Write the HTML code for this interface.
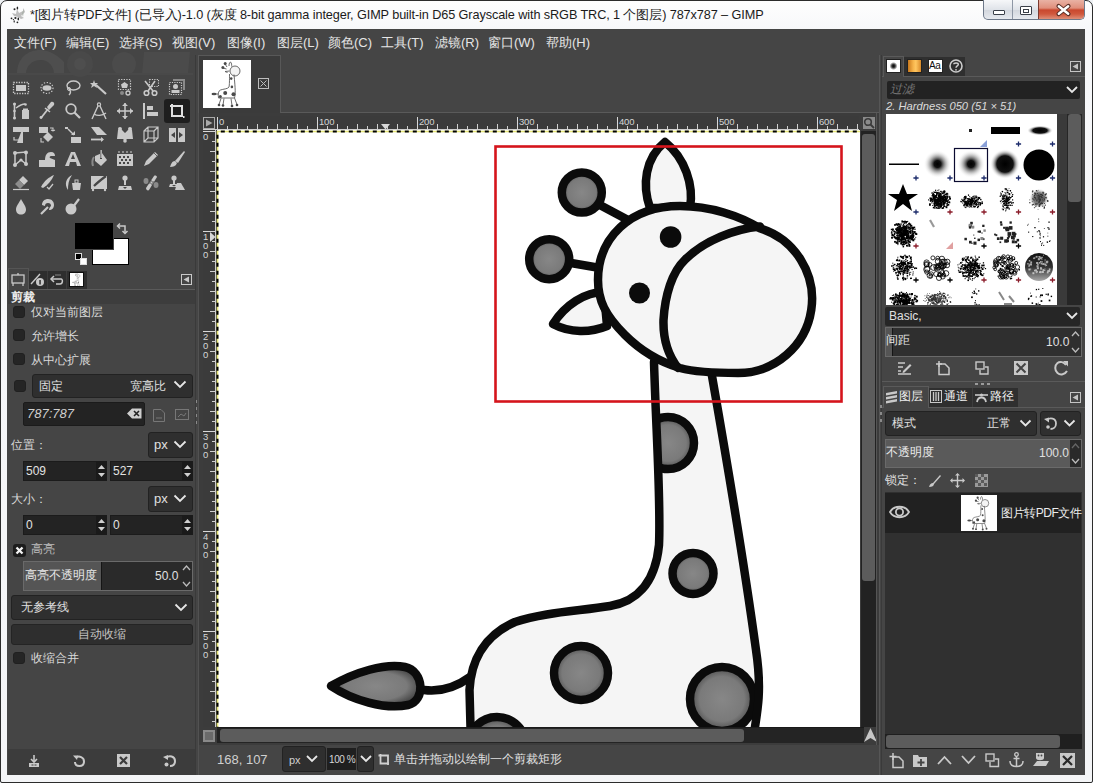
<!DOCTYPE html>
<html><head><meta charset="utf-8">
<style>
*{margin:0;padding:0;box-sizing:border-box}
html,body{width:1093px;height:783px;overflow:hidden;background:#eef1f4;font-family:"Liberation Sans",sans-serif}
.a{position:absolute}
svg{position:absolute;overflow:visible}
#frame{position:absolute;left:0;top:0;width:1093px;height:783px;border:1px solid #2c2c2c;border-radius:7px 7px 2px 2px;background:linear-gradient(#fefefe,#f7f8fa 29px,#f4f5f7)}
#title{position:absolute;left:30px;top:7px;font-size:12.7px;color:#1a1a1a;white-space:nowrap;letter-spacing:-0.1px}
#win{position:absolute;left:7px;top:29px;width:1078px;height:746px;background:#454545;overflow:hidden}
.m{position:absolute;top:8px;font-size:13px;color:#e8e8e8;white-space:nowrap}
.t{position:absolute;color:#dadada;font-size:12px;white-space:nowrap;line-height:14px}
.cb{position:absolute;width:12px;height:12px;border-radius:3px;background:#242424;border:1px solid #1d1d1d}
.dd{position:absolute;background:#2a2a2a;border:1px solid #1e1e1e;border-radius:3px}
.en{position:absolute;background:#222;border:1px solid #1c1c1c;border-radius:2px}
.chev{position:absolute;width:9px;height:9px;border-right:2px solid #e2e2e2;border-bottom:2px solid #e2e2e2;transform:rotate(45deg)}
</style></head><body>
<div id="frame"></div>
<!-- window buttons -->
<div class="a" style="left:983px;top:0;width:102px;height:20px;border:1px solid #6d7889;border-top:none;border-radius:0 0 5px 5px;background:linear-gradient(#f6f7f9,#dfe3e9 50%,#d2d6dd 51%,#e6e9ee);overflow:hidden">
 <div class="a" style="left:28px;top:0;width:1px;height:20px;background:#8e97a5"></div>
 <div class="a" style="left:54px;top:0;width:48px;height:20px;background:linear-gradient(#e9b2a4,#e08f7c 40%,#c9482f 50%,#d0583d 70%,#e19a84);border-left:1px solid #7b3a30"></div>
 <div class="a" style="left:9px;top:10px;width:12px;height:5px;border:1px solid #3a3f48;background:#fff;border-radius:1px"></div>
 <div class="a" style="left:36px;top:6px;width:12px;height:9px;border:1px solid #3a3f48;background:#fff;border-radius:1px"><div class="a" style="left:2px;top:2px;width:6px;height:4px;border:1px solid #3a3f48"></div></div>
 <svg style="left:73px;top:5px" width="13" height="10" viewBox="0 0 13 10"><path d="M1.5 1 L11.5 9 M11.5 1 L1.5 9" stroke="#5a3028" stroke-width="4.2" stroke-linecap="round"/><path d="M1.8 1.2 L11.2 8.8 M11.2 1.2 L1.8 8.8" stroke="#fff" stroke-width="2.4" stroke-linecap="round"/></svg>
</div>
<!-- title icon -->
<svg style="left:5px;top:3px" width="25" height="24" viewBox="0 0 25 24"><path d="M12 6 L14 10 L18 8 L18.5 5 L20 9 L16 13 L19 15 L16 16 L13 14 L9 13 L7 10 L11 11Z" fill="#bdbdbd"/><path d="M17 10 L19 6 L18 14Z" fill="#a8b0a8"/><g fill="#222"><ellipse cx="12.4" cy="5" rx="0.8" ry="1.6"/><circle cx="9.5" cy="6.3" r="1"/><circle cx="10.4" cy="15" r="1.1"/><ellipse cx="13.3" cy="16" rx="0.8" ry="1.4"/><circle cx="12.4" cy="19.3" r="0.9"/><circle cx="6.5" cy="15.3" r="0.9"/><circle cx="8.4" cy="16.6" r="0.7"/><ellipse cx="9.2" cy="18.4" rx="0.6" ry="1.2"/></g></svg>
<div id="title">*[图片转PDF文件] (已导入)-1.0 (灰度 8-bit gamma integer, GIMP built-in D65 Grayscale with sRGB TRC, 1 个图层) 787x787 – GIMP</div>
<div id="win">

</div>
<div class="t" style="left:14px;top:35px;font-size:13px;color:#e6e6e6;line-height:16px">文件(F)</div>
<div class="t" style="left:66px;top:35px;font-size:13px;color:#e6e6e6;line-height:16px">编辑(E)</div>
<div class="t" style="left:119px;top:35px;font-size:13px;color:#e6e6e6;line-height:16px">选择(S)</div>
<div class="t" style="left:172px;top:35px;font-size:13px;color:#e6e6e6;line-height:16px">视图(V)</div>
<div class="t" style="left:227px;top:35px;font-size:13px;color:#e6e6e6;line-height:16px">图像(I)</div>
<div class="t" style="left:277px;top:35px;font-size:13px;color:#e6e6e6;line-height:16px">图层(L)</div>
<div class="t" style="left:328px;top:35px;font-size:13px;color:#e6e6e6;line-height:16px">颜色(C)</div>
<div class="t" style="left:381px;top:35px;font-size:13px;color:#e6e6e6;line-height:16px">工具(T)</div>
<div class="t" style="left:435px;top:35px;font-size:13px;color:#e6e6e6;line-height:16px">滤镜(R)</div>
<div class="t" style="left:488px;top:35px;font-size:13px;color:#e6e6e6;line-height:16px">窗口(W)</div>
<div class="t" style="left:546px;top:35px;font-size:13px;color:#e6e6e6;line-height:16px">帮助(H)</div>
<svg style="left:8px;top:52px" width="185" height="24" viewBox="0 0 185 24"><g fill="#4e4e4e"><path d="M9 22 C9 6 20 -2 32 -2 C42 -2 50 4 56 10 L56 22 L46 22 C46 14 40 8 33 8 C24 8 18 14 18 22Z"/><circle cx="72" cy="12" r="13" fill="#494949"/><circle cx="72" cy="12" r="6" fill="#4e4e4e"/><circle cx="116" cy="12" r="12" fill="#4b4b4b"/><path d="M136 0 L182 0 L180 22 L134 22Z" fill="#4b4b4b"/><rect x="0" y="21" width="185" height="2" fill="#494949"/></g></svg>
<div class="a" style="left:164px;top:99px;width:26px;height:24px;background:#1e1e1e;border-radius:3px"></div>
<svg style="left:13px;top:80px" width="16" height="16" viewBox="0 0 16 16"><rect x="0.5" y="2.5" width="15" height="11" fill="none" stroke="#c9c9c9" stroke-width="1.3" stroke-dasharray="1.3 1.3"/><rect x="3" y="5" width="10" height="6" fill="#c9c9c9"/></svg>
<svg style="left:39px;top:80px" width="16" height="16" viewBox="0 0 16 16"><ellipse cx="8" cy="8" rx="6" ry="5.5" fill="none" stroke="#c9c9c9" stroke-width="1.2" stroke-dasharray="1.3 1.6"/><ellipse cx="8" cy="8" rx="4.5" ry="2.8" fill="#c9c9c9"/></svg>
<svg style="left:65px;top:80px" width="16" height="16" viewBox="0 0 16 16"><ellipse cx="8.5" cy="5.5" rx="6.5" ry="4.5" fill="none" stroke="#c9c9c9" stroke-width="1.4"/><path d="M4 9 C6 11 6 13 4 15" fill="none" stroke="#c9c9c9" stroke-width="1.4"/><circle cx="4" cy="9" r="1.5" fill="none" stroke="#c9c9c9" stroke-width="1"/></svg>
<svg style="left:91px;top:80px" width="16" height="16" viewBox="0 0 16 16"><path d="M3 0 L4 3 L7 3 L5 5 L6 8 L3 6 L0 8 L1 5 L-1 3 L2 3Z" fill="#c9c9c9"/><path d="M5 5 L15 14" stroke="#c9c9c9" stroke-width="2.2"/></svg>
<svg style="left:117px;top:80px" width="16" height="16" viewBox="0 0 16 16"><rect x="1.5" y="-0.5" width="12" height="10" fill="none" stroke="#c9c9c9" stroke-width="1.2" stroke-dasharray="1.3 1.3"/><path d="M7.5 2 L11 4.5 L10 8 L5 8 L4 4.5Z" fill="#c9c9c9"/><circle cx="5" cy="13" r="2" fill="#8a8a8a"/><circle cx="11" cy="13" r="2" fill="none" stroke="#c9c9c9" stroke-width="1.3"/></svg>
<svg style="left:143px;top:80px" width="16" height="16" viewBox="0 0 16 16"><rect x="6.5" y="-0.5" width="9" height="7" fill="none" stroke="#c9c9c9" stroke-width="1.1" stroke-dasharray="1.2 1.2"/><path d="M2 1 L10 11 M12 1 L5 11" stroke="#c9c9c9" stroke-width="1.6"/><circle cx="3.5" cy="13" r="2.3" fill="none" stroke="#c9c9c9" stroke-width="1.6"/><circle cx="11.5" cy="13" r="2.3" fill="none" stroke="#c9c9c9" stroke-width="1.6"/></svg>
<svg style="left:169px;top:80px" width="16" height="16" viewBox="0 0 16 16"><path d="M4 -1 L16 -1 L16 10 L14 10 L14 1 L4 1Z" fill="#8a8a8a"/><rect x="0.5" y="2.5" width="12" height="12" fill="none" stroke="#c9c9c9" stroke-width="1.2" stroke-dasharray="1.2 1.2"/><circle cx="6.5" cy="6.5" r="2.5" fill="#c9c9c9"/><path d="M2.5 13 L2.5 10 L10.5 10 L10.5 13Z" fill="#c9c9c9"/></svg>
<svg style="left:13px;top:103px" width="16" height="16" viewBox="0 0 16 16"><path d="M1.5 0 L1.5 16" stroke="#c9c9c9" stroke-width="1.6"/><circle cx="1.5" cy="1" r="1.5" fill="#c9c9c9"/><circle cx="1.5" cy="8" r="1.3" fill="#c9c9c9"/><circle cx="1.5" cy="15" r="1.5" fill="#c9c9c9"/><path d="M3 5 C7 2 10 1 12 1" fill="none" stroke="#c9c9c9" stroke-width="1.3"/><circle cx="12.5" cy="1.5" r="1.3" fill="#c9c9c9"/><rect x="9" y="7" width="7" height="9" fill="#c9c9c9"/><rect x="10" y="5.5" width="5" height="1.5" fill="#c9c9c9"/></svg>
<svg style="left:39px;top:103px" width="16" height="16" viewBox="0 0 16 16"><path d="M2 15 L9 6" stroke="#c9c9c9" stroke-width="1.8"/><path d="M8 4 L12 -1 C14 -2 16 0 15 2 L10 7Z" fill="#c9c9c9"/><path d="M6 5 L11 9" stroke="#c9c9c9" stroke-width="1.6"/><circle cx="2" cy="14.5" r="1.4" fill="#c9c9c9"/></svg>
<svg style="left:65px;top:103px" width="16" height="16" viewBox="0 0 16 16"><circle cx="6" cy="6" r="4.8" fill="none" stroke="#c9c9c9" stroke-width="1.8"/><path d="M9.5 9.5 L15 15" stroke="#c9c9c9" stroke-width="2.2"/></svg>
<svg style="left:91px;top:103px" width="16" height="16" viewBox="0 0 16 16"><circle cx="8" cy="1.5" r="1.6" fill="none" stroke="#c9c9c9" stroke-width="1.2"/><path d="M7 3 L1 16 M9 3 L15 16" stroke="#c9c9c9" stroke-width="1.4"/><path d="M3 11 C6 13 11 13 15 10" fill="none" stroke="#c9c9c9" stroke-width="1.3"/></svg>
<svg style="left:117px;top:103px" width="16" height="16" viewBox="0 0 16 16"><path d="M8 0 L8 16 M0 8 L16 8" stroke="#c9c9c9" stroke-width="1.5"/><path d="M8 0 L5 3 L11 3Z M8 16 L5 13 L11 13Z M0 8 L3 5 L3 11Z M16 8 L13 5 L13 11Z" fill="#c9c9c9"/></svg>
<svg style="left:143px;top:103px" width="16" height="16" viewBox="0 0 16 16"><rect x="0" y="0" width="2" height="16" fill="#c9c9c9"/><rect x="4" y="3" width="6" height="4" fill="#c9c9c9"/><rect x="4" y="9" width="11" height="4" fill="#c9c9c9"/></svg>
<svg style="left:169px;top:103px" width="16" height="16" viewBox="0 0 16 16"><path d="M3 1 L3 13 L14 13" fill="none" stroke="#e0e0e0" stroke-width="2"/><path d="M1 3 L13 3 L13 14" fill="none" stroke="#e0e0e0" stroke-width="2"/><rect x="14" y="13" width="1.5" height="2" fill="#e0e0e0"/></svg>
<svg style="left:13px;top:127px" width="16" height="16" viewBox="0 0 16 16"><rect x="0" y="0" width="16" height="5" fill="#c9c9c9"/><path d="M10 0 L10 16 L4 16Z" fill="#c9c9c9"/><path d="M1 10 L1 13 L6 13" fill="none" stroke="#c9c9c9" stroke-width="1.2"/><path d="M6 11 L8 13 L6 15" fill="none" stroke="#c9c9c9" stroke-width="1.2"/></svg>
<svg style="left:39px;top:127px" width="16" height="16" viewBox="0 0 16 16"><rect x="0" y="0" width="9" height="6" fill="#c9c9c9"/><path d="M9 5 L14 10 L9 15 L4 10Z" fill="#c9c9c9"/><path d="M11 1 L14 1 L14 4 M12 3 L14 4 L16 3" fill="none" stroke="#c9c9c9" stroke-width="1.1"/><path d="M2 11 L2 15 L5 15" fill="none" stroke="#c9c9c9" stroke-width="1.1"/></svg>
<svg style="left:65px;top:127px" width="16" height="16" viewBox="0 0 16 16"><rect x="0" y="0" width="3" height="2" fill="#c9c9c9"/><path d="M3 2 L9 8" stroke="#c9c9c9" stroke-width="1.4"/><path d="M6 8 L10 8 L10 4Z" fill="#c9c9c9"/><rect x="6" y="10" width="10" height="6" fill="#c9c9c9"/></svg>
<svg style="left:91px;top:127px" width="16" height="16" viewBox="0 0 16 16"><path d="M0 0 L8 0 L16 8 L6 8Z" fill="#c9c9c9"/><path d="M0 12.5 L12 12.5" stroke="#c9c9c9" stroke-width="1.8"/><path d="M10 10 L13 12.5 L10 15Z" fill="#c9c9c9"/></svg>
<svg style="left:117px;top:127px" width="16" height="16" viewBox="0 0 16 16"><path d="M1 3 L5 3 L8 6 L11 3 L15 3 L16 12 L10 12 L8 14 L6 12 L0 12Z" fill="#c9c9c9"/><circle cx="3" cy="2" r="2" fill="#c9c9c9"/><circle cx="13" cy="2" r="2" fill="#c9c9c9"/><circle cx="8" cy="14" r="1.8" fill="#c9c9c9"/></svg>
<svg style="left:143px;top:127px" width="16" height="16" viewBox="0 0 16 16"><path d="M1 4 L5 0 L15 0 L15 11 L11 15 L1 15Z M1 4 L11 4 L11 15 M11 4 L15 0 M5 0 L5 11 L1 15 M5 11 L15 11" fill="none" stroke="#c9c9c9" stroke-width="1.2"/></svg>
<svg style="left:169px;top:127px" width="16" height="16" viewBox="0 0 16 16"><rect x="0" y="1" width="7" height="14" fill="#c9c9c9"/><rect x="9" y="1" width="7" height="14" fill="#c9c9c9"/><path d="M2 8 L6 5 L6 11Z M14 8 L10 5 L10 11Z" fill="#454545"/></svg>
<svg style="left:13px;top:151px" width="16" height="16" viewBox="0 0 16 16"><path d="M2 2 L13 1 L13 13 L8 9 L2 14Z" fill="none" stroke="#c9c9c9" stroke-width="1.5"/><circle cx="2" cy="2" r="2" fill="#c9c9c9"/><circle cx="13" cy="1.5" r="2" fill="#c9c9c9"/><circle cx="13" cy="13" r="2" fill="#c9c9c9"/><circle cx="2" cy="14" r="2" fill="#c9c9c9"/><circle cx="8" cy="9" r="1.6" fill="#c9c9c9"/></svg>
<svg style="left:39px;top:151px" width="16" height="16" viewBox="0 0 16 16"><path d="M0 16 L0 9 L6 9 C6 4 8 1 12 1 C15 1 16 3 16 5 L12 5 C11 5 10 6 11 7 L16 9 L16 16Z" fill="#c9c9c9"/></svg>
<svg style="left:65px;top:151px" width="16" height="16" viewBox="0 0 16 16"><path d="M0 15 L6 1 L10 1 L16 15 L12 15 L11 11 L5 11 L4 15Z M6 8 L10 8 L8 3Z" fill="#c9c9c9" fill-rule="evenodd"/></svg>
<svg style="left:91px;top:151px" width="16" height="16" viewBox="0 0 16 16"><path d="M4 5 L11 2 L16 9 L10 15 L4 10Z" fill="#c9c9c9"/><rect x="9" y="-1" width="2" height="9" fill="#454545"/><rect x="9.5" y="-1" width="1.3" height="8" fill="#c9c9c9"/><path d="M3 6 C1 9 1 12 2 15" fill="none" stroke="#8a8a8a" stroke-width="2"/></svg>
<svg style="left:117px;top:151px" width="16" height="16" viewBox="0 0 16 16"><rect x="0" y="3" width="16" height="12" fill="#c9c9c9"/><g fill="#454545"><rect x="2" y="5" width="2" height="2"/><rect x="6" y="5" width="2" height="2"/><rect x="10" y="5" width="2" height="2"/><rect x="4" y="8" width="2" height="2"/><rect x="8" y="8" width="2" height="2"/><rect x="12" y="8" width="2" height="2"/><rect x="2" y="11" width="2" height="2"/><rect x="6" y="11" width="2" height="2"/><rect x="10" y="11" width="2" height="2"/></g><g fill="#8a8a8a"><rect x="1" y="0" width="2" height="2"/><rect x="5" y="0" width="2" height="2"/><rect x="9" y="0" width="2" height="2"/><rect x="13" y="0" width="2" height="2"/></g></svg>
<svg style="left:143px;top:151px" width="16" height="16" viewBox="0 0 16 16"><path d="M1 15 L3 10 L12 1 L15 4 L6 13Z" fill="#c9c9c9"/><path d="M11 2 L14 5" stroke="#454545" stroke-width="0.8"/></svg>
<svg style="left:169px;top:151px" width="16" height="16" viewBox="0 0 16 16"><path d="M6 10 L15 0 L16 1 L9 12Z" fill="#c9c9c9"/><path d="M1 16 C2 13 3 10 6 10 L8 12 C7 15 4 16 1 16Z" fill="#c9c9c9"/></svg>
<svg style="left:13px;top:175px" width="16" height="16" viewBox="0 0 16 16"><path d="M6 5 L10 1 L15 6 L11 10Z" fill="#c9c9c9"/><path d="M2 9 L6 5 L11 10 L7 14Z" fill="#8c8c8c"/><path d="M0 14.5 L16 14.5" stroke="#c9c9c9" stroke-width="1.2"/></svg>
<svg style="left:39px;top:175px" width="16" height="16" viewBox="0 0 16 16"><path d="M2 12 C5 6 10 2 15 0 C13 5 9 10 4 13Z" fill="#c9c9c9"/><path d="M8 12 L10 14 L14 9" fill="none" stroke="#c9c9c9" stroke-width="1.3"/></svg>
<svg style="left:65px;top:175px" width="16" height="16" viewBox="0 0 16 16"><path d="M7 0 C1 3 -1 9 3 15 C3 10 3.5 5 7 0Z" fill="#c9c9c9"/><path d="M7 8 L16 8 L15 15 L8 15Z" fill="#c9c9c9"/><rect x="10" y="5" width="3" height="3" fill="none" stroke="#c9c9c9" stroke-width="1"/></svg>
<svg style="left:91px;top:175px" width="16" height="16" viewBox="0 0 16 16"><rect x="0" y="1" width="16" height="13" fill="#c9c9c9"/><path d="M3 11 C5 9 11 4 15 1" stroke="#454545" stroke-width="2.2"/><circle cx="2" cy="15" r="1.2" fill="#c9c9c9"/><circle cx="14" cy="15" r="1.2" fill="#c9c9c9"/></svg>
<svg style="left:117px;top:175px" width="16" height="16" viewBox="0 0 16 16"><circle cx="8" cy="3" r="2.6" fill="#c9c9c9"/><rect x="7" y="4" width="2" height="6" fill="#c9c9c9"/><path d="M1 15 L2 11 L14 11 L15 15Z" fill="#c9c9c9"/><path d="M6 12 L10 12 L8 14Z" fill="#454545"/></svg>
<svg style="left:143px;top:175px" width="16" height="16" viewBox="0 0 16 16"><ellipse cx="3" cy="6" rx="2.5" ry="3" fill="#8a8a8a"/><ellipse cx="13" cy="10" rx="2.5" ry="3" fill="#8a8a8a"/><path d="M3 13 L11 1 C12 0 14 1 14 2 L6 15 C5 16 3 15 3 13Z" fill="#c9c9c9"/><g fill="#454545"><circle cx="8" cy="6" r="0.8"/><circle cx="10" cy="7" r="0.8"/><circle cx="7" cy="8" r="0.8"/><circle cx="9" cy="9" r="0.8"/></g></svg>
<svg style="left:169px;top:175px" width="16" height="16" viewBox="0 0 16 16"><circle cx="5" cy="3" r="2.6" fill="#c9c9c9"/><rect x="4" y="4" width="2" height="5" fill="#c9c9c9"/><path d="M0 12 L1 9 L10 9 L10 12Z" fill="#c9c9c9"/><path d="M8 8 L12 8 L16 15 L6 15Z" fill="#c9c9c9"/><path d="M3 10 L7 10 L5 11.5Z" fill="#454545"/></svg>
<svg style="left:13px;top:199px" width="16" height="16" viewBox="0 0 16 16"><path d="M8 0 C10 4 13 7 13 10.5 C13 13.5 11 15.5 8 15.5 C5 15.5 3 13.5 3 10.5 C3 7 6 4 8 0Z" fill="#c9c9c9"/></svg>
<svg style="left:39px;top:199px" width="16" height="16" viewBox="0 0 16 16"><path d="M3 6 C3 2 6 0 9 0 C13 0 15 3 15 6 C15 9 13 11 10 11 C10 9 11 8 12 7 C12 5 11 4 9 4 C7 4 6 5 6 7Z" fill="#c9c9c9"/><path d="M2 15 L9 8" stroke="#c9c9c9" stroke-width="2.2"/></svg>
<svg style="left:65px;top:199px" width="16" height="16" viewBox="0 0 16 16"><circle cx="6" cy="10" r="5.5" fill="#c9c9c9"/><path d="M8 8 L14 0" stroke="#c9c9c9" stroke-width="2.2"/></svg>
<div class="a" style="left:92px;top:238px;width:37px;height:27px;background:#fff;border:1px solid #000"></div>
<div class="a" style="left:74px;top:222px;width:40px;height:28px;background:#000;border:1px solid #454545"></div>
<div class="a" style="left:75px;top:223px;width:38px;height:26px;background:#000"></div>
<svg style="left:117px;top:223px" width="12" height="12" viewBox="0 0 12 12"><path d="M1 3 L8 3 L8 10" fill="none" stroke="#c9c9c9" stroke-width="1.5"/><path d="M3 0.5 L0.5 3 L3 5.5 M5.5 8 L8 10.5 L10.5 8" fill="none" stroke="#c9c9c9" stroke-width="1.5"/></svg>
<div class="a" style="left:75px;top:253px;width:7px;height:7px;background:#000;border:1px solid #ddd"></div>
<div class="a" style="left:80px;top:258px;width:7px;height:7px;background:#fff;border:1px solid #ddd"></div>
<div class="a" style="left:8px;top:289px;width:187px;height:1px;background:#5a5a5a"></div>
<div class="a" style="left:8px;top:268px;width:21px;height:22px;background:#454545;border:1px solid #555;border-bottom:none"></div>
<div class="a" style="left:29px;top:271px;width:58px;height:18px;background:#2e2e2e"></div>
<div class="a" style="left:47px;top:271px;width:1px;height:18px;background:#3c3c3c"></div>
<div class="a" style="left:66px;top:271px;width:1px;height:18px;background:#3c3c3c"></div>
<svg style="left:11px;top:272px" width="16" height="14" viewBox="0 0 16 14"><rect x="1" y="3" width="12" height="8" fill="none" stroke="#c9c9c9" stroke-width="1.3"/><path d="M7 1 L7 3 M2 11 L2 14 M12 11 L12 14" stroke="#c9c9c9" stroke-width="1.3"/></svg>
<svg style="left:31px;top:272px" width="14" height="14" viewBox="0 0 14 14"><path d="M0 12 L9 2" stroke="#c9c9c9" stroke-width="1.4"/><circle cx="9" cy="10" r="4" fill="#c9c9c9"/><rect x="8.3" y="8" width="1.5" height="4.5" fill="#2e2e2e"/></svg>
<svg style="left:50px;top:273px" width="14" height="13" viewBox="0 0 14 13"><path d="M1 6 L11 6 C13 6 13 11 10 11 L6 11" fill="none" stroke="#c9c9c9" stroke-width="1.5"/><path d="M4 3 L1 6 L4 9" fill="none" stroke="#c9c9c9" stroke-width="1.5"/><path d="M5 2 L11 2" stroke="#777" stroke-width="1.2"/></svg>
<div class="a" style="left:69px;top:272px;width:15px;height:15px;background:#fff;border:1px solid #111"></div>
<svg style="left:70px;top:273px" width="13" height="13" viewBox="0 0 48 48"><g fill="none" stroke="#5a5a5a" stroke-width="0.9"><circle cx="32" cy="11" r="5" fill="#f4f4f4"/><path d="M26 6 C26 3 27 2 27.5 2 C28.5 3 29 5 28.5 6.5"/><path d="M24 7 L22 4 M23.5 9 L20 8 M26.5 11 L22 11.5 L24.5 12.5"/><path d="M26.5 14 C26.5 20 26.5 25 26 27 C25 29 20 29 17.5 30 C15 31 15 34 15.5 38 L31.5 38 C32.5 34 32.5 30 31 14.5"/><path d="M9 34 L15 34"/><path d="M18 38.5 L16 44.5 M21 38.5 L20 45 M28 38.5 L29 45.5 M31.5 38 L34 44.5"/></g><g fill="#4a4a4a"><circle cx="22.2" cy="3.6" r="1.5"/><circle cx="19.9" cy="7.6" r="1.5"/><circle cx="28.2" cy="18.6" r="1.3"/><circle cx="28.9" cy="26.9" r="1.3"/><circle cx="22.2" cy="32.9" r="2"/><circle cx="30.5" cy="34.2" r="2"/><circle cx="17.3" cy="36.5" r="1.5"/><ellipse cx="11" cy="34" rx="2.5" ry="1.2"/><circle cx="16" cy="45" r="1.3"/><circle cx="20" cy="45.5" r="1.3"/><circle cx="29" cy="46" r="1.3"/><circle cx="34" cy="45" r="1.3"/></g></svg>
<svg style="left:181px;top:274px" width="11" height="11" viewBox="0 0 11 11"><rect x="0.5" y="0.5" width="10" height="10" fill="none" stroke="#c9c9c9" stroke-width="1"/><path d="M8 2.5 L8 8.5 L2.5 5.5Z" fill="#c9c9c9"/></svg>
<div class="a" style="left:8px;top:290px;width:187px;height:14px;background:#3d3d3d"></div>
<div class="t" style="left:11px;top:289px;font-weight:bold;color:#eee;font-size:12px;line-height:16px">剪裁</div>
<div class="a" style="left:13px;top:306px;width:12px;height:12px;background:#252525;border-radius:3px;border:1px solid #202020"></div>
<div class="t" style="left:31px;top:305px;line-height:14px">仅对当前图层</div>
<div class="a" style="left:13px;top:329px;width:12px;height:12px;background:#252525;border-radius:3px;border:1px solid #202020"></div>
<div class="t" style="left:31px;top:329px;">允许增长</div>
<div class="a" style="left:13px;top:353px;width:12px;height:12px;background:#252525;border-radius:3px;border:1px solid #202020"></div>
<div class="t" style="left:31px;top:353px;">从中心扩展</div>
<div class="a" style="left:14px;top:380px;width:12px;height:12px;background:#252525;border-radius:3px;border:1px solid #202020"></div>
<div class="a" style="left:32px;top:374px;width:161px;height:24px;background:#2f2f2f;border:1px solid #222;border-radius:3px"></div>
<div class="t" style="left:39px;top:379px;color:#e0e0e0">固定</div>
<div class="t" style="left:130px;top:379px;color:#e0e0e0">宽高比</div>
<svg style="left:173px;top:380px" width="14" height="9" viewBox="0 0 14 9"><path d="M1.5 1.5 L7 7 L12.5 1.5" fill="none" stroke="#e6e6e6" stroke-width="1.8"/></svg>
<div class="a" style="left:23px;top:402px;width:122px;height:24px;background:#232323;border:1px solid #1b1b1b;border-radius:2px"></div>
<div class="t" style="left:27px;top:407px;font-style:italic;color:#cfcfcf;font-size:13px">787:787</div>
<svg style="left:127px;top:408px" width="15" height="11" viewBox="0 0 15 11"><path d="M0 5.5 L5 0.5 L14.5 0.5 L14.5 10.5 L5 10.5Z" fill="#cfcfcf"/><path d="M7 3 L12 8 M12 3 L7 8" stroke="#232323" stroke-width="1.6"/></svg>
<svg style="left:153px;top:409px" width="12" height="13" viewBox="0 0 12 13"><path d="M0.5 0.5 L8 0.5 L11.5 4 L11.5 12.5 L0.5 12.5Z" fill="none" stroke="#777" stroke-width="1"/><path d="M3 9 L9 9" stroke="#777"/></svg>
<svg style="left:175px;top:409px" width="14" height="11" viewBox="0 0 14 11"><rect x="0.5" y="0.5" width="13" height="10" fill="none" stroke="#777" stroke-width="1"/><path d="M3 8 L6 5 L9 7 L11 4" fill="none" stroke="#777"/></svg>
<svg style="left:195px;top:400px" width="3" height="26" viewBox="0 0 3 26"><g fill="#8a8a8a"><rect x="0" y="0" width="2" height="3"/><rect x="0" y="7" width="2" height="3"/><rect x="0" y="14" width="2" height="3"/><rect x="0" y="21" width="2" height="3"/></g></svg>
<div class="t" style="left:11px;top:438px;">位置：</div>
<div class="a" style="left:148px;top:432px;width:45px;height:26px;background:#2f2f2f;border:1px solid #222;border-radius:3px"></div>
<div class="t" style="left:154px;top:438px;font-size:13px;color:#e0e0e0">px</div>
<svg style="left:173px;top:440px" width="14" height="9" viewBox="0 0 14 9"><path d="M1.5 1.5 L7 7 L12.5 1.5" fill="none" stroke="#e6e6e6" stroke-width="1.8"/></svg>
<div class="a" style="left:23px;top:461px;width:84px;height:20px;background:#232323;border:1px solid #1b1b1b"></div>
<div class="a" style="left:96px;top:461px;width:11px;height:20px;background:#1a1a1a"></div>
<div class="t" style="left:26px;top:464px;font-size:12px;color:#e2e2e2">509</div>
<svg style="left:97px;top:463px" width="9" height="16" viewBox="0 0 9 16"><path d="M1 6 L4.5 2 L8 6Z M1 10 L4.5 14 L8 10Z" fill="#d0d0d0"/></svg>
<div class="a" style="left:110px;top:461px;width:83px;height:20px;background:#232323;border:1px solid #1b1b1b"></div>
<div class="a" style="left:182px;top:461px;width:11px;height:20px;background:#1a1a1a"></div>
<div class="t" style="left:113px;top:464px;font-size:12px;color:#e2e2e2">527</div>
<svg style="left:183px;top:463px" width="9" height="16" viewBox="0 0 9 16"><path d="M1 6 L4.5 2 L8 6Z M1 10 L4.5 14 L8 10Z" fill="#d0d0d0"/></svg>
<div class="t" style="left:11px;top:492px;">大小：</div>
<div class="a" style="left:148px;top:486px;width:45px;height:26px;background:#2f2f2f;border:1px solid #222;border-radius:3px"></div>
<div class="t" style="left:154px;top:492px;font-size:13px;color:#e0e0e0">px</div>
<svg style="left:173px;top:494px" width="14" height="9" viewBox="0 0 14 9"><path d="M1.5 1.5 L7 7 L12.5 1.5" fill="none" stroke="#e6e6e6" stroke-width="1.8"/></svg>
<div class="a" style="left:23px;top:515px;width:84px;height:20px;background:#232323;border:1px solid #1b1b1b"></div>
<div class="a" style="left:96px;top:515px;width:11px;height:20px;background:#1a1a1a"></div>
<div class="t" style="left:26px;top:518px;font-size:12px;color:#e2e2e2">0</div>
<svg style="left:97px;top:517px" width="9" height="16" viewBox="0 0 9 16"><path d="M1 6 L4.5 2 L8 6Z M1 10 L4.5 14 L8 10Z" fill="#d0d0d0"/></svg>
<div class="a" style="left:110px;top:515px;width:83px;height:20px;background:#232323;border:1px solid #1b1b1b"></div>
<div class="a" style="left:182px;top:515px;width:11px;height:20px;background:#1a1a1a"></div>
<div class="t" style="left:113px;top:518px;font-size:12px;color:#e2e2e2">0</div>
<svg style="left:183px;top:517px" width="9" height="16" viewBox="0 0 9 16"><path d="M1 6 L4.5 2 L8 6Z M1 10 L4.5 14 L8 10Z" fill="#d0d0d0"/></svg>
<div class="a" style="left:13px;top:544px;width:13px;height:13px;background:#1c1c1c;border-radius:3px"></div>
<svg style="left:13px;top:544px" width="13" height="13" viewBox="0 0 13 13"><path d="M3.5 3.5 L9.5 9.5 M9.5 3.5 L3.5 9.5" stroke="#f4f4f4" stroke-width="2.3"/></svg>
<div class="t" style="left:31px;top:542px;color:#bdbdbd">高亮</div>
<div class="a" style="left:23px;top:561px;width:170px;height:30px;background:#2a2a2a;border:1px solid #6a6a6a"></div>
<div class="a" style="left:24px;top:562px;width:77px;height:28px;background:#555"></div>
<div class="a" style="left:101px;top:562px;width:1px;height:28px;background:#151515"></div>
<div class="t" style="left:25px;top:568px;color:#e8e8e8">高亮不透明度</div>
<div class="t" style="left:155px;top:569px;color:#e0e0e0">50.0</div>
<svg style="left:182px;top:563px" width="9" height="26" viewBox="0 0 9 26"><path d="M1 7 L4.5 3 L8 7 M1 19 L4.5 23 L8 19" fill="none" stroke="#bbb" stroke-width="1.3"/></svg>
<div class="a" style="left:11px;top:595px;width:182px;height:25px;background:#2f2f2f;border:1px solid #222;border-radius:3px"></div>
<div class="t" style="left:21px;top:600px;color:#e0e0e0">无参考线</div>
<svg style="left:174px;top:603px" width="14" height="9" viewBox="0 0 14 9"><path d="M1.5 1.5 L7 7 L12.5 1.5" fill="none" stroke="#e6e6e6" stroke-width="1.8"/></svg>
<div class="a" style="left:11px;top:624px;width:182px;height:21px;background:#2e2e2e;border:1px solid #242424;border-radius:3px"></div>
<div class="t" style="left:78px;top:627px;color:#c4c4c4">自动收缩</div>
<div class="a" style="left:13px;top:652px;width:12px;height:12px;background:#252525;border-radius:3px;border:1px solid #202020"></div>
<div class="t" style="left:31px;top:651px;">收缩合并</div>
<div class="a" style="left:195px;top:55px;width:1px;height:720px;background:#3a3a3a"></div>
<div class="a" style="left:198px;top:55px;width:1px;height:720px;background:#525252"></div>
<div class="a" style="left:8px;top:749px;width:187px;height:26px;background:#3c3c3c"></div>
<svg style="left:29px;top:755px" width="10" height="12" viewBox="0 0 10 12"><path d="M5 0 L5 6" stroke="#c9c9c9" stroke-width="1.6"/><path d="M2 4 L5 7 L8 4" fill="none" stroke="#c9c9c9" stroke-width="1.6"/><rect x="0" y="8" width="10" height="4" fill="#c9c9c9"/><rect x="2.5" y="9.5" width="2" height="1" fill="#3c3c3c"/><rect x="5.5" y="9.5" width="2" height="1" fill="#3c3c3c"/></svg>
<svg style="left:73px;top:755px" width="12" height="12" viewBox="0 0 12 12"><path d="M3 2.5 C6 0.5 11 2 11 6.5 C11 9.5 9 11 6.5 11 C4 11 2 9.5 2 7" fill="none" stroke="#c9c9c9" stroke-width="2"/><path d="M0 0.5 L5 0.5 L4 5Z" fill="#c9c9c9"/></svg>
<svg style="left:117px;top:754px" width="13" height="13" viewBox="0 0 13 13"><rect x="0" y="0" width="13" height="13" fill="#c9c9c9"/><path d="M3 3 L10 10 M10 3 L3 10" stroke="#3c3c3c" stroke-width="2.2"/></svg>
<svg style="left:163px;top:755px" width="13" height="12" viewBox="0 0 13 12"><path d="M3 3 C6 0 12 1 12 6 C12 9.5 9.5 11 7 11" fill="none" stroke="#c9c9c9" stroke-width="2"/><path d="M0 2 L5 0 L5 5Z" fill="#c9c9c9"/><circle cx="3.5" cy="9.5" r="2" fill="#c9c9c9"/></svg>
<div class="a" style="left:198px;top:55px;width:682px;height:58px;background:#454545"></div>
<div class="a" style="left:198px;top:112px;width:682px;height:1px;background:#5a5a5a"></div>
<div class="a" style="left:198px;top:55px;width:83px;height:58px;background:#3b3b3b;border:1px solid #585858;border-bottom:none"></div>
<div class="a" style="left:203px;top:60px;width:48px;height:48px;background:#fff"></div>
<svg style="left:203px;top:60px" width="48" height="48" viewBox="0 0 48 48"><g fill="none" stroke="#5a5a5a" stroke-width="0.9"><circle cx="32" cy="11" r="5" fill="#f4f4f4"/><path d="M26 6 C26 3 27 2 27.5 2 C28.5 3 29 5 28.5 6.5"/><path d="M24 7 L22 4 M23.5 9 L20 8 M26.5 11 L22 11.5 L24.5 12.5"/><path d="M26.5 14 C26.5 20 26.5 25 26 27 C25 29 20 29 17.5 30 C15 31 15 34 15.5 38 L31.5 38 C32.5 34 32.5 30 31 14.5"/><path d="M9 34 L15 34"/><path d="M18 38.5 L16 44.5 M21 38.5 L20 45 M28 38.5 L29 45.5 M31.5 38 L34 44.5"/></g><g fill="#4a4a4a"><circle cx="22.2" cy="3.6" r="1.5"/><circle cx="19.9" cy="7.6" r="1.5"/><circle cx="28.2" cy="18.6" r="1.3"/><circle cx="28.9" cy="26.9" r="1.3"/><circle cx="22.2" cy="32.9" r="2"/><circle cx="30.5" cy="34.2" r="2"/><circle cx="17.3" cy="36.5" r="1.5"/><ellipse cx="11" cy="34" rx="2.5" ry="1.2"/><circle cx="16" cy="45" r="1.3"/><circle cx="20" cy="45.5" r="1.3"/><circle cx="29" cy="46" r="1.3"/><circle cx="34" cy="45" r="1.3"/></g></svg>
<svg style="left:258px;top:78px" width="11" height="11" viewBox="0 0 11 11"><rect x="0.5" y="0.5" width="10" height="10" fill="none" stroke="#bdbdbd" stroke-width="1"/><path d="M2.5 2.5 L8.5 8.5 M8.5 2.5 L2.5 8.5" stroke="#bdbdbd" stroke-width="1"/></svg>
<div class="a" style="left:199px;top:113px;width:681px;height:632px;background:#3c3c3c"></div>
<div class="a" style="left:216px;top:116px;width:643px;height:14px;background:#3b3b3b"></div>
<div class="a" style="left:203px;top:130px;width:13px;height:597px;background:#3b3b3b"></div>
<div class="a" style="left:203px;top:129px;width:13px;height:1px;background:#cfcfcf"></div>
<div class="a" style="left:216px;top:129px;width:643px;height:1px;background:#cfcfcf"></div>
<div class="a" style="left:215px;top:130px;width:1px;height:597px;background:#cfcfcf"></div>
<svg style="left:203px;top:117px" width="12" height="12" viewBox="0 0 12 12"><rect x="0.5" y="0.5" width="11" height="11" fill="none" stroke="#aaa" stroke-width="1"/><path d="M3 2.5 L9.5 6 L3 9.5Z" fill="#aaa"/></svg>
<svg style="left:216px;top:116px" width="643" height="14" viewBox="0 0 643 14"><rect x="1" y="1" width="1" height="12" fill="#d8d8d8"/><rect x="11" y="10" width="1" height="3" fill="#d0d0d0"/><rect x="21" y="8" width="1" height="5" fill="#d0d0d0"/><rect x="31" y="10" width="1" height="3" fill="#d0d0d0"/><rect x="41" y="8" width="1" height="5" fill="#d0d0d0"/><rect x="51" y="10" width="1" height="3" fill="#d0d0d0"/><rect x="61" y="8" width="1" height="5" fill="#d0d0d0"/><rect x="71" y="10" width="1" height="3" fill="#d0d0d0"/><rect x="81" y="8" width="1" height="5" fill="#d0d0d0"/><rect x="91" y="10" width="1" height="3" fill="#d0d0d0"/><rect x="101" y="1" width="1" height="12" fill="#d8d8d8"/><rect x="111" y="10" width="1" height="3" fill="#d0d0d0"/><rect x="121" y="8" width="1" height="5" fill="#d0d0d0"/><rect x="131" y="10" width="1" height="3" fill="#d0d0d0"/><rect x="141" y="8" width="1" height="5" fill="#d0d0d0"/><rect x="151" y="10" width="1" height="3" fill="#d0d0d0"/><rect x="161" y="8" width="1" height="5" fill="#d0d0d0"/><rect x="171" y="10" width="1" height="3" fill="#d0d0d0"/><rect x="181" y="8" width="1" height="5" fill="#d0d0d0"/><rect x="191" y="10" width="1" height="3" fill="#d0d0d0"/><rect x="201" y="1" width="1" height="12" fill="#d8d8d8"/><rect x="211" y="10" width="1" height="3" fill="#d0d0d0"/><rect x="221" y="8" width="1" height="5" fill="#d0d0d0"/><rect x="231" y="10" width="1" height="3" fill="#d0d0d0"/><rect x="241" y="8" width="1" height="5" fill="#d0d0d0"/><rect x="251" y="10" width="1" height="3" fill="#d0d0d0"/><rect x="261" y="8" width="1" height="5" fill="#d0d0d0"/><rect x="271" y="10" width="1" height="3" fill="#d0d0d0"/><rect x="281" y="8" width="1" height="5" fill="#d0d0d0"/><rect x="291" y="10" width="1" height="3" fill="#d0d0d0"/><rect x="301" y="1" width="1" height="12" fill="#d8d8d8"/><rect x="311" y="10" width="1" height="3" fill="#d0d0d0"/><rect x="321" y="8" width="1" height="5" fill="#d0d0d0"/><rect x="331" y="10" width="1" height="3" fill="#d0d0d0"/><rect x="341" y="8" width="1" height="5" fill="#d0d0d0"/><rect x="351" y="10" width="1" height="3" fill="#d0d0d0"/><rect x="361" y="8" width="1" height="5" fill="#d0d0d0"/><rect x="371" y="10" width="1" height="3" fill="#d0d0d0"/><rect x="381" y="8" width="1" height="5" fill="#d0d0d0"/><rect x="391" y="10" width="1" height="3" fill="#d0d0d0"/><rect x="401" y="1" width="1" height="12" fill="#d8d8d8"/><rect x="411" y="10" width="1" height="3" fill="#d0d0d0"/><rect x="421" y="8" width="1" height="5" fill="#d0d0d0"/><rect x="431" y="10" width="1" height="3" fill="#d0d0d0"/><rect x="441" y="8" width="1" height="5" fill="#d0d0d0"/><rect x="451" y="10" width="1" height="3" fill="#d0d0d0"/><rect x="461" y="8" width="1" height="5" fill="#d0d0d0"/><rect x="471" y="10" width="1" height="3" fill="#d0d0d0"/><rect x="481" y="8" width="1" height="5" fill="#d0d0d0"/><rect x="491" y="10" width="1" height="3" fill="#d0d0d0"/><rect x="501" y="1" width="1" height="12" fill="#d8d8d8"/><rect x="511" y="10" width="1" height="3" fill="#d0d0d0"/><rect x="521" y="8" width="1" height="5" fill="#d0d0d0"/><rect x="531" y="10" width="1" height="3" fill="#d0d0d0"/><rect x="541" y="8" width="1" height="5" fill="#d0d0d0"/><rect x="551" y="10" width="1" height="3" fill="#d0d0d0"/><rect x="561" y="8" width="1" height="5" fill="#d0d0d0"/><rect x="571" y="10" width="1" height="3" fill="#d0d0d0"/><rect x="581" y="8" width="1" height="5" fill="#d0d0d0"/><rect x="591" y="10" width="1" height="3" fill="#d0d0d0"/><rect x="601" y="1" width="1" height="12" fill="#d8d8d8"/><rect x="611" y="10" width="1" height="3" fill="#d0d0d0"/><rect x="621" y="8" width="1" height="5" fill="#d0d0d0"/><rect x="631" y="10" width="1" height="3" fill="#d0d0d0"/><rect x="641" y="8" width="1" height="5" fill="#d0d0d0"/></svg>
<div class="t" style="left:219px;top:117px;font-size:9.5px;color:#d6d6d6;line-height:10px;letter-spacing:-0.2px">0</div>
<div class="t" style="left:319px;top:117px;font-size:9.5px;color:#d6d6d6;line-height:10px;letter-spacing:-0.2px">100</div>
<div class="t" style="left:419px;top:117px;font-size:9.5px;color:#d6d6d6;line-height:10px;letter-spacing:-0.2px">200</div>
<div class="t" style="left:519px;top:117px;font-size:9.5px;color:#d6d6d6;line-height:10px;letter-spacing:-0.2px">300</div>
<div class="t" style="left:619px;top:117px;font-size:9.5px;color:#d6d6d6;line-height:10px;letter-spacing:-0.2px">400</div>
<div class="t" style="left:719px;top:117px;font-size:9.5px;color:#d6d6d6;line-height:10px;letter-spacing:-0.2px">500</div>
<div class="t" style="left:819px;top:117px;font-size:9.5px;color:#d6d6d6;line-height:10px;letter-spacing:-0.2px">600</div>
<svg style="left:203px;top:130px" width="12" height="597" viewBox="0 0 12 597"><rect x="0" y="1" width="12" height="1" fill="#d8d8d8"/><rect x="9" y="11" width="3" height="1" fill="#d0d0d0"/><rect x="7" y="21" width="5" height="1" fill="#d0d0d0"/><rect x="9" y="31" width="3" height="1" fill="#d0d0d0"/><rect x="7" y="41" width="5" height="1" fill="#d0d0d0"/><rect x="9" y="51" width="3" height="1" fill="#d0d0d0"/><rect x="7" y="61" width="5" height="1" fill="#d0d0d0"/><rect x="9" y="71" width="3" height="1" fill="#d0d0d0"/><rect x="7" y="81" width="5" height="1" fill="#d0d0d0"/><rect x="9" y="91" width="3" height="1" fill="#d0d0d0"/><rect x="0" y="101" width="12" height="1" fill="#d8d8d8"/><rect x="9" y="111" width="3" height="1" fill="#d0d0d0"/><rect x="7" y="121" width="5" height="1" fill="#d0d0d0"/><rect x="9" y="131" width="3" height="1" fill="#d0d0d0"/><rect x="7" y="141" width="5" height="1" fill="#d0d0d0"/><rect x="9" y="151" width="3" height="1" fill="#d0d0d0"/><rect x="7" y="161" width="5" height="1" fill="#d0d0d0"/><rect x="9" y="171" width="3" height="1" fill="#d0d0d0"/><rect x="7" y="181" width="5" height="1" fill="#d0d0d0"/><rect x="9" y="191" width="3" height="1" fill="#d0d0d0"/><rect x="0" y="201" width="12" height="1" fill="#d8d8d8"/><rect x="9" y="211" width="3" height="1" fill="#d0d0d0"/><rect x="7" y="221" width="5" height="1" fill="#d0d0d0"/><rect x="9" y="231" width="3" height="1" fill="#d0d0d0"/><rect x="7" y="241" width="5" height="1" fill="#d0d0d0"/><rect x="9" y="251" width="3" height="1" fill="#d0d0d0"/><rect x="7" y="261" width="5" height="1" fill="#d0d0d0"/><rect x="9" y="271" width="3" height="1" fill="#d0d0d0"/><rect x="7" y="281" width="5" height="1" fill="#d0d0d0"/><rect x="9" y="291" width="3" height="1" fill="#d0d0d0"/><rect x="0" y="301" width="12" height="1" fill="#d8d8d8"/><rect x="9" y="311" width="3" height="1" fill="#d0d0d0"/><rect x="7" y="321" width="5" height="1" fill="#d0d0d0"/><rect x="9" y="331" width="3" height="1" fill="#d0d0d0"/><rect x="7" y="341" width="5" height="1" fill="#d0d0d0"/><rect x="9" y="351" width="3" height="1" fill="#d0d0d0"/><rect x="7" y="361" width="5" height="1" fill="#d0d0d0"/><rect x="9" y="371" width="3" height="1" fill="#d0d0d0"/><rect x="7" y="381" width="5" height="1" fill="#d0d0d0"/><rect x="9" y="391" width="3" height="1" fill="#d0d0d0"/><rect x="0" y="401" width="12" height="1" fill="#d8d8d8"/><rect x="9" y="411" width="3" height="1" fill="#d0d0d0"/><rect x="7" y="421" width="5" height="1" fill="#d0d0d0"/><rect x="9" y="431" width="3" height="1" fill="#d0d0d0"/><rect x="7" y="441" width="5" height="1" fill="#d0d0d0"/><rect x="9" y="451" width="3" height="1" fill="#d0d0d0"/><rect x="7" y="461" width="5" height="1" fill="#d0d0d0"/><rect x="9" y="471" width="3" height="1" fill="#d0d0d0"/><rect x="7" y="481" width="5" height="1" fill="#d0d0d0"/><rect x="9" y="491" width="3" height="1" fill="#d0d0d0"/><rect x="0" y="501" width="12" height="1" fill="#d8d8d8"/><rect x="9" y="511" width="3" height="1" fill="#d0d0d0"/><rect x="7" y="521" width="5" height="1" fill="#d0d0d0"/><rect x="9" y="531" width="3" height="1" fill="#d0d0d0"/><rect x="7" y="541" width="5" height="1" fill="#d0d0d0"/><rect x="9" y="551" width="3" height="1" fill="#d0d0d0"/><rect x="7" y="561" width="5" height="1" fill="#d0d0d0"/><rect x="9" y="571" width="3" height="1" fill="#d0d0d0"/><rect x="7" y="581" width="5" height="1" fill="#d0d0d0"/><rect x="9" y="591" width="3" height="1" fill="#d0d0d0"/></svg>
<div class="t" style="left:203px;top:132px;font-size:9.5px;color:#d6d6d6;line-height:9px">0</div>
<div class="t" style="left:203px;top:232px;font-size:9.5px;color:#d6d6d6;line-height:9px">1<br>0<br>0</div>
<div class="t" style="left:203px;top:332px;font-size:9.5px;color:#d6d6d6;line-height:9px">2<br>0<br>0</div>
<div class="t" style="left:203px;top:432px;font-size:9.5px;color:#d6d6d6;line-height:9px">3<br>0<br>0</div>
<div class="t" style="left:203px;top:532px;font-size:9.5px;color:#d6d6d6;line-height:9px">4<br>0<br>0</div>
<div class="t" style="left:203px;top:632px;font-size:9.5px;color:#d6d6d6;line-height:9px">5<br>0<br>0</div>
<div class="a" style="left:217px;top:130px;width:643px;height:597px;background:#fff"></div>
<svg style="left:216px;top:130px" width="644" height="597" viewBox="0 0 644 597"><path d="M1 1.5 L644 1.5 M1.5 1 L1.5 597" stroke="#e6e67a" stroke-width="1.6"/><path d="M4.8 1.5 L644 1.5" stroke="#000" stroke-width="2" stroke-dasharray="4 4"/><path d="M1.5 4.8 L1.5 597" stroke="#000" stroke-width="2" stroke-dasharray="4 4"/></svg>
<svg style="left:381px;top:124px" width="9" height="6" viewBox="0 0 9 6"><path d="M0 0 L9 0 L4.5 5.5Z" fill="#d8d8d8"/></svg>
<svg style="left:210px;top:232px" width="6" height="10" viewBox="0 0 6 10"><path d="M0 0 L5.5 5 L0 10Z" fill="#d8d8d8"/></svg>
<svg style="left:0px;top:0px" width="1093" height="783" viewBox="0 0 1093 783"><defs><clipPath id="cc"><rect x="217" y="131" width="643" height="596"/></clipPath></defs><g clip-path="url(#cc)">
<defs>
<radialGradient id="spg"><stop offset="0" stop-color="#878787"/><stop offset="0.7" stop-color="#7a7a7a"/><stop offset="1" stop-color="#4a4a4a"/></radialGradient>
<clipPath id="bodyc"><path d="M654 362 C656 430 661 500 659 545 C655 585 635 602 610 606 C580 611 545 612 515 622 C485 635 471 660 469.5 690 L471 745 L752 745 C758 710 762 690 756 650 C745 570 725 450 712 376Z"/></clipPath>
</defs>
<g stroke="#0b0b0b" stroke-width="8.5" stroke-linecap="round" stroke-linejoin="round">
 <path d="M331 686 C355 672 385 663 405 667 C424 671 426 701 408 705 C385 710 352 700 331 686Z" fill="url(#spg)"/>
 <path d="M424 690 C440 692 455 688 470 677" fill="none"/>
 <path d="M654 362 C656 430 661 500 659 545 C655 585 635 602 610 606 C580 611 545 612 515 622 C485 635 471 660 469.5 690 L471 745 L752 745 C758 710 762 690 756 650 C745 570 725 450 712 376Z" fill="#f5f5f5" stroke="none"/>
 <g clip-path="url(#bodyc)">
  <circle cx="668" cy="443" r="26" fill="url(#spg)"/>
  <circle cx="693" cy="573.5" r="20.5" fill="url(#spg)"/>
  <circle cx="581" cy="673" r="27" fill="url(#spg)"/>
  <circle cx="722" cy="699" r="32" fill="url(#spg)"/>
  <circle cx="497" cy="746" r="29" fill="url(#spg)"/>
 </g>
 <path d="M654 362 C656 430 661 500 659 545 C655 585 635 602 610 606 C580 611 545 612 515 622 C485 635 471 660 469.5 690 L471 745" fill="none"/>
 <path d="M712 376 C725 450 745 570 756 650 C762 690 758 710 752 745" fill="none"/>
 <path d="M650 208 C642 185 645 158 665 142 C685 158 694 185 690 208Z" fill="#f5f5f5"/>
 <path d="M598 204 L628 220 M571 263 L600 268" fill="none"/>
 <circle cx="581.8" cy="192.5" r="20" fill="url(#spg)"/>
 <circle cx="549.2" cy="259.2" r="20" fill="url(#spg)"/>
 <path d="M604 292 C585 292 565 305 553 324 C570 333 590 333 607 326Z" fill="#f5f5f5"/>
 <path d="M759.6 228.2 A74 74 0 0 1 738 373 C715 373 695 372 680 368 C660 362 640 350 625 335 C605 315 598 300 598 280 C598 238 630 206 680 206 C710 206 740 216 759.6 228.2Z" fill="#f5f5f5"/>
 <path d="M760 226.5 C735 229 705 240 685 259.7 C672 272 665 295 663.5 320 C663 338 668 355 678 368" fill="none"/>
</g>
<g fill="#0b0b0b"><circle cx="670.6" cy="237" r="10.8"/><circle cx="639.5" cy="293" r="10.5"/></g>
<rect x="495.5" y="146.5" width="346" height="255" fill="none" stroke="#d5141c" stroke-width="2.6"/></g></svg>
<div class="a" style="left:861px;top:131px;width:15px;height:596px;background:#222"></div>
<div class="a" style="left:862px;top:134px;width:13px;height:447px;background:#5c5c5c;border-radius:3px"></div>
<svg style="left:863px;top:117px" width="12" height="12" viewBox="0 0 12 12"><rect x="0" y="0" width="12" height="12" fill="#8a8a8a"/><circle cx="5" cy="5" r="3.3" fill="none" stroke="#3a3a3a" stroke-width="1.6"/><path d="M7.5 7.5 L11 11" stroke="#3a3a3a" stroke-width="1.8"/></svg>
<div class="a" style="left:217px;top:727px;width:647px;height:16px;background:#242424;border-top:1px solid #1a1a1a"></div>
<div class="a" style="left:220px;top:729px;width:524px;height:13px;background:#5c5c5c;border-radius:3px"></div>
<svg style="left:203px;top:730px" width="12" height="12" viewBox="0 0 12 12"><rect x="0" y="0" width="12" height="12" fill="#8a8a8a"/><rect x="2" y="2" width="8" height="8" fill="#6a6a6a"/></svg>
<svg style="left:864px;top:728px" width="13" height="14" viewBox="0 0 13 14"><path d="M6.5 0 L13 14 L6.5 10 L0 14Z" fill="#c6c6c6"/></svg>
<div class="a" style="left:876px;top:113px;width:1px;height:632px;background:#555"></div>
<div class="a" style="left:879px;top:55px;width:1px;height:720px;background:#565656"></div>
<div class="a" style="left:881px;top:55px;width:1px;height:720px;background:#3a3a3a"></div>
<div class="t" style="left:217px;top:752px;font-size:13px;color:#d0d0d0;line-height:16px">168, 107</div>
<div class="a" style="left:282px;top:746px;width:44px;height:26px;background:#2f2f2f;border:1px solid #222;border-radius:3px"></div>
<div class="t" style="left:289px;top:753px;font-size:11px;color:#cfcfcf">px</div>
<svg style="left:306px;top:755px" width="12" height="8" viewBox="0 0 12 8"><path d="M1 1 L6 6 L11 1" fill="none" stroke="#e6e6e6" stroke-width="1.8"/></svg>
<div class="a" style="left:327px;top:748px;width:29px;height:22px;background:#1f1f1f"></div>
<div class="t" style="left:329px;top:753px;font-size:10px;color:#d6d6d6;letter-spacing:-0.4px">100 %</div>
<div class="a" style="left:357px;top:746px;width:17px;height:26px;background:#2f2f2f;border:1px solid #222;border-radius:3px"></div>
<svg style="left:360px;top:755px" width="12" height="8" viewBox="0 0 12 8"><path d="M1 1 L6 6 L11 1" fill="none" stroke="#e6e6e6" stroke-width="1.8"/></svg>
<svg style="left:378px;top:753px" width="13" height="13" viewBox="0 0 13 13"><path d="M2.5 1 L2.5 10.5 L11 10.5" fill="none" stroke="#d0d0d0" stroke-width="1.8"/><path d="M0.5 2.5 L10 2.5 L10 12" fill="none" stroke="#d0d0d0" stroke-width="1.8"/></svg>
<div class="t" style="left:394px;top:751px;font-size:12px;color:#e0e0e0;line-height:16px">单击并拖动以绘制一个剪裁矩形</div>
<div class="a" style="left:882px;top:76px;width:203px;height:1px;background:#5a5a5a"></div>
<div class="a" style="left:883px;top:56px;width:21px;height:21px;background:#454545;border:1px solid #5a5a5a;border-bottom:none"></div>
<div class="a" style="left:904px;top:57px;width:61px;height:19px;background:#2f2f2f"></div>
<div class="a" style="left:886px;top:59px;width:15px;height:14px;background:#fff;border:1px solid #222"></div>
<svg style="left:886px;top:59px" width="15" height="14" viewBox="0 0 15 14"><defs><radialGradient id="bg1"><stop offset="0" stop-color="#000"/><stop offset="0.4" stop-color="#333"/><stop offset="1" stop-color="#fff"/></radialGradient></defs><circle cx="7.5" cy="7" r="4" fill="url(#bg1)"/></svg>
<div class="a" style="left:907px;top:59px;width:15px;height:14px;background:linear-gradient(90deg,#c8781c,#f6b34a 40%,#ffc660 60%,#d98a2a);border:1px solid #222"></div>
<div class="a" style="left:928px;top:59px;width:15px;height:14px;background:#fff;border:1px solid #222"></div>
<div class="t" style="left:929px;top:60px;font-size:10px;color:#111;line-height:12px;letter-spacing:-0.5px">Aa</div>
<svg style="left:949px;top:59px" width="14" height="14" viewBox="0 0 14 14"><circle cx="7" cy="7" r="6" fill="none" stroke="#ccc" stroke-width="1.6"/><path d="M4.8 5.3 C4.8 3.5 9.3 3.3 9.3 5.5 C9.3 7 7 7 7 8.8" fill="none" stroke="#ccc" stroke-width="1.5"/><circle cx="7" cy="10.8" r="0.9" fill="#ccc"/></svg>
<svg style="left:1070px;top:61px" width="11" height="11" viewBox="0 0 11 11"><rect x="0.5" y="0.5" width="10" height="10" fill="none" stroke="#c4c4c4" stroke-width="1"/><path d="M8 2.5 L8 8.5 L2.5 5.5Z" fill="#c4c4c4"/></svg>
<div class="a" style="left:887px;top:81px;width:193px;height:18px;background:#222;border-radius:2px"></div>
<div class="t" style="left:890px;top:82px;font-style:italic;color:#777;font-size:12px">过滤</div>
<svg style="left:1066px;top:86px" width="12" height="8" viewBox="0 0 12 8"><path d="M1 1 L6 6 L11 1" fill="none" stroke="#e6e6e6" stroke-width="1.8"/></svg>
<div class="t" style="left:886px;top:99px;font-style:italic;color:#dcdcdc;font-size:11.2px;line-height:15px">2. Hardness 050 (51 × 51)</div>
<div class="a" style="left:886px;top:114px;width:171px;height:191px;background:#fff"></div>
<div class="a" style="left:1057px;top:114px;width:10px;height:191px;background:#3a3a3a"></div>
<div class="a" style="left:1067px;top:114px;width:15px;height:191px;background:#262626"></div>
<div class="a" style="left:1068px;top:114px;width:13px;height:88px;background:#5c5c5c;border-radius:3px"></div>
<svg style="left:886px;top:114px" width="171" height="191" viewBox="0 0 171 191"><defs><clipPath id="bgc"><rect x="0" y="0" width="171" height="191"/></clipPath></defs><g clip-path="url(#bgc)"><defs><radialGradient id="sf"><stop offset="0" stop-color="#000"/><stop offset="0.25" stop-color="#111"/><stop offset="1" stop-color="#fff" stop-opacity="0"/></radialGradient><radialGradient id="sf2"><stop offset="0" stop-color="#000"/><stop offset="0.55" stop-color="#111"/><stop offset="1" stop-color="#fff" stop-opacity="0"/></radialGradient><radialGradient id="sf3"><stop offset="0" stop-color="#000"/><stop offset="0.1" stop-color="#000"/><stop offset="1" stop-color="#fff" stop-opacity="0"/></radialGradient><radialGradient id="sp"><stop offset="0" stop-color="#000"/><stop offset="0.6" stop-color="#222" stop-opacity="0.8"/><stop offset="1" stop-color="#fff" stop-opacity="0"/></radialGradient></defs><rect x="83" y="15" width="3" height="3" fill="#222"/><rect x="105" y="13" width="29" height="7" fill="#000"/><ellipse cx="154" cy="16.5" rx="13" ry="5" fill="url(#sf2)"/><rect x="3" y="49.5" width="30" height="1.5" fill="#000"/><circle cx="51.5" cy="50" r="14" fill="url(#sf)"/><circle cx="85" cy="50" r="14" fill="url(#sf)"/><rect x="68.5" y="34.5" width="33" height="33" fill="none" stroke="#0a0a30" stroke-width="1.2"/><circle cx="119" cy="50" r="15" fill="url(#sf2)"/><circle cx="153" cy="51" r="15.5" fill="#000"/><path d="M17 70 L21 80 L32 80 L23 86 L26 97 L17 90 L8 97 L11 86 L2 80 L13 80Z" fill="#000"/><g fill="#000" opacity="1.0"><rect x="51.1" y="87.6" width="1.5" height="1.5"/><rect x="58.6" y="87.7" width="1.2" height="1.2"/><rect x="58.6" y="87.1" width="0.8" height="0.8"/><rect x="50.6" y="85.8" width="0.9" height="0.9"/><rect x="43.3" y="89.3" width="0.9" height="0.9"/><rect x="53.8" y="91.9" width="1.8" height="1.8"/><rect x="47.6" y="82.7" width="1.8" height="1.8"/><rect x="62.9" y="87.9" width="1.1" height="1.1"/><rect x="54.2" y="87.0" width="1.1" height="1.1"/><rect x="53.9" y="82.1" width="1.4" height="1.4"/><rect x="49.1" y="81.3" width="1.3" height="1.3"/><rect x="54.3" y="85.7" width="1.0" height="1.0"/><rect x="50.0" y="80.2" width="1.1" height="1.1"/><rect x="47.3" y="82.2" width="1.1" height="1.1"/><rect x="54.8" y="77.6" width="1.0" height="1.0"/><rect x="46.5" y="82.2" width="1.7" height="1.7"/><rect x="51.9" y="80.9" width="1.8" height="1.8"/><rect x="56.7" y="88.5" width="1.6" height="1.6"/><rect x="56.2" y="89.7" width="0.8" height="0.8"/><rect x="47.9" y="77.6" width="1.4" height="1.4"/><rect x="55.9" y="81.9" width="1.5" height="1.5"/><rect x="46.5" y="81.3" width="1.3" height="1.3"/><rect x="44.5" y="86.2" width="0.8" height="0.8"/><rect x="50.1" y="78.1" width="1.8" height="1.8"/><rect x="54.5" y="81.3" width="1.2" height="1.2"/><rect x="51.9" y="84.1" width="1.3" height="1.3"/><rect x="53.9" y="87.2" width="0.8" height="0.8"/><rect x="52.8" y="82.4" width="1.0" height="1.0"/><rect x="57.8" y="87.6" width="1.4" height="1.4"/><rect x="60.1" y="78.8" width="1.7" height="1.7"/><rect x="51.5" y="90.1" width="1.2" height="1.2"/><rect x="54.5" y="87.5" width="1.0" height="1.0"/><rect x="53.2" y="90.7" width="1.4" height="1.4"/><rect x="52.5" y="85.5" width="1.2" height="1.2"/><rect x="47.7" y="89.7" width="1.8" height="1.8"/><rect x="50.1" y="79.4" width="1.4" height="1.4"/><rect x="51.7" y="83.5" width="1.7" height="1.7"/><rect x="54.1" y="80.2" width="1.2" height="1.2"/><rect x="58.7" y="89.3" width="0.8" height="0.8"/><rect x="55.9" y="86.4" width="0.9" height="0.9"/><rect x="51.5" y="86.4" width="0.8" height="0.8"/><rect x="54.0" y="86.9" width="1.2" height="1.2"/><rect x="50.1" y="83.1" width="1.0" height="1.0"/><rect x="49.5" y="88.9" width="0.9" height="0.9"/><rect x="46.3" y="86.2" width="0.9" height="0.9"/><rect x="56.5" y="87.7" width="1.1" height="1.1"/><rect x="54.1" y="82.4" width="0.8" height="0.8"/><rect x="58.9" y="83.1" width="0.9" height="0.9"/><rect x="51.3" y="84.7" width="1.3" height="1.3"/><rect x="63.4" y="83.7" width="1.5" height="1.5"/><rect x="52.1" y="89.8" width="1.0" height="1.0"/><rect x="53.4" y="78.9" width="1.6" height="1.6"/><rect x="50.6" y="88.1" width="1.6" height="1.6"/><rect x="63.2" y="84.1" width="1.6" height="1.6"/><rect x="56.3" y="77.5" width="1.0" height="1.0"/><rect x="47.4" y="84.5" width="0.8" height="0.8"/><rect x="56.9" y="85.7" width="1.0" height="1.0"/><rect x="49.9" y="87.7" width="1.0" height="1.0"/><rect x="53.7" y="88.2" width="1.4" height="1.4"/><rect x="61.0" y="79.4" width="1.3" height="1.3"/><rect x="46.9" y="77.6" width="0.9" height="0.9"/><rect x="54.3" y="76.8" width="1.3" height="1.3"/><rect x="56.7" y="92.9" width="1.1" height="1.1"/><rect x="48.1" y="88.1" width="1.8" height="1.8"/><rect x="52.0" y="82.0" width="0.9" height="0.9"/><rect x="53.6" y="82.4" width="1.6" height="1.6"/><rect x="60.5" y="84.1" width="1.1" height="1.1"/><rect x="49.7" y="84.2" width="0.8" height="0.8"/><rect x="60.3" y="83.7" width="1.3" height="1.3"/><rect x="57.9" y="82.8" width="1.7" height="1.7"/><rect x="54.2" y="81.9" width="1.0" height="1.0"/><rect x="51.4" y="88.6" width="1.4" height="1.4"/><rect x="52.2" y="90.2" width="0.9" height="0.9"/><rect x="56.8" y="82.5" width="1.3" height="1.3"/><rect x="45.7" y="84.9" width="1.3" height="1.3"/><rect x="58.4" y="85.6" width="1.0" height="1.0"/><rect x="62.4" y="85.2" width="1.0" height="1.0"/><rect x="43.8" y="86.3" width="1.4" height="1.4"/><rect x="49.4" y="90.4" width="1.4" height="1.4"/><rect x="53.1" y="82.7" width="1.4" height="1.4"/><rect x="52.5" y="89.0" width="1.6" height="1.6"/><rect x="45.4" y="84.7" width="1.6" height="1.6"/><rect x="57.6" y="82.2" width="1.4" height="1.4"/><rect x="45.9" y="84.8" width="1.5" height="1.5"/><rect x="46.0" y="86.8" width="1.3" height="1.3"/><rect x="60.5" y="82.2" width="1.7" height="1.7"/><rect x="56.5" y="83.6" width="1.4" height="1.4"/><rect x="62.4" y="81.7" width="0.9" height="0.9"/><rect x="56.8" y="88.7" width="0.9" height="0.9"/><rect x="52.6" y="86.9" width="1.5" height="1.5"/><rect x="57.4" y="91.5" width="1.5" height="1.5"/><rect x="56.3" y="84.3" width="1.8" height="1.8"/><rect x="47.4" y="88.4" width="1.8" height="1.8"/><rect x="54.1" y="82.4" width="1.2" height="1.2"/><rect x="47.5" y="84.6" width="1.0" height="1.0"/><rect x="48.8" y="92.3" width="0.8" height="0.8"/><rect x="46.9" y="83.2" width="0.8" height="0.8"/><rect x="48.7" y="91.1" width="1.3" height="1.3"/><rect x="55.9" y="87.4" width="0.8" height="0.8"/><rect x="53.3" y="81.1" width="0.9" height="0.9"/><rect x="54.3" y="81.5" width="0.9" height="0.9"/><rect x="58.7" y="81.8" width="1.5" height="1.5"/><rect x="54.1" y="85.9" width="1.5" height="1.5"/><rect x="50.6" y="85.9" width="1.8" height="1.8"/><rect x="45.9" y="78.3" width="0.9" height="0.9"/><rect x="53.8" y="83.5" width="1.7" height="1.7"/><rect x="47.7" y="86.3" width="1.4" height="1.4"/><rect x="56.4" y="83.2" width="0.9" height="0.9"/><rect x="48.5" y="84.4" width="0.9" height="0.9"/><rect x="53.4" y="86.4" width="1.0" height="1.0"/><rect x="50.7" y="88.9" width="1.6" height="1.6"/><rect x="50.9" y="90.7" width="1.0" height="1.0"/><rect x="51.9" y="85.8" width="1.0" height="1.0"/><rect x="61.4" y="85.8" width="1.4" height="1.4"/><rect x="54.8" y="90.3" width="1.8" height="1.8"/><rect x="60.5" y="90.7" width="1.2" height="1.2"/><rect x="42.1" y="85.3" width="1.2" height="1.2"/><rect x="44.1" y="84.7" width="1.8" height="1.8"/><rect x="46.8" y="92.9" width="1.5" height="1.5"/><rect x="48.8" y="81.2" width="1.1" height="1.1"/><rect x="55.2" y="85.9" width="0.9" height="0.9"/><rect x="52.3" y="81.2" width="0.9" height="0.9"/><rect x="61.6" y="89.9" width="1.7" height="1.7"/><rect x="50.4" y="81.4" width="1.0" height="1.0"/><rect x="50.9" y="90.3" width="0.9" height="0.9"/><rect x="48.4" y="86.3" width="1.8" height="1.8"/><rect x="59.3" y="83.9" width="1.0" height="1.0"/><rect x="57.1" y="84.1" width="1.2" height="1.2"/><rect x="57.9" y="85.0" width="1.3" height="1.3"/><rect x="48.8" y="84.9" width="1.3" height="1.3"/><rect x="56.8" y="85.1" width="0.9" height="0.9"/><rect x="51.2" y="85.9" width="0.8" height="0.8"/><rect x="51.2" y="88.4" width="1.4" height="1.4"/><rect x="43.5" y="83.5" width="1.5" height="1.5"/><rect x="48.7" y="87.8" width="1.8" height="1.8"/><rect x="57.7" y="91.5" width="1.4" height="1.4"/><rect x="62.6" y="87.6" width="1.7" height="1.7"/><rect x="46.3" y="79.2" width="1.6" height="1.6"/><rect x="56.8" y="89.7" width="1.3" height="1.3"/><rect x="57.6" y="77.2" width="1.6" height="1.6"/><rect x="49.0" y="78.0" width="1.0" height="1.0"/><rect x="55.4" y="85.5" width="1.2" height="1.2"/><rect x="60.8" y="90.8" width="1.4" height="1.4"/><rect x="47.1" y="80.0" width="1.5" height="1.5"/><rect x="52.1" y="85.0" width="1.6" height="1.6"/><rect x="52.4" y="79.1" width="1.3" height="1.3"/><rect x="51.4" y="83.4" width="1.5" height="1.5"/><rect x="52.5" y="87.0" width="1.1" height="1.1"/><rect x="52.0" y="81.6" width="1.5" height="1.5"/><rect x="58.8" y="84.1" width="1.2" height="1.2"/><rect x="44.2" y="86.0" width="1.6" height="1.6"/><rect x="46.6" y="80.2" width="0.9" height="0.9"/><rect x="55.0" y="88.1" width="1.6" height="1.6"/><rect x="50.1" y="91.1" width="0.8" height="0.8"/><rect x="56.5" y="86.5" width="1.5" height="1.5"/><rect x="49.6" y="78.0" width="1.1" height="1.1"/><rect x="46.4" y="84.4" width="1.3" height="1.3"/><rect x="53.5" y="84.6" width="1.3" height="1.3"/><rect x="48.4" y="86.2" width="1.0" height="1.0"/><rect x="56.1" y="83.8" width="1.4" height="1.4"/><rect x="56.7" y="89.7" width="1.8" height="1.8"/><rect x="59.4" y="91.9" width="1.3" height="1.3"/><rect x="59.0" y="79.9" width="1.0" height="1.0"/><rect x="57.6" y="81.5" width="0.8" height="0.8"/><rect x="58.9" y="85.1" width="1.2" height="1.2"/><rect x="51.5" y="87.6" width="1.1" height="1.1"/><rect x="48.3" y="93.8" width="0.8" height="0.8"/><rect x="52.5" y="75.4" width="0.9" height="0.9"/><rect x="60.3" y="81.5" width="1.7" height="1.7"/><rect x="51.2" y="89.7" width="1.2" height="1.2"/><rect x="59.8" y="84.9" width="1.2" height="1.2"/><rect x="48.5" y="86.8" width="0.8" height="0.8"/><rect x="60.9" y="90.7" width="1.1" height="1.1"/><rect x="56.3" y="83.5" width="1.1" height="1.1"/><rect x="48.9" y="84.8" width="1.2" height="1.2"/><rect x="55.4" y="78.5" width="1.7" height="1.7"/><rect x="59.0" y="82.7" width="1.5" height="1.5"/><rect x="61.0" y="87.5" width="1.2" height="1.2"/><rect x="52.6" y="77.8" width="1.1" height="1.1"/><rect x="56.8" y="89.1" width="1.1" height="1.1"/><rect x="49.8" y="92.8" width="1.8" height="1.8"/><rect x="52.0" y="92.3" width="1.1" height="1.1"/><rect x="47.3" y="83.2" width="1.0" height="1.0"/><rect x="54.5" y="87.9" width="1.7" height="1.7"/><rect x="48.6" y="85.1" width="1.7" height="1.7"/><rect x="58.5" y="84.9" width="0.9" height="0.9"/><rect x="53.3" y="87.0" width="1.1" height="1.1"/><rect x="55.9" y="87.0" width="1.0" height="1.0"/><rect x="52.5" y="79.8" width="1.2" height="1.2"/><rect x="47.2" y="84.3" width="1.1" height="1.1"/><rect x="56.6" y="86.5" width="1.8" height="1.8"/><rect x="57.1" y="89.2" width="1.4" height="1.4"/><rect x="55.0" y="82.4" width="1.1" height="1.1"/><rect x="52.6" y="90.1" width="1.2" height="1.2"/><rect x="62.7" y="82.2" width="1.7" height="1.7"/><rect x="53.9" y="85.2" width="1.5" height="1.5"/><rect x="57.4" y="81.5" width="1.4" height="1.4"/><rect x="58.0" y="85.0" width="1.7" height="1.7"/><rect x="57.4" y="76.3" width="1.8" height="1.8"/><rect x="52.5" y="87.4" width="0.9" height="0.9"/><rect x="44.3" y="83.9" width="1.8" height="1.8"/><rect x="51.1" y="77.9" width="1.6" height="1.6"/><rect x="45.8" y="86.7" width="0.8" height="0.8"/><rect x="53.3" y="81.4" width="1.7" height="1.7"/><rect x="49.6" y="81.6" width="0.9" height="0.9"/><rect x="52.4" y="92.1" width="1.5" height="1.5"/><rect x="54.1" y="86.2" width="1.3" height="1.3"/><rect x="47.8" y="82.5" width="1.0" height="1.0"/><rect x="51.9" y="84.6" width="1.1" height="1.1"/><rect x="48.5" y="85.6" width="1.0" height="1.0"/><rect x="60.8" y="83.1" width="1.1" height="1.1"/><rect x="58.9" y="85.8" width="1.5" height="1.5"/><rect x="48.8" y="86.9" width="1.5" height="1.5"/><rect x="56.0" y="83.4" width="0.8" height="0.8"/><rect x="49.5" y="89.4" width="1.5" height="1.5"/><rect x="55.6" y="93.5" width="1.5" height="1.5"/><rect x="48.8" y="84.9" width="1.8" height="1.8"/><rect x="48.6" y="93.6" width="1.0" height="1.0"/><rect x="54.2" y="93.3" width="1.1" height="1.1"/><rect x="58.6" y="83.3" width="1.0" height="1.0"/><rect x="53.5" y="90.1" width="1.5" height="1.5"/><rect x="55.4" y="84.1" width="1.2" height="1.2"/><rect x="53.6" y="86.3" width="0.8" height="0.8"/><rect x="59.1" y="79.6" width="1.8" height="1.8"/><rect x="57.0" y="83.1" width="1.0" height="1.0"/><rect x="60.9" y="81.8" width="0.8" height="0.8"/><rect x="49.8" y="80.8" width="1.2" height="1.2"/><rect x="50.9" y="87.7" width="0.8" height="0.8"/><rect x="51.5" y="89.6" width="1.8" height="1.8"/><rect x="53.9" y="89.5" width="1.6" height="1.6"/><rect x="55.1" y="80.2" width="0.8" height="0.8"/><rect x="47.3" y="85.8" width="1.7" height="1.7"/><rect x="54.3" y="89.5" width="1.7" height="1.7"/><rect x="58.1" y="86.0" width="1.6" height="1.6"/><rect x="52.7" y="83.6" width="0.8" height="0.8"/><rect x="52.1" y="93.3" width="1.7" height="1.7"/><rect x="50.2" y="88.4" width="1.8" height="1.8"/><rect x="49.3" y="82.4" width="1.5" height="1.5"/><rect x="50.7" y="88.7" width="0.8" height="0.8"/><rect x="56.5" y="85.6" width="1.3" height="1.3"/><rect x="49.3" y="87.5" width="1.2" height="1.2"/><rect x="56.6" y="93.2" width="1.5" height="1.5"/><rect x="56.7" y="77.3" width="1.4" height="1.4"/><rect x="50.2" y="88.9" width="1.2" height="1.2"/><rect x="52.9" y="83.0" width="1.0" height="1.0"/><rect x="52.6" y="81.2" width="0.8" height="0.8"/><rect x="59.3" y="86.3" width="1.1" height="1.1"/><rect x="56.8" y="84.7" width="0.9" height="0.9"/><rect x="57.8" y="88.3" width="1.5" height="1.5"/><rect x="48.7" y="86.2" width="1.2" height="1.2"/><rect x="46.5" y="79.9" width="1.6" height="1.6"/><rect x="57.2" y="78.9" width="0.9" height="0.9"/><rect x="55.0" y="81.5" width="1.4" height="1.4"/><rect x="46.2" y="90.9" width="1.0" height="1.0"/><rect x="52.6" y="88.8" width="0.9" height="0.9"/><rect x="57.9" y="80.6" width="1.1" height="1.1"/><rect x="48.5" y="84.8" width="1.6" height="1.6"/><rect x="57.5" y="88.4" width="1.6" height="1.6"/><rect x="56.9" y="86.0" width="0.9" height="0.9"/><rect x="48.4" y="86.2" width="1.6" height="1.6"/><rect x="55.0" y="84.2" width="1.4" height="1.4"/><rect x="49.7" y="82.6" width="1.2" height="1.2"/><rect x="54.8" y="87.6" width="1.0" height="1.0"/><rect x="46.0" y="80.8" width="1.0" height="1.0"/><rect x="57.4" y="85.3" width="1.5" height="1.5"/><rect x="54.4" y="89.0" width="1.0" height="1.0"/><rect x="54.4" y="79.0" width="0.8" height="0.8"/><rect x="56.9" y="88.0" width="1.4" height="1.4"/><rect x="51.0" y="83.3" width="1.0" height="1.0"/><rect x="50.6" y="80.2" width="1.1" height="1.1"/><rect x="49.8" y="91.0" width="1.2" height="1.2"/><rect x="43.0" y="90.0" width="1.8" height="1.8"/><rect x="50.1" y="87.5" width="1.5" height="1.5"/><rect x="52.7" y="85.5" width="1.7" height="1.7"/><rect x="43.5" y="89.3" width="1.2" height="1.2"/><rect x="57.0" y="81.3" width="0.9" height="0.9"/><rect x="59.4" y="85.6" width="1.4" height="1.4"/><rect x="54.5" y="83.8" width="1.4" height="1.4"/><rect x="48.0" y="89.3" width="0.9" height="0.9"/><rect x="51.1" y="90.9" width="1.7" height="1.7"/><rect x="57.5" y="88.7" width="1.6" height="1.6"/><rect x="56.1" y="84.3" width="0.9" height="0.9"/><rect x="50.7" y="85.2" width="1.7" height="1.7"/><rect x="45.0" y="78.6" width="0.9" height="0.9"/><rect x="53.4" y="81.5" width="1.2" height="1.2"/><rect x="58.4" y="77.3" width="1.0" height="1.0"/><rect x="53.6" y="90.0" width="1.3" height="1.3"/><rect x="50.4" y="86.7" width="1.0" height="1.0"/><rect x="59.3" y="86.6" width="1.6" height="1.6"/><rect x="62.7" y="87.3" width="0.9" height="0.9"/><rect x="46.9" y="81.3" width="1.4" height="1.4"/><rect x="50.5" y="89.9" width="1.4" height="1.4"/><rect x="45.3" y="88.3" width="1.2" height="1.2"/><rect x="51.4" y="85.4" width="1.4" height="1.4"/><rect x="48.5" y="85.2" width="1.6" height="1.6"/><rect x="53.6" y="79.6" width="1.0" height="1.0"/><rect x="49.9" y="85.4" width="0.9" height="0.9"/><rect x="50.3" y="85.9" width="1.2" height="1.2"/><rect x="50.9" y="84.9" width="1.4" height="1.4"/><rect x="60.3" y="89.0" width="1.6" height="1.6"/><rect x="50.7" y="84.9" width="1.3" height="1.3"/><rect x="59.6" y="92.4" width="1.8" height="1.8"/><rect x="51.4" y="75.9" width="1.0" height="1.0"/><rect x="58.9" y="84.3" width="1.8" height="1.8"/><rect x="55.4" y="83.5" width="1.6" height="1.6"/><rect x="54.3" y="84.2" width="1.1" height="1.1"/><rect x="52.6" y="82.1" width="1.7" height="1.7"/><rect x="50.9" y="94.1" width="0.9" height="0.9"/><rect x="53.6" y="88.8" width="1.3" height="1.3"/><rect x="51.9" y="86.2" width="1.0" height="1.0"/><rect x="57.2" y="92.6" width="0.9" height="0.9"/><rect x="44.8" y="83.6" width="1.2" height="1.2"/><rect x="57.4" y="80.4" width="1.4" height="1.4"/><rect x="54.4" y="83.4" width="1.8" height="1.8"/><rect x="48.7" y="81.4" width="1.6" height="1.6"/><rect x="47.9" y="82.8" width="1.6" height="1.6"/><rect x="49.3" y="86.1" width="1.6" height="1.6"/><rect x="62.2" y="87.8" width="1.0" height="1.0"/><rect x="45.5" y="81.2" width="1.1" height="1.1"/><rect x="53.9" y="85.0" width="0.9" height="0.9"/><rect x="48.1" y="81.5" width="1.3" height="1.3"/><rect x="54.8" y="83.4" width="1.0" height="1.0"/><rect x="51.8" y="84.1" width="0.8" height="0.8"/><rect x="50.9" y="86.9" width="1.2" height="1.2"/><rect x="53.7" y="91.5" width="1.4" height="1.4"/><rect x="54.7" y="91.7" width="1.3" height="1.3"/><rect x="52.6" y="87.8" width="0.9" height="0.9"/><rect x="53.6" y="80.0" width="1.1" height="1.1"/><rect x="60.4" y="85.5" width="1.4" height="1.4"/><rect x="47.8" y="90.8" width="1.2" height="1.2"/><rect x="60.8" y="81.9" width="1.0" height="1.0"/><rect x="53.9" y="84.1" width="1.3" height="1.3"/><rect x="49.1" y="87.1" width="0.8" height="0.8"/><rect x="52.7" y="84.2" width="1.4" height="1.4"/><rect x="55.3" y="84.0" width="1.0" height="1.0"/><rect x="47.4" y="81.3" width="1.4" height="1.4"/><rect x="53.8" y="82.1" width="1.1" height="1.1"/><rect x="52.0" y="86.5" width="1.7" height="1.7"/><rect x="54.3" y="77.2" width="0.8" height="0.8"/><rect x="57.6" y="78.1" width="1.3" height="1.3"/><rect x="52.2" y="79.5" width="1.0" height="1.0"/><rect x="55.7" y="87.2" width="0.8" height="0.8"/><rect x="47.8" y="92.1" width="1.5" height="1.5"/><rect x="57.4" y="78.5" width="1.1" height="1.1"/><rect x="46.9" y="83.2" width="1.6" height="1.6"/><rect x="48.2" y="84.4" width="1.4" height="1.4"/><rect x="56.3" y="84.2" width="1.7" height="1.7"/><rect x="56.8" y="85.4" width="1.0" height="1.0"/><rect x="52.4" y="80.6" width="1.7" height="1.7"/><rect x="50.6" y="88.3" width="1.7" height="1.7"/><rect x="46.7" y="79.4" width="1.5" height="1.5"/><rect x="58.6" y="84.3" width="1.7" height="1.7"/><rect x="49.0" y="75.7" width="1.2" height="1.2"/><rect x="51.4" y="78.6" width="1.1" height="1.1"/><rect x="54.3" y="91.8" width="0.9" height="0.9"/><rect x="55.1" y="83.5" width="0.8" height="0.8"/><rect x="50.8" y="87.3" width="0.8" height="0.8"/><rect x="60.7" y="87.0" width="1.4" height="1.4"/><rect x="49.6" y="77.3" width="0.8" height="0.8"/><rect x="48.1" y="82.4" width="1.6" height="1.6"/></g><g fill="#000" opacity="1.0"><rect x="87.9" y="88.5" width="0.9" height="0.9"/><rect x="95.4" y="88.5" width="1.6" height="1.6"/><rect x="78.2" y="82.1" width="1.4" height="1.4"/><rect x="84.4" y="88.6" width="0.9" height="0.9"/><rect x="85.2" y="84.6" width="1.1" height="1.1"/><rect x="84.0" y="87.3" width="1.0" height="1.0"/><rect x="83.2" y="92.4" width="1.2" height="1.2"/><rect x="74.3" y="86.8" width="1.4" height="1.4"/><rect x="90.6" y="87.7" width="1.2" height="1.2"/><rect x="85.7" y="83.8" width="1.5" height="1.5"/><rect x="81.3" y="86.4" width="1.7" height="1.7"/><rect x="93.6" y="90.5" width="1.0" height="1.0"/><rect x="88.7" y="87.0" width="1.6" height="1.6"/><rect x="85.5" y="87.0" width="1.3" height="1.3"/><rect x="75.2" y="87.3" width="1.0" height="1.0"/><rect x="79.9" y="87.1" width="1.6" height="1.6"/><rect x="84.2" y="89.4" width="1.5" height="1.5"/><rect x="82.3" y="87.0" width="1.4" height="1.4"/><rect x="93.5" y="90.0" width="1.5" height="1.5"/><rect x="86.8" y="82.2" width="1.1" height="1.1"/><rect x="80.5" y="89.0" width="1.7" height="1.7"/><rect x="88.7" y="87.4" width="1.1" height="1.1"/><rect x="90.3" y="84.6" width="1.2" height="1.2"/><rect x="88.0" y="85.3" width="1.3" height="1.3"/><rect x="76.0" y="85.8" width="1.6" height="1.6"/><rect x="81.9" y="84.4" width="1.1" height="1.1"/><rect x="90.9" y="92.6" width="1.5" height="1.5"/><rect x="84.8" y="84.9" width="1.2" height="1.2"/><rect x="86.1" y="82.4" width="0.9" height="0.9"/><rect x="85.3" y="89.3" width="1.1" height="1.1"/><rect x="81.9" y="80.5" width="0.9" height="0.9"/><rect x="87.3" y="89.2" width="1.1" height="1.1"/><rect x="81.8" y="86.7" width="1.1" height="1.1"/><rect x="84.7" y="85.4" width="1.8" height="1.8"/><rect x="89.3" y="89.1" width="1.8" height="1.8"/><rect x="87.5" y="81.5" width="1.2" height="1.2"/><rect x="87.6" y="91.7" width="0.9" height="0.9"/><rect x="86.5" y="90.3" width="0.8" height="0.8"/><rect x="77.2" y="90.7" width="1.5" height="1.5"/><rect x="77.2" y="87.0" width="1.3" height="1.3"/><rect x="89.7" y="90.7" width="1.2" height="1.2"/><rect x="78.5" y="88.9" width="1.6" height="1.6"/><rect x="81.5" y="88.2" width="1.5" height="1.5"/><rect x="91.9" y="82.9" width="1.5" height="1.5"/><rect x="90.0" y="82.8" width="1.4" height="1.4"/><rect x="80.4" y="87.9" width="1.4" height="1.4"/><rect x="89.7" y="89.1" width="1.6" height="1.6"/><rect x="83.2" y="82.2" width="1.0" height="1.0"/><rect x="79.6" y="88.8" width="1.4" height="1.4"/><rect x="78.1" y="89.8" width="1.7" height="1.7"/><rect x="88.3" y="91.7" width="1.6" height="1.6"/><rect x="80.1" y="89.6" width="1.8" height="1.8"/><rect x="91.7" y="88.0" width="0.9" height="0.9"/><rect x="82.5" y="86.8" width="1.4" height="1.4"/><rect x="76.5" y="85.6" width="1.3" height="1.3"/><rect x="78.4" y="82.0" width="1.3" height="1.3"/><rect x="87.1" y="92.1" width="1.2" height="1.2"/><rect x="85.2" y="85.2" width="1.8" height="1.8"/><rect x="83.8" y="87.9" width="1.1" height="1.1"/><rect x="84.3" y="87.3" width="1.2" height="1.2"/><rect x="77.5" y="89.6" width="1.1" height="1.1"/><rect x="84.6" y="89.5" width="1.6" height="1.6"/><rect x="91.3" y="85.4" width="1.0" height="1.0"/><rect x="86.7" y="83.7" width="1.0" height="1.0"/><rect x="91.5" y="91.4" width="1.6" height="1.6"/><rect x="80.9" y="84.1" width="1.4" height="1.4"/><rect x="80.3" y="91.0" width="1.6" height="1.6"/><rect x="87.5" y="83.4" width="1.1" height="1.1"/><rect x="82.3" y="86.5" width="1.6" height="1.6"/><rect x="78.4" y="92.4" width="1.1" height="1.1"/><rect x="82.0" y="88.9" width="1.2" height="1.2"/><rect x="85.2" y="87.2" width="1.5" height="1.5"/><rect x="84.2" y="89.6" width="1.1" height="1.1"/><rect x="79.2" y="87.5" width="1.4" height="1.4"/><rect x="82.2" y="84.2" width="1.7" height="1.7"/><rect x="86.2" y="86.0" width="1.6" height="1.6"/><rect x="93.0" y="83.6" width="0.9" height="0.9"/><rect x="88.8" y="82.7" width="0.8" height="0.8"/><rect x="82.7" y="84.8" width="0.9" height="0.9"/><rect x="87.5" y="89.0" width="1.6" height="1.6"/><rect x="83.2" y="88.7" width="1.7" height="1.7"/><rect x="85.9" y="85.0" width="1.7" height="1.7"/><rect x="77.5" y="83.2" width="1.5" height="1.5"/><rect x="92.6" y="83.2" width="1.7" height="1.7"/><rect x="87.7" y="92.1" width="1.3" height="1.3"/><rect x="84.7" y="83.2" width="1.7" height="1.7"/><rect x="80.9" y="86.1" width="1.0" height="1.0"/><rect x="89.1" y="90.1" width="0.8" height="0.8"/><rect x="82.0" y="87.4" width="1.3" height="1.3"/><rect x="78.2" y="87.0" width="1.7" height="1.7"/><rect x="95.5" y="87.3" width="1.3" height="1.3"/><rect x="77.5" y="85.0" width="1.7" height="1.7"/><rect x="80.9" y="89.6" width="1.8" height="1.8"/><rect x="92.0" y="89.3" width="1.4" height="1.4"/><rect x="92.4" y="87.9" width="1.5" height="1.5"/><rect x="89.5" y="85.7" width="1.8" height="1.8"/><rect x="78.7" y="86.7" width="1.7" height="1.7"/><rect x="93.6" y="88.2" width="1.4" height="1.4"/><rect x="79.2" y="92.9" width="1.2" height="1.2"/><rect x="78.4" y="87.7" width="1.6" height="1.6"/><rect x="86.4" y="90.6" width="1.2" height="1.2"/><rect x="75.3" y="84.8" width="1.1" height="1.1"/><rect x="87.6" y="83.9" width="1.3" height="1.3"/><rect x="84.1" y="91.1" width="1.8" height="1.8"/><rect x="79.5" y="81.9" width="1.1" height="1.1"/><rect x="83.1" y="89.7" width="1.4" height="1.4"/><rect x="78.6" y="82.4" width="0.8" height="0.8"/><rect x="83.3" y="86.7" width="1.1" height="1.1"/><rect x="88.6" y="87.1" width="1.7" height="1.7"/><rect x="78.7" y="83.8" width="1.6" height="1.6"/><rect x="91.4" y="84.4" width="1.4" height="1.4"/><rect x="79.1" y="83.1" width="1.4" height="1.4"/><rect x="83.4" y="84.8" width="1.5" height="1.5"/><rect x="76.0" y="88.6" width="0.9" height="0.9"/><rect x="85.6" y="87.9" width="1.6" height="1.6"/><rect x="91.9" y="84.4" width="1.2" height="1.2"/><rect x="89.3" y="81.5" width="1.4" height="1.4"/><rect x="84.8" y="90.0" width="1.2" height="1.2"/><rect x="82.6" y="90.4" width="1.4" height="1.4"/><rect x="86.7" y="86.5" width="1.4" height="1.4"/><rect x="87.7" y="87.4" width="1.6" height="1.6"/><rect x="84.1" y="87.2" width="1.2" height="1.2"/><rect x="91.2" y="86.5" width="1.2" height="1.2"/><rect x="91.3" y="90.0" width="1.0" height="1.0"/><rect x="85.6" y="87.5" width="0.8" height="0.8"/><rect x="83.9" y="85.4" width="1.8" height="1.8"/><rect x="85.7" y="87.5" width="1.5" height="1.5"/><rect x="85.4" y="92.7" width="1.0" height="1.0"/><rect x="94.0" y="88.9" width="1.5" height="1.5"/><rect x="90.5" y="82.5" width="0.9" height="0.9"/><rect x="79.0" y="83.0" width="1.3" height="1.3"/><rect x="88.8" y="85.9" width="1.8" height="1.8"/><rect x="84.8" y="86.5" width="0.8" height="0.8"/><rect x="79.1" y="81.8" width="0.9" height="0.9"/><rect x="81.7" y="92.2" width="1.0" height="1.0"/><rect x="89.1" y="83.9" width="0.8" height="0.8"/><rect x="80.2" y="90.4" width="1.2" height="1.2"/><rect x="83.6" y="85.2" width="1.6" height="1.6"/><rect x="79.8" y="90.8" width="1.4" height="1.4"/><rect x="80.3" y="88.7" width="1.6" height="1.6"/><rect x="94.1" y="84.9" width="1.4" height="1.4"/><rect x="84.5" y="88.2" width="1.8" height="1.8"/><rect x="82.0" y="80.7" width="1.1" height="1.1"/><rect x="88.6" y="82.9" width="1.1" height="1.1"/></g><g fill="#000" opacity="1.0"><rect x="116.2" y="91.4" width="1.2" height="1.2"/><rect x="125.0" y="78.4" width="0.9" height="0.9"/><rect x="122.7" y="85.0" width="1.0" height="1.0"/><rect x="114.5" y="79.3" width="1.4" height="1.4"/><rect x="126.4" y="88.0" width="1.4" height="1.4"/><rect x="123.1" y="79.2" width="0.9" height="0.9"/><rect x="123.8" y="76.2" width="1.3" height="1.3"/><rect x="122.8" y="82.1" width="0.7" height="0.7"/><rect x="114.1" y="81.5" width="0.8" height="0.8"/><rect x="120.5" y="93.2" width="1.3" height="1.3"/><rect x="117.7" y="85.9" width="0.9" height="0.9"/><rect x="120.0" y="74.4" width="1.1" height="1.1"/><rect x="125.4" y="90.7" width="1.3" height="1.3"/><rect x="120.5" y="92.9" width="1.4" height="1.4"/><rect x="123.2" y="80.2" width="1.1" height="1.1"/><rect x="118.1" y="82.9" width="0.8" height="0.8"/><rect x="122.3" y="93.5" width="1.0" height="1.0"/><rect x="116.7" y="82.6" width="1.1" height="1.1"/><rect x="120.6" y="86.5" width="1.5" height="1.5"/><rect x="118.8" y="87.0" width="1.2" height="1.2"/><rect x="120.5" y="81.6" width="1.2" height="1.2"/><rect x="117.6" y="91.0" width="0.7" height="0.7"/><rect x="122.7" y="79.8" width="1.2" height="1.2"/><rect x="119.6" y="95.4" width="1.0" height="1.0"/><rect x="125.6" y="81.6" width="1.4" height="1.4"/><rect x="122.6" y="84.0" width="0.7" height="0.7"/><rect x="120.7" y="88.6" width="0.7" height="0.7"/><rect x="124.2" y="87.4" width="1.4" height="1.4"/><rect x="121.1" y="83.8" width="1.2" height="1.2"/><rect x="118.6" y="86.8" width="1.5" height="1.5"/><rect x="119.8" y="92.7" width="1.2" height="1.2"/><rect x="125.0" y="82.6" width="1.0" height="1.0"/><rect x="118.0" y="86.1" width="1.5" height="1.5"/><rect x="122.5" y="84.8" width="0.7" height="0.7"/><rect x="119.9" y="90.6" width="1.5" height="1.5"/><rect x="125.5" y="78.5" width="0.7" height="0.7"/><rect x="121.2" y="75.8" width="1.2" height="1.2"/><rect x="121.2" y="84.8" width="0.8" height="0.8"/><rect x="118.7" y="80.5" width="1.2" height="1.2"/><rect x="120.1" y="82.2" width="0.9" height="0.9"/><rect x="119.9" y="88.1" width="1.1" height="1.1"/><rect x="121.3" y="88.9" width="0.8" height="0.8"/><rect x="119.8" y="84.1" width="1.3" height="1.3"/><rect x="120.3" y="86.5" width="1.5" height="1.5"/><rect x="122.4" y="90.0" width="0.7" height="0.7"/><rect x="126.1" y="80.0" width="1.2" height="1.2"/><rect x="117.0" y="86.6" width="1.4" height="1.4"/><rect x="115.1" y="86.2" width="0.8" height="0.8"/><rect x="120.2" y="87.0" width="1.3" height="1.3"/><rect x="118.2" y="83.9" width="1.4" height="1.4"/><rect x="119.6" y="91.1" width="0.8" height="0.8"/><rect x="119.1" y="96.4" width="1.0" height="1.0"/><rect x="122.0" y="91.1" width="0.9" height="0.9"/><rect x="121.4" y="83.3" width="1.5" height="1.5"/><rect x="118.8" y="81.4" width="1.1" height="1.1"/><rect x="119.4" y="89.5" width="0.8" height="0.8"/><rect x="122.4" y="87.9" width="1.4" height="1.4"/><rect x="125.3" y="88.4" width="0.9" height="0.9"/><rect x="120.6" y="84.9" width="1.4" height="1.4"/><rect x="119.0" y="87.8" width="0.7" height="0.7"/><rect x="122.1" y="78.6" width="0.8" height="0.8"/><rect x="120.9" y="92.7" width="0.8" height="0.8"/><rect x="122.6" y="94.3" width="1.3" height="1.3"/><rect x="120.5" y="87.3" width="0.7" height="0.7"/><rect x="116.8" y="80.6" width="0.9" height="0.9"/><rect x="121.3" y="92.9" width="1.3" height="1.3"/><rect x="121.7" y="77.7" width="0.8" height="0.8"/><rect x="125.2" y="88.9" width="1.0" height="1.0"/><rect x="119.8" y="83.0" width="1.4" height="1.4"/><rect x="116.6" y="94.9" width="1.4" height="1.4"/><rect x="119.4" y="85.0" width="1.5" height="1.5"/><rect x="119.8" y="88.8" width="1.4" height="1.4"/><rect x="118.6" y="87.7" width="1.0" height="1.0"/><rect x="119.7" y="84.7" width="1.1" height="1.1"/><rect x="116.0" y="87.4" width="0.8" height="0.8"/><rect x="118.6" y="74.2" width="1.4" height="1.4"/><rect x="117.6" y="93.5" width="1.0" height="1.0"/><rect x="120.0" y="82.9" width="1.4" height="1.4"/><rect x="123.9" y="83.0" width="1.1" height="1.1"/><rect x="115.7" y="83.6" width="0.7" height="0.7"/><rect x="122.4" y="84.1" width="0.8" height="0.8"/><rect x="122.1" y="87.7" width="1.4" height="1.4"/><rect x="121.5" y="85.5" width="1.3" height="1.3"/><rect x="120.2" y="86.1" width="1.2" height="1.2"/><rect x="116.2" y="81.6" width="1.3" height="1.3"/><rect x="119.8" y="83.2" width="0.8" height="0.8"/><rect x="115.9" y="85.3" width="0.9" height="0.9"/><rect x="122.6" y="89.2" width="0.8" height="0.8"/><rect x="114.2" y="78.5" width="0.8" height="0.8"/><rect x="114.8" y="80.6" width="0.8" height="0.8"/><rect x="117.2" y="89.0" width="1.4" height="1.4"/><rect x="116.5" y="84.0" width="1.5" height="1.5"/><rect x="120.5" y="79.6" width="0.9" height="0.9"/><rect x="118.1" y="90.5" width="1.5" height="1.5"/><rect x="122.7" y="74.3" width="0.7" height="0.7"/><rect x="122.4" y="83.2" width="1.0" height="1.0"/><rect x="117.8" y="80.8" width="1.1" height="1.1"/><rect x="123.4" y="87.7" width="1.1" height="1.1"/><rect x="121.9" y="85.4" width="1.5" height="1.5"/><rect x="115.7" y="76.9" width="1.4" height="1.4"/><rect x="120.7" y="83.9" width="1.2" height="1.2"/><rect x="119.5" y="94.0" width="0.9" height="0.9"/><rect x="118.1" y="81.9" width="1.1" height="1.1"/><rect x="119.3" y="90.0" width="1.2" height="1.2"/><rect x="123.4" y="90.5" width="1.5" height="1.5"/><rect x="117.2" y="84.6" width="1.1" height="1.1"/><rect x="118.1" y="84.3" width="0.8" height="0.8"/><rect x="122.0" y="88.7" width="1.0" height="1.0"/><rect x="119.4" y="89.4" width="0.7" height="0.7"/><rect x="113.6" y="81.7" width="1.2" height="1.2"/><rect x="115.4" y="81.3" width="0.8" height="0.8"/><rect x="119.0" y="78.5" width="1.1" height="1.1"/><rect x="117.0" y="80.6" width="0.9" height="0.9"/><rect x="120.1" y="89.2" width="1.1" height="1.1"/><rect x="116.6" y="90.3" width="0.7" height="0.7"/><rect x="115.8" y="94.5" width="0.9" height="0.9"/><rect x="116.2" y="82.6" width="0.9" height="0.9"/><rect x="122.9" y="84.6" width="1.3" height="1.3"/><rect x="120.7" y="86.9" width="1.4" height="1.4"/><rect x="118.8" y="85.8" width="1.0" height="1.0"/><rect x="114.7" y="88.6" width="0.8" height="0.8"/><rect x="119.9" y="81.5" width="1.0" height="1.0"/><rect x="116.8" y="92.2" width="1.2" height="1.2"/><rect x="123.8" y="76.0" width="1.1" height="1.1"/><rect x="119.6" y="75.1" width="1.3" height="1.3"/><rect x="113.9" y="86.6" width="1.3" height="1.3"/><rect x="121.6" y="83.4" width="1.4" height="1.4"/><rect x="126.0" y="85.3" width="1.2" height="1.2"/><rect x="116.7" y="82.3" width="1.3" height="1.3"/><rect x="123.3" y="79.1" width="1.0" height="1.0"/><rect x="116.3" y="87.0" width="1.3" height="1.3"/><rect x="119.1" y="90.8" width="1.1" height="1.1"/><rect x="117.7" y="88.5" width="1.4" height="1.4"/><rect x="122.4" y="79.3" width="1.1" height="1.1"/><rect x="121.2" y="89.7" width="0.8" height="0.8"/><rect x="115.9" y="81.4" width="0.7" height="0.7"/><rect x="122.7" y="82.4" width="1.4" height="1.4"/><rect x="121.0" y="91.1" width="1.5" height="1.5"/><rect x="121.1" y="85.1" width="1.2" height="1.2"/><rect x="120.6" y="77.6" width="1.5" height="1.5"/><rect x="115.8" y="84.2" width="1.3" height="1.3"/><rect x="117.5" y="88.6" width="1.2" height="1.2"/><rect x="118.1" y="78.4" width="0.7" height="0.7"/><rect x="117.5" y="89.3" width="1.2" height="1.2"/><rect x="123.9" y="83.5" width="1.0" height="1.0"/></g><circle cx="153" cy="84.5" r="10" fill="url(#sp)" opacity="0.7"/><g fill="#333" opacity="1.0"><rect x="149.3" y="90.1" width="1.3" height="1.3"/><rect x="155.3" y="88.7" width="1.4" height="1.4"/><rect x="156.0" y="78.6" width="0.7" height="0.7"/><rect x="159.6" y="79.3" width="1.3" height="1.3"/><rect x="150.2" y="86.0" width="0.8" height="0.8"/><rect x="146.5" y="84.0" width="0.8" height="0.8"/><rect x="156.2" y="91.6" width="1.1" height="1.1"/><rect x="151.9" y="83.3" width="0.9" height="0.9"/><rect x="154.1" y="79.9" width="1.2" height="1.2"/><rect x="157.7" y="84.6" width="1.3" height="1.3"/><rect x="146.0" y="80.3" width="0.8" height="0.8"/><rect x="146.0" y="84.6" width="0.8" height="0.8"/><rect x="148.9" y="79.1" width="1.4" height="1.4"/><rect x="147.9" y="81.9" width="0.7" height="0.7"/><rect x="158.1" y="92.2" width="0.7" height="0.7"/><rect x="155.7" y="86.5" width="1.0" height="1.0"/><rect x="156.4" y="77.7" width="1.2" height="1.2"/><rect x="153.8" y="84.8" width="1.2" height="1.2"/><rect x="149.1" y="92.3" width="0.9" height="0.9"/><rect x="155.1" y="88.3" width="0.7" height="0.7"/><rect x="159.0" y="80.4" width="0.9" height="0.9"/><rect x="147.8" y="86.2" width="0.6" height="0.6"/><rect x="158.6" y="79.9" width="1.4" height="1.4"/><rect x="145.9" y="87.3" width="0.8" height="0.8"/><rect x="155.9" y="80.7" width="1.3" height="1.3"/><rect x="154.9" y="80.2" width="1.1" height="1.1"/><rect x="159.2" y="82.9" width="1.4" height="1.4"/><rect x="153.2" y="90.0" width="1.2" height="1.2"/><rect x="153.8" y="89.2" width="1.3" height="1.3"/><rect x="143.3" y="85.5" width="0.8" height="0.8"/><rect x="155.4" y="89.1" width="0.7" height="0.7"/><rect x="157.5" y="83.7" width="1.0" height="1.0"/><rect x="158.1" y="89.0" width="0.9" height="0.9"/><rect x="151.3" y="85.7" width="0.7" height="0.7"/><rect x="155.3" y="80.0" width="0.8" height="0.8"/><rect x="154.6" y="88.7" width="0.8" height="0.8"/><rect x="160.9" y="86.3" width="0.9" height="0.9"/><rect x="157.8" y="91.6" width="0.7" height="0.7"/><rect x="151.7" y="94.9" width="0.7" height="0.7"/><rect x="143.2" y="88.1" width="1.2" height="1.2"/><rect x="155.8" y="88.8" width="1.2" height="1.2"/><rect x="149.1" y="84.4" width="1.0" height="1.0"/><rect x="158.9" y="90.8" width="0.8" height="0.8"/><rect x="158.9" y="80.2" width="0.9" height="0.9"/><rect x="153.2" y="92.0" width="0.8" height="0.8"/><rect x="155.0" y="82.5" width="1.0" height="1.0"/><rect x="148.8" y="83.3" width="1.2" height="1.2"/><rect x="147.0" y="89.8" width="1.1" height="1.1"/><rect x="151.0" y="89.6" width="0.7" height="0.7"/><rect x="157.7" y="94.1" width="0.9" height="0.9"/><rect x="151.6" y="82.2" width="1.0" height="1.0"/><rect x="148.8" y="89.5" width="0.8" height="0.8"/><rect x="157.3" y="86.4" width="0.8" height="0.8"/><rect x="159.1" y="90.7" width="0.8" height="0.8"/><rect x="154.9" y="82.3" width="0.8" height="0.8"/><rect x="161.2" y="86.0" width="1.1" height="1.1"/><rect x="149.6" y="89.1" width="1.1" height="1.1"/><rect x="151.7" y="80.6" width="1.3" height="1.3"/><rect x="148.4" y="90.7" width="0.7" height="0.7"/><rect x="152.1" y="75.9" width="0.6" height="0.6"/><rect x="156.2" y="85.3" width="0.8" height="0.8"/><rect x="151.2" y="89.6" width="0.6" height="0.6"/><rect x="150.1" y="91.8" width="0.7" height="0.7"/><rect x="156.8" y="78.5" width="1.2" height="1.2"/><rect x="152.8" y="90.4" width="1.1" height="1.1"/><rect x="152.9" y="84.7" width="1.3" height="1.3"/><rect x="153.7" y="80.0" width="0.6" height="0.6"/><rect x="157.6" y="78.5" width="0.6" height="0.6"/><rect x="153.1" y="87.2" width="1.2" height="1.2"/><rect x="153.0" y="82.2" width="1.2" height="1.2"/><rect x="145.8" y="90.2" width="1.3" height="1.3"/><rect x="152.5" y="86.8" width="1.4" height="1.4"/><rect x="149.8" y="76.1" width="1.3" height="1.3"/><rect x="148.8" y="80.1" width="0.6" height="0.6"/><rect x="151.1" y="79.0" width="1.0" height="1.0"/><rect x="155.6" y="83.2" width="1.2" height="1.2"/><rect x="161.2" y="86.8" width="1.2" height="1.2"/><rect x="152.5" y="91.4" width="1.4" height="1.4"/><rect x="148.5" y="79.3" width="0.8" height="0.8"/><rect x="157.8" y="86.4" width="0.9" height="0.9"/><rect x="154.4" y="89.0" width="0.7" height="0.7"/><rect x="150.8" y="76.6" width="0.8" height="0.8"/><rect x="153.3" y="91.1" width="1.0" height="1.0"/><rect x="157.7" y="82.5" width="0.8" height="0.8"/><rect x="155.3" y="82.5" width="1.1" height="1.1"/><rect x="147.9" y="93.2" width="1.0" height="1.0"/><rect x="153.2" y="81.2" width="1.1" height="1.1"/><rect x="148.0" y="80.9" width="1.2" height="1.2"/><rect x="154.3" y="82.1" width="0.8" height="0.8"/><rect x="150.6" y="87.4" width="0.6" height="0.6"/><rect x="152.3" y="88.1" width="1.2" height="1.2"/><rect x="150.4" y="85.4" width="0.9" height="0.9"/><rect x="147.9" y="85.5" width="0.7" height="0.7"/><rect x="153.7" y="84.9" width="1.4" height="1.4"/><rect x="153.0" y="82.2" width="1.2" height="1.2"/><rect x="160.0" y="83.6" width="0.7" height="0.7"/><rect x="147.1" y="84.9" width="0.8" height="0.8"/><rect x="152.3" y="84.3" width="1.3" height="1.3"/><rect x="148.2" y="78.4" width="1.3" height="1.3"/><rect x="150.6" y="81.1" width="0.8" height="0.8"/><rect x="153.8" y="85.5" width="1.2" height="1.2"/><rect x="155.5" y="80.6" width="0.7" height="0.7"/><rect x="146.1" y="76.4" width="1.3" height="1.3"/><rect x="157.7" y="92.9" width="1.3" height="1.3"/><rect x="152.8" y="79.6" width="0.7" height="0.7"/><rect x="155.2" y="80.2" width="0.9" height="0.9"/><rect x="148.0" y="82.8" width="1.3" height="1.3"/><rect x="153.1" y="86.1" width="1.1" height="1.1"/><rect x="145.9" y="77.2" width="1.2" height="1.2"/></g><g fill="#000" opacity="1.0"><rect x="9.4" y="119.3" width="1.0" height="1.0"/><rect x="14.4" y="127.2" width="0.9" height="0.9"/><rect x="15.5" y="115.4" width="1.3" height="1.3"/><rect x="19.8" y="118.5" width="0.9" height="0.9"/><rect x="13.1" y="120.6" width="1.6" height="1.6"/><rect x="29.5" y="119.2" width="1.8" height="1.8"/><rect x="18.6" y="112.3" width="1.2" height="1.2"/><rect x="12.9" y="112.4" width="1.3" height="1.3"/><rect x="13.3" y="124.9" width="1.6" height="1.6"/><rect x="19.8" y="123.7" width="1.3" height="1.3"/><rect x="11.5" y="116.7" width="1.1" height="1.1"/><rect x="21.9" y="121.9" width="1.4" height="1.4"/><rect x="25.8" y="116.9" width="1.7" height="1.7"/><rect x="26.1" y="122.6" width="1.5" height="1.5"/><rect x="14.5" y="127.1" width="1.9" height="1.9"/><rect x="7.7" y="120.1" width="1.2" height="1.2"/><rect x="21.1" y="119.7" width="1.6" height="1.6"/><rect x="14.4" y="119.9" width="1.6" height="1.6"/><rect x="11.1" y="125.2" width="1.3" height="1.3"/><rect x="8.8" y="117.4" width="1.3" height="1.3"/><rect x="20.1" y="121.7" width="1.8" height="1.8"/><rect x="14.0" y="118.1" width="1.8" height="1.8"/><rect x="16.9" y="121.9" width="1.4" height="1.4"/><rect x="16.9" y="126.5" width="1.5" height="1.5"/><rect x="18.2" y="127.4" width="1.0" height="1.0"/><rect x="8.4" y="118.3" width="0.9" height="0.9"/><rect x="14.9" y="120.4" width="1.3" height="1.3"/><rect x="22.4" y="112.8" width="1.6" height="1.6"/><rect x="17.1" y="115.8" width="1.9" height="1.9"/><rect x="16.5" y="116.0" width="1.8" height="1.8"/><rect x="13.9" y="121.5" width="1.9" height="1.9"/><rect x="6.6" y="114.7" width="1.0" height="1.0"/><rect x="17.4" y="116.8" width="1.1" height="1.1"/><rect x="16.2" y="119.8" width="1.5" height="1.5"/><rect x="18.3" y="124.3" width="1.6" height="1.6"/><rect x="19.7" y="116.1" width="1.7" height="1.7"/><rect x="11.0" y="128.3" width="1.6" height="1.6"/><rect x="18.5" y="116.0" width="1.3" height="1.3"/><rect x="16.7" y="117.1" width="1.5" height="1.5"/><rect x="23.6" y="123.8" width="1.7" height="1.7"/><rect x="14.7" y="114.6" width="1.1" height="1.1"/><rect x="5.3" y="123.1" width="1.5" height="1.5"/><rect x="18.0" y="119.9" width="1.0" height="1.0"/><rect x="18.3" y="115.0" width="1.5" height="1.5"/><rect x="14.5" y="128.6" width="1.3" height="1.3"/><rect x="7.3" y="116.6" width="1.7" height="1.7"/><rect x="18.0" y="118.7" width="1.2" height="1.2"/><rect x="21.5" y="125.2" width="1.8" height="1.8"/><rect x="17.5" y="117.3" width="1.0" height="1.0"/><rect x="21.1" y="110.1" width="1.3" height="1.3"/><rect x="13.2" y="119.6" width="1.8" height="1.8"/><rect x="15.0" y="117.3" width="1.2" height="1.2"/><rect x="15.4" y="118.0" width="1.0" height="1.0"/><rect x="12.3" y="124.6" width="1.5" height="1.5"/><rect x="12.4" y="122.9" width="0.8" height="0.8"/><rect x="11.9" y="116.2" width="0.9" height="0.9"/><rect x="20.5" y="120.0" width="1.6" height="1.6"/><rect x="16.3" y="124.1" width="1.4" height="1.4"/><rect x="16.4" y="127.4" width="1.4" height="1.4"/><rect x="25.1" y="120.8" width="1.7" height="1.7"/><rect x="24.8" y="110.9" width="1.5" height="1.5"/><rect x="12.9" y="114.4" width="1.2" height="1.2"/><rect x="26.1" y="115.3" width="1.2" height="1.2"/><rect x="17.9" y="108.4" width="1.4" height="1.4"/><rect x="13.0" y="114.5" width="1.5" height="1.5"/><rect x="15.1" y="120.3" width="1.2" height="1.2"/><rect x="10.8" y="119.7" width="1.1" height="1.1"/><rect x="17.6" y="125.0" width="1.0" height="1.0"/><rect x="10.2" y="121.0" width="1.5" height="1.5"/><rect x="15.7" y="122.7" width="0.9" height="0.9"/><rect x="15.2" y="124.3" width="1.7" height="1.7"/><rect x="14.7" y="117.7" width="1.0" height="1.0"/><rect x="10.0" y="127.8" width="1.3" height="1.3"/><rect x="18.6" y="117.2" width="1.4" height="1.4"/><rect x="21.2" y="115.9" width="1.1" height="1.1"/><rect x="20.9" y="119.6" width="1.1" height="1.1"/><rect x="15.7" y="114.6" width="1.3" height="1.3"/><rect x="19.7" y="127.4" width="1.8" height="1.8"/><rect x="14.4" y="115.5" width="1.7" height="1.7"/><rect x="25.6" y="117.0" width="0.9" height="0.9"/><rect x="15.1" y="122.0" width="1.1" height="1.1"/><rect x="18.4" y="124.6" width="1.7" height="1.7"/><rect x="13.1" y="113.7" width="1.6" height="1.6"/><rect x="15.8" y="120.9" width="1.3" height="1.3"/><rect x="25.8" y="121.6" width="1.2" height="1.2"/><rect x="8.2" y="119.3" width="1.1" height="1.1"/><rect x="16.0" y="119.2" width="1.9" height="1.9"/><rect x="25.4" y="122.1" width="1.7" height="1.7"/><rect x="15.6" y="121.5" width="1.0" height="1.0"/><rect x="23.9" y="127.7" width="0.9" height="0.9"/><rect x="19.7" y="112.7" width="1.4" height="1.4"/><rect x="10.0" y="114.6" width="1.6" height="1.6"/><rect x="12.3" y="115.5" width="1.7" height="1.7"/><rect x="16.5" y="129.2" width="1.7" height="1.7"/><rect x="17.9" y="113.5" width="1.7" height="1.7"/><rect x="24.1" y="118.0" width="1.2" height="1.2"/><rect x="17.6" y="119.6" width="1.4" height="1.4"/><rect x="10.7" y="109.7" width="1.2" height="1.2"/><rect x="21.7" y="118.7" width="1.7" height="1.7"/><rect x="18.3" y="119.8" width="1.0" height="1.0"/><rect x="24.1" y="121.8" width="1.5" height="1.5"/><rect x="14.5" y="121.8" width="1.0" height="1.0"/><rect x="17.8" y="120.3" width="1.7" height="1.7"/><rect x="7.8" y="119.1" width="1.2" height="1.2"/><rect x="19.3" y="112.1" width="1.2" height="1.2"/><rect x="19.6" y="117.2" width="1.7" height="1.7"/><rect x="25.6" y="122.7" width="1.3" height="1.3"/><rect x="18.5" y="117.3" width="1.5" height="1.5"/><rect x="25.6" y="115.9" width="1.1" height="1.1"/><rect x="16.9" y="124.1" width="1.3" height="1.3"/><rect x="17.5" y="123.4" width="1.7" height="1.7"/><rect x="13.6" y="114.7" width="2.0" height="2.0"/><rect x="18.8" y="127.3" width="1.0" height="1.0"/><rect x="15.8" y="129.8" width="1.8" height="1.8"/><rect x="15.8" y="124.7" width="1.4" height="1.4"/><rect x="20.0" y="116.6" width="1.6" height="1.6"/><rect x="11.2" y="114.9" width="1.5" height="1.5"/><rect x="20.3" y="116.0" width="1.8" height="1.8"/><rect x="9.8" y="127.7" width="1.8" height="1.8"/><rect x="22.4" y="130.8" width="2.0" height="2.0"/><rect x="16.6" y="120.4" width="1.0" height="1.0"/><rect x="17.9" y="118.9" width="1.9" height="1.9"/><rect x="23.2" y="127.6" width="0.9" height="0.9"/><rect x="21.8" y="127.6" width="0.9" height="0.9"/><rect x="18.7" y="118.8" width="1.1" height="1.1"/><rect x="19.6" y="109.4" width="0.9" height="0.9"/><rect x="12.3" y="118.9" width="1.3" height="1.3"/><rect x="18.0" y="119.8" width="1.9" height="1.9"/><rect x="22.5" y="124.2" width="1.0" height="1.0"/><rect x="13.3" y="120.8" width="1.6" height="1.6"/><rect x="23.4" y="127.5" width="1.4" height="1.4"/><rect x="21.6" y="122.9" width="1.4" height="1.4"/><rect x="22.3" y="116.1" width="1.1" height="1.1"/><rect x="16.4" y="113.8" width="1.0" height="1.0"/><rect x="16.8" y="121.4" width="0.9" height="0.9"/><rect x="10.4" y="118.6" width="1.5" height="1.5"/><rect x="16.4" y="119.7" width="1.6" height="1.6"/><rect x="12.3" y="112.3" width="1.5" height="1.5"/><rect x="24.3" y="111.6" width="1.3" height="1.3"/><rect x="14.2" y="125.2" width="1.9" height="1.9"/><rect x="12.1" y="123.2" width="1.3" height="1.3"/><rect x="25.9" y="119.3" width="1.9" height="1.9"/><rect x="16.7" y="127.9" width="1.3" height="1.3"/><rect x="17.3" y="123.3" width="1.0" height="1.0"/><rect x="23.3" y="109.5" width="1.9" height="1.9"/><rect x="26.5" y="122.1" width="1.2" height="1.2"/><rect x="12.0" y="112.5" width="1.2" height="1.2"/><rect x="17.3" y="119.0" width="1.7" height="1.7"/><rect x="21.7" y="112.8" width="1.5" height="1.5"/><rect x="21.7" y="118.8" width="1.5" height="1.5"/><rect x="16.7" y="112.7" width="1.6" height="1.6"/><rect x="10.8" y="123.9" width="1.5" height="1.5"/><rect x="14.5" y="113.9" width="1.5" height="1.5"/><rect x="12.5" y="117.8" width="1.5" height="1.5"/><rect x="6.8" y="120.7" width="1.4" height="1.4"/><rect x="12.5" y="119.7" width="1.0" height="1.0"/><rect x="24.2" y="115.5" width="1.4" height="1.4"/><rect x="5.3" y="117.0" width="1.1" height="1.1"/><rect x="22.7" y="129.7" width="1.4" height="1.4"/><rect x="9.3" y="109.6" width="1.8" height="1.8"/><rect x="18.3" y="117.6" width="1.3" height="1.3"/><rect x="22.9" y="108.6" width="1.0" height="1.0"/><rect x="19.8" y="123.1" width="1.0" height="1.0"/><rect x="9.7" y="128.2" width="1.4" height="1.4"/><rect x="14.3" y="119.8" width="1.3" height="1.3"/><rect x="27.0" y="118.8" width="1.3" height="1.3"/><rect x="5.5" y="120.6" width="1.7" height="1.7"/><rect x="22.8" y="126.9" width="1.3" height="1.3"/><rect x="12.3" y="118.4" width="1.3" height="1.3"/><rect x="13.6" y="124.4" width="0.9" height="0.9"/><rect x="19.6" y="127.1" width="0.9" height="0.9"/><rect x="21.5" y="128.3" width="1.1" height="1.1"/><rect x="14.8" y="123.3" width="1.8" height="1.8"/><rect x="24.8" y="124.0" width="1.8" height="1.8"/><rect x="19.0" y="125.5" width="1.7" height="1.7"/><rect x="12.4" y="114.8" width="0.9" height="0.9"/><rect x="11.2" y="121.2" width="1.6" height="1.6"/><rect x="15.1" y="125.4" width="1.6" height="1.6"/><rect x="19.3" y="113.4" width="1.3" height="1.3"/><rect x="15.5" y="112.9" width="1.6" height="1.6"/><rect x="15.8" y="121.2" width="1.7" height="1.7"/><rect x="11.2" y="124.5" width="1.4" height="1.4"/><rect x="25.9" y="112.6" width="0.9" height="0.9"/><rect x="11.0" y="115.0" width="1.4" height="1.4"/><rect x="20.6" y="113.3" width="1.4" height="1.4"/><rect x="22.4" y="114.6" width="1.4" height="1.4"/><rect x="4.9" y="118.1" width="1.6" height="1.6"/><rect x="16.6" y="112.4" width="0.9" height="0.9"/><rect x="13.5" y="111.5" width="1.7" height="1.7"/><rect x="17.4" y="115.8" width="1.1" height="1.1"/><rect x="27.6" y="124.6" width="1.0" height="1.0"/><rect x="26.2" y="124.7" width="1.5" height="1.5"/><rect x="26.2" y="122.3" width="1.6" height="1.6"/><rect x="14.8" y="119.2" width="1.6" height="1.6"/><rect x="9.5" y="123.2" width="2.0" height="2.0"/><rect x="20.6" y="123.6" width="1.4" height="1.4"/><rect x="16.2" y="124.0" width="1.2" height="1.2"/><rect x="16.6" y="131.9" width="1.5" height="1.5"/><rect x="10.2" y="118.5" width="0.9" height="0.9"/><rect x="21.1" y="106.9" width="1.1" height="1.1"/><rect x="17.6" y="121.0" width="1.4" height="1.4"/><rect x="11.9" y="124.2" width="1.4" height="1.4"/><rect x="11.6" y="115.9" width="1.7" height="1.7"/><rect x="15.0" y="118.3" width="1.2" height="1.2"/><rect x="10.5" y="117.6" width="1.5" height="1.5"/><rect x="14.7" y="123.7" width="1.7" height="1.7"/><rect x="14.4" y="128.9" width="1.7" height="1.7"/><rect x="11.0" y="115.1" width="1.9" height="1.9"/><rect x="23.5" y="121.5" width="1.6" height="1.6"/><rect x="29.3" y="122.9" width="0.9" height="0.9"/><rect x="13.6" y="116.7" width="1.9" height="1.9"/><rect x="6.2" y="114.6" width="1.4" height="1.4"/><rect x="12.5" y="110.3" width="1.2" height="1.2"/><rect x="20.0" y="131.0" width="1.0" height="1.0"/><rect x="20.8" y="116.8" width="1.0" height="1.0"/><rect x="26.4" y="125.4" width="1.9" height="1.9"/><rect x="8.8" y="123.9" width="1.1" height="1.1"/><rect x="25.2" y="113.5" width="1.0" height="1.0"/><rect x="26.4" y="122.5" width="0.9" height="0.9"/><rect x="19.8" y="114.4" width="1.1" height="1.1"/><rect x="12.0" y="116.2" width="1.5" height="1.5"/><rect x="11.4" y="130.1" width="1.0" height="1.0"/><rect x="15.7" y="120.1" width="1.3" height="1.3"/><rect x="14.1" y="115.4" width="1.5" height="1.5"/><rect x="23.0" y="123.0" width="1.7" height="1.7"/><rect x="8.1" y="123.2" width="1.0" height="1.0"/><rect x="18.6" y="116.1" width="1.9" height="1.9"/><rect x="11.7" y="118.1" width="1.2" height="1.2"/><rect x="17.0" y="111.4" width="1.9" height="1.9"/><rect x="23.2" y="123.1" width="1.8" height="1.8"/><rect x="10.4" y="114.3" width="0.9" height="0.9"/><rect x="20.3" y="123.0" width="1.8" height="1.8"/><rect x="19.6" y="115.1" width="1.9" height="1.9"/><rect x="25.6" y="120.8" width="1.9" height="1.9"/><rect x="15.8" y="117.3" width="1.2" height="1.2"/><rect x="12.3" y="120.5" width="1.7" height="1.7"/><rect x="21.9" y="129.3" width="1.2" height="1.2"/><rect x="24.5" y="122.5" width="0.9" height="0.9"/><rect x="6.1" y="115.4" width="1.5" height="1.5"/><rect x="15.3" y="119.4" width="1.4" height="1.4"/><rect x="24.7" y="124.4" width="1.0" height="1.0"/><rect x="11.6" y="116.1" width="1.3" height="1.3"/><rect x="15.0" y="115.7" width="1.0" height="1.0"/><rect x="22.4" y="116.9" width="1.8" height="1.8"/><rect x="22.2" y="113.7" width="1.0" height="1.0"/><rect x="22.6" y="124.1" width="1.4" height="1.4"/><rect x="22.4" y="123.9" width="1.0" height="1.0"/><rect x="9.5" y="117.3" width="1.3" height="1.3"/><rect x="19.1" y="125.3" width="1.1" height="1.1"/><rect x="20.4" y="122.4" width="1.8" height="1.8"/><rect x="5.5" y="119.8" width="1.5" height="1.5"/><rect x="15.2" y="114.6" width="1.7" height="1.7"/><rect x="19.9" y="123.2" width="0.9" height="0.9"/><rect x="10.8" y="123.9" width="1.2" height="1.2"/><rect x="19.1" y="117.3" width="1.5" height="1.5"/><rect x="17.9" y="127.7" width="1.7" height="1.7"/><rect x="16.4" y="116.7" width="1.1" height="1.1"/><rect x="25.7" y="121.3" width="1.6" height="1.6"/><rect x="19.4" y="113.5" width="1.7" height="1.7"/><rect x="11.3" y="122.5" width="0.9" height="0.9"/><rect x="17.3" y="129.6" width="1.6" height="1.6"/><rect x="20.5" y="123.9" width="1.0" height="1.0"/><rect x="18.5" y="123.3" width="1.2" height="1.2"/><rect x="18.9" y="111.8" width="1.4" height="1.4"/><rect x="17.1" y="109.8" width="1.1" height="1.1"/><rect x="8.1" y="110.1" width="1.7" height="1.7"/><rect x="25.6" y="124.7" width="1.2" height="1.2"/><rect x="12.0" y="109.5" width="1.0" height="1.0"/><rect x="25.9" y="112.9" width="1.8" height="1.8"/><rect x="19.8" y="110.8" width="1.3" height="1.3"/><rect x="22.2" y="108.9" width="1.8" height="1.8"/><rect x="18.2" y="114.2" width="1.8" height="1.8"/><rect x="17.5" y="123.3" width="1.4" height="1.4"/><rect x="17.6" y="126.5" width="1.9" height="1.9"/><rect x="13.0" y="109.6" width="1.3" height="1.3"/><rect x="19.4" y="107.7" width="1.6" height="1.6"/><rect x="28.3" y="114.6" width="1.3" height="1.3"/><rect x="25.1" y="123.9" width="1.8" height="1.8"/><rect x="12.3" y="126.4" width="1.8" height="1.8"/><rect x="17.2" y="118.4" width="1.4" height="1.4"/><rect x="20.1" y="119.3" width="1.7" height="1.7"/><rect x="9.3" y="123.3" width="1.4" height="1.4"/><rect x="14.7" y="122.9" width="1.2" height="1.2"/><rect x="22.1" y="111.5" width="1.2" height="1.2"/><rect x="21.4" y="121.7" width="1.6" height="1.6"/><rect x="8.1" y="122.4" width="1.7" height="1.7"/><rect x="24.2" y="125.8" width="0.9" height="0.9"/><rect x="18.8" y="115.3" width="1.1" height="1.1"/><rect x="23.0" y="117.4" width="1.1" height="1.1"/><rect x="23.9" y="113.3" width="1.8" height="1.8"/><rect x="11.0" y="123.7" width="1.9" height="1.9"/><rect x="21.5" y="130.4" width="1.0" height="1.0"/><rect x="16.8" y="119.0" width="1.0" height="1.0"/><rect x="23.7" y="116.6" width="1.7" height="1.7"/><rect x="17.0" y="125.1" width="1.0" height="1.0"/><rect x="4.8" y="114.8" width="1.4" height="1.4"/><rect x="24.6" y="113.0" width="0.9" height="0.9"/><rect x="12.0" y="114.1" width="1.9" height="1.9"/><rect x="10.8" y="126.3" width="1.5" height="1.5"/><rect x="11.4" y="124.6" width="1.6" height="1.6"/><rect x="23.4" y="114.8" width="1.2" height="1.2"/><rect x="19.2" y="118.7" width="1.8" height="1.8"/><rect x="13.6" y="111.4" width="1.3" height="1.3"/><rect x="15.6" y="108.3" width="0.9" height="0.9"/><rect x="15.4" y="122.1" width="1.9" height="1.9"/><rect x="19.8" y="116.7" width="1.5" height="1.5"/><rect x="15.2" y="118.1" width="1.3" height="1.3"/><rect x="16.8" y="109.7" width="1.2" height="1.2"/><rect x="17.4" y="113.6" width="1.4" height="1.4"/><rect x="10.0" y="109.5" width="1.6" height="1.6"/><rect x="14.5" y="109.4" width="1.2" height="1.2"/><rect x="21.5" y="126.2" width="1.8" height="1.8"/><rect x="18.6" y="113.2" width="1.0" height="1.0"/><rect x="22.6" y="128.1" width="1.0" height="1.0"/><rect x="16.2" y="121.0" width="1.2" height="1.2"/><rect x="21.1" y="118.0" width="1.2" height="1.2"/><rect x="21.0" y="117.5" width="1.2" height="1.2"/><rect x="14.1" y="120.2" width="1.1" height="1.1"/><rect x="12.0" y="123.0" width="1.9" height="1.9"/><rect x="16.5" y="123.4" width="1.9" height="1.9"/><rect x="5.2" y="122.8" width="1.6" height="1.6"/><rect x="18.0" y="113.4" width="1.0" height="1.0"/><rect x="17.3" y="111.7" width="1.5" height="1.5"/><rect x="11.8" y="109.5" width="1.1" height="1.1"/><rect x="11.7" y="118.0" width="1.5" height="1.5"/><rect x="16.3" y="130.1" width="0.9" height="0.9"/><rect x="20.9" y="111.6" width="1.2" height="1.2"/><rect x="21.7" y="117.1" width="1.1" height="1.1"/><rect x="24.4" y="122.5" width="1.7" height="1.7"/><rect x="14.1" y="113.0" width="1.7" height="1.7"/><rect x="21.3" y="122.6" width="1.6" height="1.6"/><rect x="26.0" y="117.1" width="1.6" height="1.6"/><rect x="18.0" y="112.6" width="1.9" height="1.9"/><rect x="16.7" y="113.1" width="1.3" height="1.3"/><rect x="19.1" y="113.3" width="1.0" height="1.0"/><rect x="22.5" y="113.2" width="1.4" height="1.4"/><rect x="20.9" y="123.4" width="0.9" height="0.9"/><rect x="10.4" y="123.0" width="1.8" height="1.8"/><rect x="12.8" y="111.6" width="1.3" height="1.3"/><rect x="12.3" y="116.7" width="1.8" height="1.8"/><rect x="20.0" y="107.0" width="1.0" height="1.0"/><rect x="11.8" y="109.4" width="1.4" height="1.4"/><rect x="16.5" y="107.0" width="1.6" height="1.6"/><rect x="19.5" y="116.6" width="1.6" height="1.6"/><rect x="14.4" y="110.4" width="1.1" height="1.1"/><rect x="25.1" y="122.6" width="1.8" height="1.8"/><rect x="16.4" y="123.5" width="1.1" height="1.1"/><rect x="25.1" y="124.4" width="1.9" height="1.9"/><rect x="19.0" y="113.2" width="1.6" height="1.6"/><rect x="28.2" y="124.4" width="1.2" height="1.2"/><rect x="26.2" y="119.2" width="1.0" height="1.0"/><rect x="16.6" y="121.2" width="1.3" height="1.3"/><rect x="5.9" y="115.0" width="0.9" height="0.9"/><rect x="18.5" y="116.2" width="1.1" height="1.1"/><rect x="12.9" y="114.7" width="1.2" height="1.2"/><rect x="12.9" y="117.1" width="1.7" height="1.7"/><rect x="20.2" y="131.0" width="1.7" height="1.7"/><rect x="15.4" y="118.6" width="1.7" height="1.7"/><rect x="24.6" y="120.4" width="1.3" height="1.3"/><rect x="25.5" y="122.5" width="1.7" height="1.7"/><rect x="11.3" y="115.7" width="1.4" height="1.4"/><rect x="13.0" y="116.5" width="1.8" height="1.8"/><rect x="28.7" y="118.7" width="1.9" height="1.9"/><rect x="23.7" y="122.2" width="1.0" height="1.0"/><rect x="7.6" y="121.8" width="1.6" height="1.6"/><rect x="11.3" y="120.7" width="1.1" height="1.1"/><rect x="12.7" y="122.0" width="1.1" height="1.1"/><rect x="16.3" y="111.2" width="1.3" height="1.3"/><rect x="20.3" y="128.6" width="1.1" height="1.1"/><rect x="16.2" y="127.3" width="1.6" height="1.6"/><rect x="27.6" y="117.2" width="1.9" height="1.9"/><rect x="26.1" y="114.0" width="1.6" height="1.6"/><rect x="21.1" y="120.7" width="0.9" height="0.9"/><rect x="23.8" y="111.1" width="1.5" height="1.5"/><rect x="16.5" y="125.1" width="1.0" height="1.0"/><rect x="16.3" y="120.8" width="1.0" height="1.0"/><rect x="19.4" y="112.3" width="1.0" height="1.0"/><rect x="19.9" y="121.3" width="1.7" height="1.7"/><rect x="26.8" y="112.9" width="1.4" height="1.4"/><rect x="18.5" y="115.9" width="1.0" height="1.0"/><rect x="9.9" y="116.0" width="1.1" height="1.1"/><rect x="17.0" y="120.3" width="1.9" height="1.9"/><rect x="23.9" y="118.2" width="1.7" height="1.7"/><rect x="8.1" y="126.9" width="1.8" height="1.8"/><rect x="17.7" y="119.8" width="1.1" height="1.1"/><rect x="11.5" y="115.8" width="0.9" height="0.9"/><rect x="22.5" y="109.0" width="1.4" height="1.4"/><rect x="14.6" y="118.5" width="1.2" height="1.2"/><rect x="7.8" y="119.9" width="1.1" height="1.1"/><rect x="14.7" y="121.0" width="1.5" height="1.5"/><rect x="20.0" y="122.1" width="1.4" height="1.4"/><rect x="9.1" y="114.3" width="1.6" height="1.6"/><rect x="14.7" y="119.9" width="1.7" height="1.7"/><rect x="23.9" y="121.4" width="1.3" height="1.3"/><rect x="12.2" y="109.9" width="1.1" height="1.1"/><rect x="11.1" y="110.9" width="1.4" height="1.4"/><rect x="15.1" y="117.6" width="1.1" height="1.1"/><rect x="21.7" y="118.6" width="1.3" height="1.3"/><rect x="19.9" y="107.2" width="1.5" height="1.5"/><rect x="16.9" y="117.2" width="0.9" height="0.9"/><rect x="28.6" y="117.3" width="0.9" height="0.9"/><rect x="21.6" y="120.5" width="1.9" height="1.9"/><rect x="18.8" y="128.5" width="1.9" height="1.9"/><rect x="16.7" y="122.7" width="0.9" height="0.9"/><rect x="17.1" y="116.0" width="1.9" height="1.9"/><rect x="16.0" y="114.9" width="1.7" height="1.7"/><rect x="21.1" y="125.6" width="1.0" height="1.0"/><rect x="17.4" y="118.8" width="1.8" height="1.8"/><rect x="5.7" y="114.8" width="1.4" height="1.4"/><rect x="10.6" y="113.0" width="1.7" height="1.7"/><rect x="18.9" y="120.0" width="1.5" height="1.5"/><rect x="15.3" y="125.3" width="0.8" height="0.8"/><rect x="17.0" y="117.6" width="1.8" height="1.8"/><rect x="19.7" y="112.3" width="1.0" height="1.0"/><rect x="14.4" y="115.4" width="1.3" height="1.3"/><rect x="11.2" y="117.3" width="0.9" height="0.9"/><rect x="15.4" y="106.4" width="1.8" height="1.8"/><rect x="22.0" y="122.7" width="1.2" height="1.2"/><rect x="17.3" y="115.3" width="1.5" height="1.5"/><rect x="28.0" y="117.5" width="0.8" height="0.8"/><rect x="19.8" y="120.4" width="1.6" height="1.6"/><rect x="10.6" y="114.4" width="1.4" height="1.4"/><rect x="9.5" y="123.9" width="1.6" height="1.6"/><rect x="26.1" y="113.7" width="1.7" height="1.7"/><rect x="27.6" y="112.6" width="1.6" height="1.6"/><rect x="26.6" y="120.9" width="1.8" height="1.8"/><rect x="7.5" y="122.6" width="1.1" height="1.1"/><rect x="15.1" y="124.7" width="1.2" height="1.2"/><rect x="22.8" y="122.9" width="1.9" height="1.9"/><rect x="18.0" y="106.7" width="2.0" height="2.0"/><rect x="17.1" y="113.8" width="1.1" height="1.1"/><rect x="15.9" y="119.7" width="1.1" height="1.1"/></g><path d="M44 106 L48 113" stroke="#999" stroke-width="2.2"/><path d="M60 135 L67 128 L67 135Z" fill="#e0a0a0"/><g fill="#222" opacity="1.0"><rect x="83.0" y="126.8" width="2.7" height="2.7"/><rect x="96.2" y="110.7" width="2.3" height="2.3"/><rect x="96.6" y="124.2" width="1.9" height="1.9"/><rect x="82.9" y="112.3" width="2.3" height="2.3"/><rect x="92.7" y="116.5" width="2.3" height="2.3"/><rect x="82.8" y="110.4" width="3.0" height="3.0"/><rect x="78.4" y="123.8" width="2.5" height="2.5"/><rect x="91.5" y="116.8" width="1.7" height="1.7"/><rect x="85.3" y="128.6" width="1.3" height="1.3"/><rect x="87.4" y="127.6" width="3.1" height="3.1"/><rect x="91.5" y="124.6" width="2.5" height="2.5"/><rect x="84.2" y="107.8" width="2.6" height="2.6"/><rect x="88.1" y="123.6" width="1.4" height="1.4"/><rect x="86.0" y="112.4" width="1.8" height="1.8"/></g><g fill="#888" opacity="1.0"><rect x="97.4" y="115.4" width="2.4" height="2.4"/><rect x="82.8" y="109.8" width="2.5" height="2.5"/><rect x="87.0" y="120.4" width="1.4" height="1.4"/><rect x="95.2" y="118.2" width="1.6" height="1.6"/><rect x="94.4" y="123.0" width="3.0" height="3.0"/><rect x="85.6" y="111.7" width="2.7" height="2.7"/></g><g fill="#222" opacity="1.0"><rect x="121.8" y="121.2" width="2.4" height="2.4"/><rect x="110.9" y="123.3" width="2.7" height="2.7"/><rect x="119.5" y="113.5" width="3.8" height="3.8"/><rect x="113.5" y="127.4" width="1.7" height="1.7"/><rect x="122.9" y="112.1" width="3.6" height="3.6"/><rect x="123.5" y="107.4" width="2.3" height="2.3"/><rect x="125.7" y="117.8" width="3.7" height="3.7"/><rect x="125.8" y="126.3" width="3.0" height="3.0"/><rect x="117.1" y="112.8" width="2.0" height="2.0"/><rect x="130.6" y="124.9" width="2.5" height="2.5"/><rect x="114.3" y="109.5" width="2.2" height="2.2"/><rect x="121.5" y="118.1" width="3.6" height="3.6"/><rect x="128.7" y="126.8" width="2.5" height="2.5"/><rect x="119.2" y="112.7" width="3.4" height="3.4"/><rect x="119.9" y="125.4" width="2.9" height="2.9"/><rect x="125.0" y="121.7" width="3.5" height="3.5"/><rect x="118.2" y="125.3" width="3.4" height="3.4"/><rect x="120.9" y="123.1" width="2.2" height="2.2"/><rect x="114.1" y="122.7" width="3.1" height="3.1"/><rect x="108.1" y="119.6" width="1.8" height="1.8"/><rect x="113.9" y="107.3" width="2.2" height="2.2"/><rect x="128.5" y="119.1" width="1.9" height="1.9"/><rect x="109.4" y="120.2" width="1.9" height="1.9"/><rect x="126.6" y="123.6" width="2.1" height="2.1"/><rect x="121.0" y="126.1" width="1.9" height="1.9"/><rect x="127.1" y="120.7" width="2.7" height="2.7"/></g><g fill="#000" opacity="1.0"><rect x="162.6" y="113.5" width="0.7" height="0.7"/><rect x="155.1" y="129.4" width="1.1" height="1.1"/><rect x="162.4" y="107.5" width="1.3" height="1.3"/><rect x="163.5" y="126.2" width="1.0" height="1.0"/><rect x="153.4" y="123.3" width="1.3" height="1.3"/><rect x="153.9" y="121.4" width="0.8" height="0.8"/><rect x="161.4" y="113.1" width="1.2" height="1.2"/><rect x="161.4" y="121.7" width="0.9" height="0.9"/><rect x="156.2" y="128.5" width="0.9" height="0.9"/><rect x="163.1" y="127.0" width="1.0" height="1.0"/><rect x="153.6" y="118.8" width="1.1" height="1.1"/><rect x="150.8" y="117.3" width="1.0" height="1.0"/><rect x="152.4" y="107.3" width="0.8" height="0.8"/><rect x="142.1" y="117.6" width="1.1" height="1.1"/><rect x="160.7" y="127.4" width="1.4" height="1.4"/><rect x="152.2" y="104.6" width="0.9" height="0.9"/><rect x="157.9" y="114.1" width="0.8" height="0.8"/><rect x="142.1" y="109.8" width="0.7" height="0.7"/><rect x="153.5" y="120.1" width="1.0" height="1.0"/><rect x="156.9" y="122.2" width="1.2" height="1.2"/><rect x="141.2" y="110.7" width="0.9" height="0.9"/><rect x="152.3" y="116.1" width="1.4" height="1.4"/><rect x="154.0" y="127.1" width="1.0" height="1.0"/><rect x="162.3" y="114.4" width="1.4" height="1.4"/><rect x="148.3" y="113.0" width="1.3" height="1.3"/><rect x="157.2" y="130.9" width="1.0" height="1.0"/><rect x="155.0" y="131.1" width="0.9" height="0.9"/><rect x="146.2" y="122.0" width="1.1" height="1.1"/><rect x="161.5" y="118.7" width="0.7" height="0.7"/><rect x="153.1" y="117.3" width="1.1" height="1.1"/></g><g fill="#000" opacity="1.0"><rect x="16.6" y="160.1" width="1.4" height="1.4"/><rect x="16.2" y="149.6" width="1.0" height="1.0"/><rect x="19.1" y="155.8" width="1.3" height="1.3"/><rect x="21.4" y="154.7" width="1.0" height="1.0"/><rect x="10.9" y="149.3" width="1.2" height="1.2"/><rect x="24.3" y="146.8" width="1.7" height="1.7"/><rect x="22.0" y="151.6" width="1.8" height="1.8"/><rect x="15.2" y="154.2" width="1.7" height="1.7"/><rect x="18.0" y="153.7" width="1.1" height="1.1"/><rect x="21.7" y="148.1" width="1.3" height="1.3"/><rect x="23.9" y="143.4" width="1.5" height="1.5"/><rect x="13.8" y="152.7" width="1.0" height="1.0"/><rect x="12.3" y="145.8" width="1.6" height="1.6"/><rect x="17.9" y="155.4" width="1.7" height="1.7"/><rect x="13.3" y="151.2" width="1.5" height="1.5"/><rect x="16.8" y="157.8" width="1.2" height="1.2"/><rect x="7.3" y="151.5" width="0.9" height="0.9"/><rect x="16.5" y="143.9" width="1.3" height="1.3"/><rect x="11.5" y="142.7" width="0.8" height="0.8"/><rect x="7.3" y="154.5" width="1.5" height="1.5"/><rect x="14.5" y="149.7" width="1.8" height="1.8"/><rect x="18.1" y="148.4" width="1.2" height="1.2"/><rect x="21.3" y="151.8" width="1.2" height="1.2"/><rect x="18.2" y="163.5" width="1.2" height="1.2"/><rect x="11.3" y="143.5" width="0.9" height="0.9"/><rect x="17.8" y="157.5" width="1.1" height="1.1"/><rect x="20.4" y="153.8" width="1.2" height="1.2"/><rect x="14.7" y="154.2" width="1.4" height="1.4"/><rect x="25.0" y="150.0" width="1.1" height="1.1"/><rect x="15.0" y="146.3" width="1.0" height="1.0"/><rect x="15.8" y="153.1" width="1.5" height="1.5"/><rect x="20.3" y="158.3" width="1.8" height="1.8"/><rect x="18.3" y="140.7" width="1.4" height="1.4"/><rect x="10.3" y="145.4" width="1.8" height="1.8"/><rect x="20.7" y="163.5" width="1.1" height="1.1"/><rect x="16.6" y="165.1" width="1.4" height="1.4"/><rect x="13.3" y="150.7" width="0.8" height="0.8"/><rect x="6.8" y="150.7" width="1.1" height="1.1"/><rect x="17.6" y="153.3" width="1.0" height="1.0"/><rect x="16.8" y="152.5" width="1.0" height="1.0"/><rect x="16.0" y="163.2" width="1.8" height="1.8"/><rect x="20.2" y="153.4" width="1.8" height="1.8"/><rect x="20.6" y="152.3" width="1.1" height="1.1"/><rect x="11.3" y="152.2" width="1.2" height="1.2"/><rect x="12.0" y="153.7" width="0.8" height="0.8"/><rect x="20.3" y="154.9" width="0.9" height="0.9"/><rect x="9.9" y="145.9" width="1.1" height="1.1"/><rect x="19.7" y="142.9" width="1.1" height="1.1"/><rect x="12.8" y="153.2" width="1.7" height="1.7"/><rect x="15.0" y="152.2" width="0.9" height="0.9"/><rect x="14.7" y="147.0" width="1.5" height="1.5"/><rect x="18.5" y="164.5" width="1.6" height="1.6"/><rect x="24.2" y="157.8" width="1.0" height="1.0"/><rect x="13.9" y="141.7" width="1.6" height="1.6"/><rect x="17.3" y="155.9" width="1.5" height="1.5"/><rect x="13.7" y="151.6" width="1.0" height="1.0"/><rect x="14.3" y="151.5" width="1.4" height="1.4"/><rect x="17.3" y="158.0" width="1.2" height="1.2"/><rect x="6.8" y="150.8" width="0.8" height="0.8"/><rect x="16.3" y="148.5" width="1.1" height="1.1"/><rect x="10.6" y="145.3" width="1.4" height="1.4"/><rect x="20.6" y="150.5" width="1.1" height="1.1"/><rect x="14.4" y="148.7" width="0.9" height="0.9"/><rect x="18.7" y="164.0" width="1.6" height="1.6"/><rect x="18.5" y="147.6" width="1.1" height="1.1"/><rect x="16.6" y="150.8" width="1.4" height="1.4"/><rect x="18.7" y="154.1" width="1.3" height="1.3"/><rect x="22.2" y="148.0" width="1.0" height="1.0"/><rect x="22.6" y="158.3" width="1.3" height="1.3"/><rect x="10.3" y="160.8" width="1.3" height="1.3"/><rect x="17.5" y="150.0" width="0.9" height="0.9"/><rect x="11.3" y="157.9" width="1.0" height="1.0"/><rect x="14.7" y="149.0" width="1.1" height="1.1"/><rect x="6.8" y="154.5" width="1.6" height="1.6"/><rect x="12.1" y="158.1" width="1.7" height="1.7"/><rect x="25.3" y="149.4" width="0.9" height="0.9"/><rect x="8.1" y="155.5" width="1.1" height="1.1"/><rect x="19.9" y="151.2" width="1.3" height="1.3"/><rect x="13.0" y="149.3" width="0.9" height="0.9"/><rect x="17.0" y="141.8" width="1.2" height="1.2"/><rect x="22.6" y="156.3" width="0.9" height="0.9"/><rect x="19.1" y="152.5" width="1.1" height="1.1"/><rect x="17.4" y="149.5" width="0.9" height="0.9"/><rect x="20.5" y="154.7" width="1.3" height="1.3"/><rect x="19.0" y="149.6" width="1.0" height="1.0"/><rect x="17.6" y="146.2" width="1.1" height="1.1"/><rect x="20.5" y="156.4" width="1.8" height="1.8"/><rect x="20.7" y="156.4" width="1.6" height="1.6"/><rect x="12.7" y="149.7" width="1.3" height="1.3"/><rect x="14.8" y="142.7" width="0.9" height="0.9"/><rect x="26.3" y="160.4" width="1.1" height="1.1"/><rect x="17.1" y="158.0" width="1.3" height="1.3"/><rect x="20.7" y="152.8" width="1.7" height="1.7"/><rect x="15.3" y="156.6" width="1.6" height="1.6"/><rect x="14.7" y="156.5" width="1.2" height="1.2"/><rect x="22.6" y="141.3" width="1.4" height="1.4"/><rect x="28.0" y="153.7" width="1.4" height="1.4"/><rect x="11.1" y="164.2" width="1.6" height="1.6"/><rect x="16.4" y="159.2" width="1.2" height="1.2"/><rect x="13.2" y="158.1" width="0.9" height="0.9"/><rect x="9.2" y="157.9" width="1.7" height="1.7"/><rect x="17.2" y="148.1" width="1.7" height="1.7"/><rect x="15.5" y="142.2" width="1.6" height="1.6"/><rect x="16.8" y="162.5" width="1.2" height="1.2"/><rect x="18.9" y="150.1" width="1.3" height="1.3"/><rect x="10.8" y="163.3" width="1.1" height="1.1"/><rect x="24.0" y="142.5" width="1.7" height="1.7"/><rect x="16.6" y="143.2" width="1.5" height="1.5"/><rect x="10.2" y="150.9" width="1.1" height="1.1"/><rect x="19.3" y="141.9" width="1.7" height="1.7"/><rect x="18.3" y="158.8" width="1.0" height="1.0"/><rect x="21.7" y="156.4" width="0.8" height="0.8"/><rect x="18.3" y="148.5" width="0.9" height="0.9"/><rect x="26.7" y="157.4" width="1.0" height="1.0"/><rect x="10.6" y="154.6" width="1.6" height="1.6"/><rect x="22.4" y="151.4" width="1.4" height="1.4"/><rect x="22.8" y="148.5" width="1.7" height="1.7"/><rect x="16.4" y="147.4" width="1.7" height="1.7"/><rect x="14.2" y="151.6" width="1.4" height="1.4"/><rect x="20.8" y="146.1" width="1.3" height="1.3"/><rect x="14.8" y="149.2" width="1.2" height="1.2"/><rect x="15.9" y="149.8" width="1.7" height="1.7"/><rect x="25.5" y="154.9" width="1.2" height="1.2"/><rect x="15.6" y="146.3" width="0.9" height="0.9"/><rect x="5.1" y="151.2" width="1.6" height="1.6"/><rect x="14.1" y="156.6" width="1.6" height="1.6"/><rect x="18.5" y="148.7" width="1.7" height="1.7"/><rect x="23.9" y="152.7" width="1.2" height="1.2"/><rect x="18.6" y="158.3" width="1.1" height="1.1"/><rect x="16.5" y="148.8" width="1.3" height="1.3"/><rect x="7.3" y="153.0" width="0.9" height="0.9"/><rect x="6.3" y="148.7" width="1.0" height="1.0"/><rect x="24.0" y="148.6" width="1.6" height="1.6"/><rect x="21.2" y="148.5" width="1.7" height="1.7"/><rect x="17.4" y="154.4" width="1.3" height="1.3"/><rect x="24.5" y="150.8" width="1.7" height="1.7"/><rect x="13.6" y="151.7" width="1.4" height="1.4"/><rect x="19.2" y="146.6" width="1.4" height="1.4"/><rect x="16.7" y="158.2" width="1.2" height="1.2"/><rect x="9.7" y="152.4" width="0.9" height="0.9"/><rect x="22.9" y="153.2" width="1.5" height="1.5"/><rect x="17.0" y="148.2" width="1.0" height="1.0"/><rect x="13.0" y="152.6" width="1.4" height="1.4"/><rect x="20.6" y="150.5" width="1.4" height="1.4"/><rect x="15.0" y="142.4" width="1.5" height="1.5"/><rect x="15.7" y="148.0" width="1.7" height="1.7"/><rect x="18.9" y="152.0" width="1.8" height="1.8"/><rect x="14.4" y="154.0" width="0.9" height="0.9"/><rect x="19.8" y="143.6" width="0.9" height="0.9"/><rect x="8.0" y="155.3" width="1.8" height="1.8"/><rect x="11.3" y="162.5" width="1.0" height="1.0"/><rect x="18.2" y="156.7" width="1.2" height="1.2"/><rect x="12.9" y="149.3" width="0.9" height="0.9"/><rect x="17.5" y="155.7" width="1.0" height="1.0"/><rect x="13.9" y="160.1" width="1.0" height="1.0"/><rect x="10.1" y="153.9" width="1.8" height="1.8"/><rect x="12.8" y="153.8" width="1.4" height="1.4"/><rect x="19.4" y="156.1" width="0.9" height="0.9"/><rect x="12.0" y="156.5" width="1.2" height="1.2"/><rect x="11.0" y="161.0" width="1.2" height="1.2"/><rect x="24.5" y="163.6" width="1.4" height="1.4"/><rect x="29.6" y="153.5" width="1.5" height="1.5"/><rect x="11.4" y="160.3" width="1.7" height="1.7"/><rect x="11.4" y="157.0" width="1.1" height="1.1"/><rect x="8.0" y="149.8" width="1.5" height="1.5"/><rect x="20.5" y="151.9" width="1.2" height="1.2"/><rect x="23.9" y="143.8" width="1.4" height="1.4"/><rect x="14.4" y="147.7" width="1.8" height="1.8"/><rect x="10.7" y="151.0" width="1.0" height="1.0"/><rect x="17.5" y="151.6" width="1.1" height="1.1"/><rect x="9.5" y="154.0" width="1.2" height="1.2"/><rect x="21.8" y="149.3" width="1.3" height="1.3"/><rect x="25.4" y="149.0" width="1.3" height="1.3"/><rect x="13.8" y="158.6" width="1.4" height="1.4"/><rect x="18.1" y="148.1" width="1.2" height="1.2"/><rect x="12.3" y="157.0" width="1.7" height="1.7"/><rect x="11.9" y="151.7" width="1.1" height="1.1"/><rect x="18.7" y="149.5" width="1.5" height="1.5"/><rect x="21.2" y="153.6" width="0.8" height="0.8"/><rect x="18.3" y="149.6" width="1.0" height="1.0"/><rect x="21.8" y="154.8" width="1.5" height="1.5"/><rect x="24.8" y="150.3" width="1.7" height="1.7"/><rect x="13.1" y="154.7" width="1.6" height="1.6"/><rect x="21.0" y="148.0" width="0.9" height="0.9"/><rect x="24.6" y="145.2" width="1.4" height="1.4"/><rect x="18.8" y="152.7" width="0.8" height="0.8"/><rect x="18.0" y="154.0" width="1.5" height="1.5"/><rect x="14.8" y="150.7" width="0.9" height="0.9"/><rect x="20.7" y="161.1" width="1.5" height="1.5"/><rect x="23.0" y="151.8" width="1.8" height="1.8"/><rect x="11.1" y="155.6" width="1.0" height="1.0"/><rect x="27.2" y="152.7" width="1.0" height="1.0"/><rect x="18.6" y="156.4" width="1.1" height="1.1"/><rect x="16.8" y="150.7" width="1.3" height="1.3"/><rect x="16.3" y="151.5" width="1.2" height="1.2"/><rect x="19.2" y="144.8" width="1.2" height="1.2"/><rect x="23.5" y="147.0" width="1.1" height="1.1"/><rect x="13.7" y="151.7" width="1.0" height="1.0"/><rect x="9.6" y="159.7" width="0.8" height="0.8"/><rect x="20.7" y="142.2" width="1.3" height="1.3"/><rect x="28.6" y="153.4" width="1.2" height="1.2"/><rect x="12.9" y="145.6" width="1.5" height="1.5"/><rect x="12.8" y="149.2" width="1.2" height="1.2"/><rect x="20.0" y="141.9" width="1.6" height="1.6"/><rect x="26.9" y="152.4" width="1.1" height="1.1"/><rect x="17.2" y="147.9" width="1.4" height="1.4"/><rect x="24.0" y="163.8" width="1.3" height="1.3"/><rect x="17.2" y="149.3" width="1.6" height="1.6"/><rect x="11.1" y="149.5" width="1.8" height="1.8"/><rect x="26.6" y="158.9" width="0.9" height="0.9"/><rect x="16.5" y="156.1" width="1.7" height="1.7"/><rect x="7.2" y="156.7" width="1.0" height="1.0"/><rect x="15.8" y="143.7" width="0.9" height="0.9"/><rect x="6.6" y="153.4" width="1.0" height="1.0"/><rect x="14.0" y="148.7" width="1.2" height="1.2"/><rect x="23.9" y="152.9" width="1.4" height="1.4"/><rect x="20.9" y="142.8" width="1.3" height="1.3"/><rect x="21.3" y="148.0" width="1.8" height="1.8"/><rect x="13.8" y="153.6" width="1.6" height="1.6"/><rect x="23.0" y="160.7" width="0.8" height="0.8"/><rect x="25.1" y="152.4" width="1.6" height="1.6"/><rect x="23.3" y="159.8" width="1.2" height="1.2"/><rect x="17.1" y="164.9" width="0.8" height="0.8"/></g><g fill="none" stroke="#000" stroke-width="0.8"><circle cx="47.6" cy="153.5" r="2.9"/><circle cx="52.7" cy="151.7" r="2.3"/><circle cx="41.4" cy="154.9" r="2.7"/><circle cx="44.8" cy="162.3" r="1.9"/><circle cx="57.8" cy="160.9" r="1.9"/><circle cx="54.2" cy="160.5" r="2.2"/><circle cx="56.8" cy="162.6" r="2.4"/><circle cx="52.3" cy="147.3" r="3.0"/><circle cx="53.0" cy="163.9" r="2.6"/><circle cx="61.0" cy="151.2" r="2.6"/><circle cx="40.5" cy="150.8" r="2.3"/><circle cx="60.0" cy="159.4" r="2.8"/><circle cx="46.9" cy="143.9" r="2.0"/><circle cx="40.8" cy="155.4" r="3.1"/><circle cx="55.1" cy="150.8" r="2.7"/><circle cx="44.0" cy="150.5" r="1.9"/><circle cx="56.2" cy="159.0" r="2.4"/><circle cx="50.2" cy="160.0" r="2.5"/><circle cx="51.7" cy="144.1" r="1.9"/><circle cx="56.3" cy="148.4" r="3.1"/><circle cx="55.3" cy="152.5" r="2.5"/><circle cx="58.0" cy="151.5" r="2.5"/><circle cx="50.2" cy="154.8" r="2.0"/><circle cx="55.4" cy="157.3" r="2.6"/><circle cx="40.6" cy="148.6" r="2.7"/><circle cx="43.7" cy="161.6" r="2.6"/><circle cx="40.6" cy="150.1" r="2.6"/><circle cx="45.2" cy="159.9" r="2.1"/><circle cx="56.6" cy="151.9" r="3.1"/><circle cx="52.1" cy="153.5" r="2.5"/><circle cx="53.3" cy="160.9" r="1.9"/><circle cx="55.9" cy="144.9" r="2.7"/><circle cx="61.3" cy="147.9" r="2.7"/><circle cx="50.9" cy="152.5" r="1.8"/><circle cx="40.8" cy="158.1" r="2.1"/><circle cx="50.0" cy="152.5" r="2.3"/><circle cx="58.3" cy="147.9" r="2.9"/><circle cx="56.2" cy="153.4" r="1.9"/></g><g fill="#000" opacity="1.0"><rect x="86.6" y="150.4" width="1.7" height="1.7"/><rect x="78.8" y="152.4" width="1.8" height="1.8"/><rect x="76.0" y="158.6" width="0.8" height="0.8"/><rect x="93.9" y="159.9" width="1.1" height="1.1"/><rect x="89.0" y="158.0" width="1.5" height="1.5"/><rect x="94.8" y="152.6" width="1.5" height="1.5"/><rect x="91.0" y="161.9" width="1.4" height="1.4"/><rect x="84.9" y="156.6" width="0.9" height="0.9"/><rect x="90.5" y="160.0" width="1.6" height="1.6"/><rect x="89.4" y="159.5" width="1.4" height="1.4"/><rect x="78.3" y="150.5" width="1.3" height="1.3"/><rect x="87.4" y="153.2" width="1.2" height="1.2"/><rect x="86.0" y="163.9" width="1.0" height="1.0"/><rect x="87.3" y="148.7" width="0.9" height="0.9"/><rect x="78.1" y="153.9" width="1.1" height="1.1"/><rect x="85.5" y="148.4" width="1.5" height="1.5"/><rect x="88.9" y="146.9" width="1.3" height="1.3"/><rect x="93.5" y="148.9" width="1.0" height="1.0"/><rect x="87.6" y="154.1" width="1.1" height="1.1"/><rect x="93.6" y="158.0" width="1.2" height="1.2"/><rect x="82.0" y="160.3" width="1.8" height="1.8"/><rect x="85.1" y="156.8" width="1.1" height="1.1"/><rect x="83.0" y="146.4" width="1.0" height="1.0"/><rect x="88.4" y="153.9" width="1.7" height="1.7"/><rect x="82.6" y="150.0" width="1.4" height="1.4"/><rect x="92.8" y="155.8" width="1.1" height="1.1"/><rect x="94.2" y="159.4" width="1.5" height="1.5"/><rect x="80.8" y="152.7" width="1.5" height="1.5"/><rect x="75.6" y="156.9" width="0.9" height="0.9"/><rect x="85.5" y="152.7" width="1.0" height="1.0"/><rect x="81.3" y="155.6" width="0.9" height="0.9"/><rect x="82.2" y="157.4" width="1.5" height="1.5"/><rect x="86.2" y="159.5" width="1.5" height="1.5"/><rect x="81.3" y="154.6" width="0.9" height="0.9"/><rect x="87.8" y="151.6" width="1.3" height="1.3"/><rect x="80.4" y="153.3" width="1.5" height="1.5"/><rect x="72.3" y="153.3" width="1.1" height="1.1"/><rect x="96.8" y="148.2" width="1.3" height="1.3"/><rect x="90.1" y="158.8" width="0.9" height="0.9"/><rect x="80.7" y="143.8" width="1.4" height="1.4"/><rect x="87.1" y="152.7" width="1.5" height="1.5"/><rect x="86.1" y="150.0" width="1.1" height="1.1"/><rect x="93.7" y="155.8" width="1.5" height="1.5"/><rect x="78.8" y="161.2" width="1.2" height="1.2"/><rect x="83.7" y="147.9" width="1.8" height="1.8"/><rect x="84.5" y="153.2" width="0.9" height="0.9"/><rect x="82.3" y="150.1" width="1.7" height="1.7"/><rect x="84.3" y="149.9" width="1.2" height="1.2"/><rect x="84.7" y="152.5" width="0.8" height="0.8"/><rect x="91.1" y="152.9" width="1.7" height="1.7"/><rect x="80.8" y="151.3" width="1.3" height="1.3"/><rect x="78.7" y="153.6" width="1.2" height="1.2"/><rect x="75.7" y="152.4" width="1.0" height="1.0"/><rect x="83.6" y="160.6" width="1.3" height="1.3"/><rect x="76.0" y="157.7" width="1.0" height="1.0"/><rect x="79.5" y="152.0" width="1.6" height="1.6"/><rect x="81.5" y="142.1" width="1.3" height="1.3"/><rect x="78.2" y="152.6" width="1.1" height="1.1"/><rect x="76.0" y="158.9" width="1.6" height="1.6"/><rect x="73.7" y="154.2" width="1.0" height="1.0"/><rect x="78.7" y="154.8" width="1.1" height="1.1"/><rect x="77.6" y="161.4" width="1.5" height="1.5"/><rect x="86.4" y="157.6" width="1.6" height="1.6"/><rect x="79.1" y="144.9" width="1.4" height="1.4"/><rect x="83.1" y="148.1" width="0.8" height="0.8"/><rect x="83.9" y="154.3" width="1.8" height="1.8"/><rect x="74.7" y="151.5" width="1.8" height="1.8"/><rect x="86.7" y="148.6" width="1.1" height="1.1"/><rect x="94.7" y="160.3" width="1.5" height="1.5"/><rect x="78.3" y="153.5" width="1.1" height="1.1"/><rect x="74.0" y="153.8" width="1.7" height="1.7"/><rect x="78.2" y="155.5" width="1.1" height="1.1"/><rect x="89.4" y="152.3" width="0.9" height="0.9"/><rect x="88.8" y="148.3" width="1.7" height="1.7"/><rect x="90.7" y="148.7" width="1.0" height="1.0"/><rect x="86.0" y="146.8" width="0.9" height="0.9"/><rect x="91.2" y="149.0" width="1.2" height="1.2"/><rect x="80.6" y="150.2" width="0.8" height="0.8"/><rect x="79.7" y="157.0" width="0.8" height="0.8"/><rect x="76.8" y="160.9" width="1.1" height="1.1"/><rect x="80.8" y="144.8" width="1.0" height="1.0"/><rect x="95.4" y="154.2" width="1.4" height="1.4"/><rect x="83.7" y="157.2" width="1.7" height="1.7"/><rect x="89.3" y="150.4" width="1.4" height="1.4"/><rect x="79.5" y="150.4" width="0.8" height="0.8"/><rect x="80.4" y="161.3" width="1.4" height="1.4"/><rect x="81.4" y="152.8" width="1.0" height="1.0"/><rect x="82.3" y="159.3" width="1.2" height="1.2"/><rect x="87.8" y="151.1" width="1.8" height="1.8"/><rect x="85.8" y="165.8" width="1.0" height="1.0"/><rect x="79.2" y="149.7" width="0.8" height="0.8"/><rect x="88.7" y="141.6" width="1.1" height="1.1"/><rect x="86.3" y="145.7" width="1.8" height="1.8"/><rect x="91.5" y="155.1" width="1.0" height="1.0"/><rect x="76.4" y="145.0" width="1.7" height="1.7"/><rect x="78.4" y="151.1" width="1.6" height="1.6"/><rect x="89.3" y="156.1" width="1.6" height="1.6"/><rect x="91.6" y="156.9" width="1.0" height="1.0"/><rect x="88.1" y="153.0" width="0.9" height="0.9"/><rect x="79.9" y="158.1" width="1.3" height="1.3"/><rect x="82.3" y="162.8" width="1.3" height="1.3"/><rect x="89.2" y="152.5" width="1.3" height="1.3"/><rect x="78.3" y="153.2" width="1.7" height="1.7"/><rect x="81.0" y="157.6" width="1.4" height="1.4"/><rect x="79.7" y="150.9" width="0.9" height="0.9"/><rect x="91.5" y="151.3" width="0.9" height="0.9"/><rect x="80.2" y="146.3" width="1.1" height="1.1"/><rect x="78.6" y="164.1" width="1.1" height="1.1"/><rect x="80.4" y="158.1" width="0.9" height="0.9"/><rect x="79.6" y="144.8" width="1.2" height="1.2"/><rect x="80.8" y="155.6" width="1.6" height="1.6"/><rect x="72.3" y="156.3" width="1.2" height="1.2"/><rect x="84.8" y="151.4" width="1.0" height="1.0"/><rect x="95.3" y="150.6" width="1.5" height="1.5"/><rect x="77.1" y="153.1" width="1.0" height="1.0"/><rect x="89.7" y="161.3" width="1.5" height="1.5"/><rect x="84.4" y="162.3" width="0.9" height="0.9"/><rect x="81.7" y="150.4" width="1.3" height="1.3"/><rect x="81.5" y="160.6" width="0.9" height="0.9"/><rect x="75.4" y="153.9" width="0.9" height="0.9"/><rect x="81.2" y="162.1" width="1.3" height="1.3"/><rect x="76.0" y="145.4" width="1.4" height="1.4"/><rect x="86.3" y="159.9" width="1.6" height="1.6"/><rect x="74.3" y="148.6" width="1.2" height="1.2"/><rect x="89.5" y="144.5" width="0.9" height="0.9"/><rect x="83.6" y="151.9" width="1.8" height="1.8"/><rect x="96.1" y="151.2" width="1.1" height="1.1"/><rect x="87.5" y="149.7" width="1.6" height="1.6"/><rect x="83.8" y="152.8" width="1.7" height="1.7"/><rect x="72.7" y="157.5" width="1.5" height="1.5"/><rect x="71.4" y="150.4" width="1.0" height="1.0"/><rect x="90.1" y="149.5" width="0.8" height="0.8"/><rect x="83.7" y="155.1" width="0.9" height="0.9"/><rect x="82.5" y="150.7" width="0.9" height="0.9"/><rect x="83.5" y="158.1" width="1.7" height="1.7"/><rect x="92.5" y="152.6" width="1.6" height="1.6"/><rect x="89.2" y="143.2" width="1.0" height="1.0"/><rect x="75.9" y="150.1" width="1.7" height="1.7"/><rect x="91.7" y="160.9" width="1.3" height="1.3"/><rect x="86.7" y="146.0" width="1.0" height="1.0"/><rect x="90.5" y="151.6" width="1.6" height="1.6"/><rect x="87.6" y="148.7" width="1.5" height="1.5"/><rect x="81.0" y="155.8" width="1.0" height="1.0"/><rect x="91.4" y="151.2" width="1.3" height="1.3"/><rect x="83.4" y="153.0" width="1.6" height="1.6"/><rect x="82.0" y="156.5" width="1.1" height="1.1"/><rect x="83.9" y="143.5" width="1.2" height="1.2"/><rect x="81.0" y="152.4" width="1.7" height="1.7"/><rect x="76.8" y="154.4" width="1.6" height="1.6"/><rect x="88.6" y="162.9" width="1.1" height="1.1"/><rect x="86.2" y="150.3" width="1.1" height="1.1"/><rect x="79.7" y="147.4" width="1.2" height="1.2"/><rect x="80.7" y="150.8" width="1.2" height="1.2"/><rect x="97.5" y="153.1" width="1.0" height="1.0"/><rect x="89.3" y="145.8" width="1.4" height="1.4"/><rect x="82.5" y="150.6" width="1.6" height="1.6"/><rect x="81.4" y="165.5" width="1.6" height="1.6"/><rect x="79.4" y="142.3" width="1.2" height="1.2"/><rect x="86.2" y="155.8" width="1.2" height="1.2"/><rect x="81.0" y="152.8" width="1.0" height="1.0"/><rect x="89.6" y="148.2" width="0.9" height="0.9"/><rect x="88.8" y="160.8" width="1.0" height="1.0"/><rect x="76.4" y="154.3" width="1.2" height="1.2"/><rect x="71.7" y="152.7" width="0.8" height="0.8"/><rect x="89.2" y="151.2" width="0.8" height="0.8"/><rect x="86.0" y="144.6" width="1.3" height="1.3"/><rect x="87.5" y="164.1" width="1.1" height="1.1"/><rect x="84.3" y="148.4" width="1.4" height="1.4"/><rect x="81.0" y="148.0" width="1.3" height="1.3"/><rect x="94.2" y="156.7" width="1.5" height="1.5"/><rect x="90.1" y="159.8" width="1.5" height="1.5"/><rect x="95.8" y="160.4" width="1.7" height="1.7"/><rect x="90.0" y="154.5" width="0.9" height="0.9"/><rect x="84.9" y="155.8" width="1.3" height="1.3"/><rect x="85.0" y="158.5" width="1.3" height="1.3"/><rect x="76.5" y="161.3" width="1.5" height="1.5"/><rect x="88.8" y="156.0" width="0.8" height="0.8"/><rect x="83.4" y="155.7" width="1.5" height="1.5"/><rect x="85.5" y="154.7" width="1.6" height="1.6"/><rect x="80.3" y="156.5" width="0.9" height="0.9"/><rect x="92.9" y="150.5" width="1.2" height="1.2"/><rect x="73.9" y="157.3" width="1.6" height="1.6"/><rect x="80.7" y="153.6" width="1.2" height="1.2"/><rect x="90.6" y="148.8" width="1.5" height="1.5"/><rect x="77.8" y="150.4" width="1.4" height="1.4"/><rect x="85.3" y="161.3" width="1.7" height="1.7"/><rect x="90.9" y="156.0" width="1.7" height="1.7"/><rect x="86.1" y="152.9" width="1.4" height="1.4"/><rect x="75.9" y="143.8" width="1.3" height="1.3"/><rect x="89.0" y="157.0" width="1.5" height="1.5"/><rect x="84.4" y="148.6" width="1.4" height="1.4"/><rect x="79.3" y="145.1" width="0.8" height="0.8"/><rect x="79.2" y="155.1" width="1.4" height="1.4"/><rect x="83.1" y="155.9" width="1.5" height="1.5"/><rect x="82.2" y="164.2" width="1.1" height="1.1"/><rect x="72.8" y="149.6" width="0.9" height="0.9"/><rect x="84.7" y="150.6" width="1.8" height="1.8"/><rect x="96.1" y="154.6" width="1.2" height="1.2"/><rect x="88.0" y="158.9" width="1.3" height="1.3"/><rect x="81.9" y="154.7" width="1.3" height="1.3"/><rect x="79.4" y="157.7" width="1.0" height="1.0"/><rect x="91.1" y="151.9" width="1.5" height="1.5"/><rect x="88.5" y="147.4" width="1.6" height="1.6"/><rect x="84.4" y="156.1" width="0.8" height="0.8"/><rect x="87.2" y="159.7" width="1.6" height="1.6"/><rect x="84.3" y="156.7" width="1.3" height="1.3"/><rect x="89.1" y="150.1" width="1.4" height="1.4"/><rect x="83.4" y="153.9" width="1.2" height="1.2"/><rect x="90.1" y="150.2" width="1.4" height="1.4"/><rect x="84.4" y="150.7" width="1.7" height="1.7"/><rect x="89.6" y="156.5" width="1.5" height="1.5"/><rect x="91.7" y="153.8" width="0.9" height="0.9"/><rect x="83.8" y="153.2" width="0.9" height="0.9"/><rect x="85.5" y="155.6" width="0.9" height="0.9"/><rect x="87.9" y="160.4" width="0.9" height="0.9"/><rect x="88.1" y="146.9" width="1.0" height="1.0"/><rect x="85.8" y="165.4" width="0.8" height="0.8"/><rect x="84.8" y="150.1" width="1.8" height="1.8"/><rect x="77.1" y="157.8" width="1.7" height="1.7"/><rect x="87.1" y="154.4" width="1.5" height="1.5"/><rect x="75.5" y="147.6" width="1.1" height="1.1"/><rect x="80.5" y="153.1" width="1.2" height="1.2"/><rect x="83.2" y="161.5" width="1.1" height="1.1"/><rect x="83.4" y="162.2" width="0.9" height="0.9"/><rect x="87.6" y="145.8" width="1.0" height="1.0"/><rect x="91.3" y="158.1" width="1.3" height="1.3"/><rect x="83.7" y="146.8" width="1.2" height="1.2"/><rect x="89.4" y="149.8" width="1.8" height="1.8"/><rect x="90.1" y="151.3" width="1.6" height="1.6"/><rect x="81.4" y="150.2" width="1.8" height="1.8"/><rect x="77.4" y="143.5" width="1.4" height="1.4"/><rect x="97.3" y="159.2" width="1.0" height="1.0"/><rect x="84.4" y="162.0" width="1.0" height="1.0"/><rect x="74.2" y="155.4" width="0.9" height="0.9"/><rect x="83.2" y="150.4" width="1.3" height="1.3"/><rect x="78.7" y="145.0" width="0.8" height="0.8"/><rect x="79.3" y="157.3" width="1.2" height="1.2"/><rect x="81.2" y="142.9" width="1.5" height="1.5"/><rect x="77.6" y="157.9" width="1.3" height="1.3"/><rect x="96.8" y="150.5" width="1.8" height="1.8"/><rect x="71.9" y="155.7" width="1.0" height="1.0"/><rect x="84.5" y="142.7" width="1.8" height="1.8"/><rect x="83.6" y="164.4" width="1.3" height="1.3"/><rect x="82.4" y="158.8" width="1.6" height="1.6"/><rect x="92.4" y="142.5" width="1.5" height="1.5"/><rect x="87.0" y="156.3" width="1.4" height="1.4"/><rect x="86.5" y="158.7" width="0.9" height="0.9"/><rect x="91.3" y="161.5" width="1.0" height="1.0"/><rect x="88.6" y="148.3" width="1.7" height="1.7"/><rect x="83.2" y="157.9" width="1.2" height="1.2"/><rect x="92.5" y="153.5" width="1.2" height="1.2"/><rect x="98.9" y="154.0" width="1.2" height="1.2"/><rect x="85.7" y="157.9" width="0.8" height="0.8"/><rect x="93.9" y="159.0" width="1.4" height="1.4"/><rect x="79.7" y="152.9" width="1.1" height="1.1"/><rect x="91.6" y="151.8" width="1.8" height="1.8"/><rect x="87.7" y="150.8" width="1.7" height="1.7"/><rect x="95.9" y="154.3" width="1.6" height="1.6"/><rect x="82.0" y="145.3" width="1.6" height="1.6"/><rect x="89.9" y="159.7" width="1.1" height="1.1"/><rect x="81.3" y="155.5" width="1.5" height="1.5"/><rect x="74.1" y="148.0" width="1.4" height="1.4"/><rect x="88.5" y="145.2" width="1.1" height="1.1"/><rect x="91.1" y="150.3" width="0.9" height="0.9"/><rect x="79.5" y="161.8" width="1.7" height="1.7"/><rect x="78.7" y="145.4" width="1.8" height="1.8"/><rect x="86.3" y="146.0" width="1.3" height="1.3"/><rect x="85.4" y="147.3" width="0.9" height="0.9"/><rect x="75.7" y="144.9" width="1.0" height="1.0"/><rect x="87.6" y="155.5" width="1.3" height="1.3"/><rect x="92.6" y="152.9" width="1.6" height="1.6"/><rect x="82.1" y="150.0" width="1.8" height="1.8"/><rect x="86.3" y="155.3" width="1.3" height="1.3"/><rect x="93.0" y="153.8" width="1.2" height="1.2"/><rect x="91.9" y="151.1" width="1.7" height="1.7"/><rect x="86.7" y="144.5" width="1.0" height="1.0"/><rect x="82.3" y="160.1" width="1.2" height="1.2"/><rect x="79.9" y="146.9" width="1.1" height="1.1"/><rect x="86.9" y="158.6" width="0.8" height="0.8"/><rect x="87.0" y="154.2" width="1.2" height="1.2"/><rect x="90.6" y="144.4" width="1.8" height="1.8"/><rect x="89.8" y="145.6" width="1.4" height="1.4"/><rect x="91.9" y="153.5" width="1.1" height="1.1"/><rect x="83.1" y="151.4" width="1.3" height="1.3"/><rect x="79.2" y="158.3" width="1.2" height="1.2"/><rect x="94.1" y="159.3" width="1.6" height="1.6"/><rect x="82.2" y="151.1" width="1.4" height="1.4"/><rect x="85.1" y="151.0" width="1.7" height="1.7"/><rect x="82.1" y="148.5" width="1.7" height="1.7"/><rect x="85.1" y="161.5" width="1.2" height="1.2"/></g><g fill="none" stroke="#000" stroke-width="0.8"><circle cx="117.0" cy="163.2" r="1.9"/><circle cx="115.6" cy="160.8" r="2.3"/><circle cx="109.3" cy="148.3" r="1.9"/><circle cx="122.1" cy="152.9" r="1.8"/><circle cx="110.2" cy="149.6" r="2.3"/><circle cx="114.0" cy="147.1" r="1.9"/><circle cx="110.0" cy="150.9" r="2.3"/><circle cx="126.9" cy="153.6" r="2.2"/><circle cx="130.1" cy="157.0" r="1.3"/><circle cx="113.5" cy="144.2" r="1.5"/><circle cx="115.7" cy="156.9" r="2.0"/><circle cx="110.7" cy="151.3" r="1.6"/><circle cx="109.8" cy="146.8" r="2.1"/><circle cx="125.8" cy="151.2" r="1.8"/><circle cx="114.6" cy="157.7" r="2.1"/><circle cx="124.1" cy="161.1" r="2.1"/><circle cx="121.5" cy="152.3" r="1.6"/><circle cx="108.2" cy="153.5" r="1.4"/><circle cx="124.2" cy="146.5" r="1.9"/><circle cx="122.8" cy="151.6" r="1.6"/><circle cx="122.5" cy="156.7" r="1.6"/><circle cx="117.2" cy="144.1" r="1.4"/><circle cx="122.8" cy="144.8" r="1.4"/><circle cx="124.7" cy="143.0" r="1.5"/><circle cx="130.2" cy="148.9" r="1.5"/><circle cx="131.4" cy="153.1" r="2.2"/><circle cx="128.7" cy="159.1" r="2.1"/><circle cx="112.6" cy="144.7" r="2.3"/><circle cx="114.8" cy="162.8" r="2.3"/><circle cx="116.1" cy="162.3" r="2.0"/><circle cx="125.3" cy="145.5" r="1.6"/><circle cx="119.9" cy="162.0" r="1.4"/><circle cx="127.3" cy="144.1" r="1.5"/><circle cx="116.7" cy="143.5" r="1.4"/><circle cx="121.9" cy="142.5" r="1.6"/><circle cx="125.3" cy="156.7" r="2.1"/><circle cx="109.2" cy="155.3" r="1.4"/><circle cx="125.7" cy="157.5" r="2.2"/><circle cx="121.7" cy="155.8" r="2.1"/><circle cx="128.4" cy="158.4" r="1.4"/><circle cx="120.2" cy="162.9" r="2.2"/><circle cx="113.1" cy="157.4" r="1.3"/><circle cx="116.8" cy="158.1" r="2.1"/><circle cx="117.6" cy="142.5" r="1.8"/><circle cx="118.6" cy="148.9" r="1.7"/></g><g fill="#000" opacity="1.0"><rect x="118.6" y="158.1" width="1.4" height="1.4"/><rect x="121.3" y="158.6" width="1.0" height="1.0"/><rect x="126.1" y="146.0" width="1.2" height="1.2"/><rect x="126.6" y="150.4" width="1.3" height="1.3"/><rect x="123.2" y="149.2" width="1.0" height="1.0"/><rect x="126.1" y="157.6" width="1.5" height="1.5"/><rect x="123.8" y="158.8" width="1.7" height="1.7"/><rect x="113.7" y="153.8" width="1.5" height="1.5"/><rect x="124.9" y="149.0" width="0.8" height="0.8"/><rect x="113.0" y="144.9" width="1.6" height="1.6"/><rect x="117.0" y="148.3" width="1.2" height="1.2"/><rect x="118.3" y="159.9" width="1.2" height="1.2"/><rect x="126.6" y="149.7" width="1.6" height="1.6"/><rect x="132.5" y="155.0" width="1.5" height="1.5"/><rect x="111.4" y="161.7" width="0.9" height="0.9"/><rect x="120.1" y="145.7" width="1.1" height="1.1"/><rect x="123.8" y="164.0" width="1.4" height="1.4"/><rect x="121.1" y="159.2" width="1.1" height="1.1"/><rect x="128.7" y="149.9" width="1.1" height="1.1"/><rect x="121.9" y="154.5" width="1.2" height="1.2"/><rect x="113.9" y="149.5" width="1.7" height="1.7"/><rect x="114.8" y="156.1" width="1.1" height="1.1"/><rect x="113.2" y="148.6" width="1.1" height="1.1"/><rect x="120.0" y="158.7" width="1.2" height="1.2"/><rect x="115.9" y="151.3" width="0.8" height="0.8"/><rect x="123.2" y="158.0" width="1.5" height="1.5"/><rect x="123.7" y="149.9" width="1.5" height="1.5"/><rect x="112.5" y="155.9" width="1.2" height="1.2"/><rect x="122.3" y="153.6" width="1.4" height="1.4"/><rect x="117.6" y="147.1" width="1.6" height="1.6"/><rect x="122.3" y="148.0" width="0.8" height="0.8"/><rect x="111.1" y="149.9" width="0.9" height="0.9"/><rect x="127.2" y="155.0" width="0.8" height="0.8"/><rect x="119.2" y="143.9" width="1.0" height="1.0"/><rect x="115.5" y="154.6" width="0.9" height="0.9"/><rect x="125.0" y="163.9" width="1.2" height="1.2"/><rect x="118.7" y="147.1" width="1.5" height="1.5"/><rect x="112.2" y="147.6" width="1.1" height="1.1"/><rect x="116.1" y="151.4" width="1.7" height="1.7"/><rect x="116.2" y="145.9" width="1.3" height="1.3"/><rect x="124.7" y="156.5" width="0.9" height="0.9"/><rect x="120.6" y="152.1" width="1.1" height="1.1"/><rect x="127.7" y="144.7" width="1.4" height="1.4"/><rect x="118.5" y="157.5" width="1.4" height="1.4"/><rect x="116.9" y="162.9" width="1.1" height="1.1"/><rect x="120.6" y="144.5" width="1.5" height="1.5"/><rect x="126.3" y="152.4" width="1.7" height="1.7"/><rect x="128.0" y="154.5" width="1.1" height="1.1"/><rect x="120.7" y="147.4" width="0.9" height="0.9"/><rect x="121.7" y="145.0" width="1.4" height="1.4"/><rect x="118.2" y="153.1" width="1.5" height="1.5"/><rect x="121.5" y="160.2" width="0.7" height="0.7"/><rect x="119.5" y="162.6" width="1.5" height="1.5"/><rect x="115.4" y="147.7" width="1.4" height="1.4"/><rect x="117.8" y="149.1" width="1.2" height="1.2"/><rect x="111.4" y="146.9" width="0.9" height="0.9"/><rect x="117.8" y="158.5" width="0.8" height="0.8"/><rect x="113.9" y="161.6" width="1.3" height="1.3"/><rect x="124.9" y="162.3" width="0.8" height="0.8"/><rect x="120.0" y="149.3" width="0.8" height="0.8"/><rect x="119.9" y="160.8" width="1.0" height="1.0"/><rect x="117.7" y="163.6" width="1.4" height="1.4"/><rect x="115.4" y="151.1" width="1.6" height="1.6"/><rect x="121.0" y="152.7" width="1.0" height="1.0"/><rect x="118.1" y="156.9" width="1.1" height="1.1"/><rect x="121.1" y="152.1" width="1.5" height="1.5"/><rect x="119.6" y="154.0" width="1.6" height="1.6"/><rect x="119.4" y="157.4" width="0.8" height="0.8"/><rect x="117.8" y="155.4" width="0.9" height="0.9"/></g><defs><linearGradient id="sph" x1="0" y1="0" x2="0" y2="1"><stop offset="0" stop-color="#111"/><stop offset="0.5" stop-color="#333"/><stop offset="1" stop-color="#aaa"/></linearGradient></defs><circle cx="153" cy="153" r="14" fill="url(#sph)"/><g fill="#fff" opacity="0.6"><rect x="153.0" y="157.6" width="1.4" height="1.4"/><rect x="150.1" y="156.8" width="1.8" height="1.8"/><rect x="151.9" y="144.2" width="2.0" height="2.0"/><rect x="155.3" y="142.8" width="1.5" height="1.5"/><rect x="150.9" y="153.2" width="2.0" height="2.0"/><rect x="150.1" y="148.0" width="2.0" height="2.0"/><rect x="154.7" y="148.8" width="1.7" height="1.7"/><rect x="153.7" y="157.3" width="1.9" height="1.9"/><rect x="148.0" y="155.7" width="1.7" height="1.7"/><rect x="156.4" y="157.4" width="1.4" height="1.4"/><rect x="158.2" y="149.5" width="1.8" height="1.8"/><rect x="159.1" y="151.3" width="1.0" height="1.0"/><rect x="158.2" y="155.9" width="1.1" height="1.1"/><rect x="154.0" y="147.0" width="1.6" height="1.6"/><rect x="155.7" y="147.3" width="1.2" height="1.2"/><rect x="153.8" y="143.2" width="2.0" height="2.0"/><rect x="149.0" y="155.4" width="2.0" height="2.0"/><rect x="146.4" y="158.2" width="2.0" height="2.0"/><rect x="155.7" y="157.0" width="2.0" height="2.0"/><rect x="161.2" y="156.2" width="1.8" height="1.8"/><rect x="153.0" y="142.2" width="1.0" height="1.0"/><rect x="156.7" y="149.2" width="1.8" height="1.8"/><rect x="151.9" y="144.4" width="1.7" height="1.7"/><rect x="144.2" y="154.6" width="1.0" height="1.0"/><rect x="159.8" y="147.5" width="1.9" height="1.9"/><rect x="142.4" y="151.6" width="1.3" height="1.3"/><rect x="151.2" y="149.6" width="1.5" height="1.5"/><rect x="162.8" y="154.4" width="1.7" height="1.7"/><rect x="142.4" y="154.5" width="2.0" height="2.0"/><rect x="156.3" y="149.2" width="1.7" height="1.7"/><rect x="151.7" y="142.3" width="0.9" height="0.9"/><rect x="160.1" y="147.0" width="1.6" height="1.6"/><rect x="155.5" y="145.2" width="0.9" height="0.9"/><rect x="158.5" y="147.6" width="0.9" height="0.9"/><rect x="160.8" y="157.6" width="1.8" height="1.8"/><rect x="154.1" y="153.7" width="2.0" height="2.0"/><rect x="148.3" y="143.4" width="1.1" height="1.1"/><rect x="143.0" y="155.0" width="0.9" height="0.9"/><rect x="150.5" y="151.2" width="2.1" height="2.1"/><rect x="162.3" y="156.0" width="1.9" height="1.9"/><rect x="152.7" y="148.0" width="1.7" height="1.7"/><rect x="144.6" y="150.3" width="1.1" height="1.1"/><rect x="142.3" y="149.3" width="1.1" height="1.1"/><rect x="158.5" y="145.4" width="1.2" height="1.2"/><rect x="153.6" y="156.8" width="1.7" height="1.7"/><rect x="142.8" y="146.0" width="1.5" height="1.5"/><rect x="141.1" y="149.2" width="1.2" height="1.2"/><rect x="159.8" y="150.6" width="1.3" height="1.3"/><rect x="158.5" y="154.5" width="0.9" height="0.9"/><rect x="160.3" y="146.7" width="2.0" height="2.0"/><rect x="149.7" y="141.9" width="1.8" height="1.8"/><rect x="149.7" y="158.1" width="1.1" height="1.1"/><rect x="144.3" y="147.4" width="1.8" height="1.8"/><rect x="156.5" y="155.1" width="1.9" height="1.9"/><rect x="157.0" y="140.7" width="1.0" height="1.0"/><rect x="154.0" y="153.2" width="1.8" height="1.8"/><rect x="152.7" y="142.0" width="1.8" height="1.8"/><rect x="144.0" y="149.3" width="2.0" height="2.0"/><rect x="147.2" y="143.5" width="1.6" height="1.6"/><rect x="142.6" y="150.3" width="1.6" height="1.6"/></g><g fill="#000" opacity="1.0"><rect x="22.1" y="188.1" width="1.3" height="1.3"/><rect x="8.8" y="187.1" width="1.2" height="1.2"/><rect x="11.3" y="187.7" width="1.3" height="1.3"/><rect x="20.0" y="184.7" width="0.9" height="0.9"/><rect x="15.7" y="181.1" width="1.3" height="1.3"/><rect x="11.4" y="182.9" width="1.1" height="1.1"/><rect x="22.3" y="183.8" width="1.4" height="1.4"/><rect x="15.9" y="186.2" width="1.8" height="1.8"/><rect x="19.7" y="182.5" width="1.1" height="1.1"/><rect x="13.0" y="178.2" width="1.4" height="1.4"/><rect x="13.1" y="186.9" width="1.7" height="1.7"/><rect x="26.0" y="179.0" width="1.0" height="1.0"/><rect x="15.3" y="180.7" width="1.0" height="1.0"/><rect x="27.5" y="187.4" width="0.9" height="0.9"/><rect x="20.8" y="179.5" width="1.4" height="1.4"/><rect x="14.6" y="183.8" width="1.5" height="1.5"/><rect x="12.3" y="186.4" width="1.9" height="1.9"/><rect x="16.6" y="183.0" width="1.1" height="1.1"/><rect x="12.0" y="189.4" width="1.2" height="1.2"/><rect x="5.1" y="187.7" width="1.0" height="1.0"/><rect x="15.8" y="181.5" width="1.9" height="1.9"/><rect x="23.0" y="183.9" width="1.5" height="1.5"/><rect x="22.5" y="187.6" width="1.5" height="1.5"/><rect x="12.9" y="182.2" width="0.9" height="0.9"/><rect x="23.4" y="188.6" width="1.0" height="1.0"/><rect x="13.6" y="190.2" width="1.8" height="1.8"/><rect x="11.7" y="184.7" width="1.5" height="1.5"/><rect x="15.0" y="191.9" width="1.0" height="1.0"/><rect x="16.4" y="189.3" width="1.9" height="1.9"/><rect x="19.3" y="187.3" width="1.0" height="1.0"/><rect x="18.4" y="188.5" width="1.3" height="1.3"/><rect x="17.4" y="180.9" width="1.4" height="1.4"/><rect x="7.4" y="189.2" width="1.9" height="1.9"/><rect x="6.5" y="184.0" width="1.3" height="1.3"/><rect x="16.5" y="187.1" width="1.8" height="1.8"/><rect x="10.1" y="189.8" width="1.4" height="1.4"/><rect x="12.3" y="184.5" width="1.0" height="1.0"/><rect x="11.5" y="190.2" width="1.4" height="1.4"/><rect x="28.0" y="185.1" width="1.3" height="1.3"/><rect x="21.9" y="186.3" width="1.1" height="1.1"/><rect x="20.9" y="180.5" width="1.2" height="1.2"/><rect x="17.1" y="188.3" width="1.2" height="1.2"/><rect x="10.0" y="190.8" width="1.7" height="1.7"/><rect x="15.0" y="183.4" width="0.9" height="0.9"/><rect x="19.8" y="187.7" width="1.4" height="1.4"/><rect x="21.1" y="180.2" width="1.3" height="1.3"/><rect x="17.1" y="181.3" width="0.9" height="0.9"/><rect x="22.3" y="184.7" width="1.8" height="1.8"/><rect x="24.5" y="188.9" width="1.2" height="1.2"/><rect x="21.5" y="182.8" width="1.0" height="1.0"/><rect x="21.0" y="191.9" width="1.9" height="1.9"/><rect x="10.4" y="180.3" width="1.2" height="1.2"/><rect x="16.6" y="186.7" width="1.9" height="1.9"/><rect x="26.3" y="186.5" width="1.2" height="1.2"/><rect x="19.9" y="188.9" width="1.9" height="1.9"/><rect x="17.1" y="187.4" width="1.5" height="1.5"/><rect x="12.4" y="181.0" width="1.0" height="1.0"/><rect x="19.4" y="183.6" width="1.0" height="1.0"/><rect x="17.4" y="189.8" width="1.4" height="1.4"/><rect x="6.4" y="182.9" width="1.8" height="1.8"/><rect x="15.0" y="185.2" width="1.8" height="1.8"/><rect x="23.1" y="185.4" width="1.0" height="1.0"/><rect x="7.2" y="180.8" width="1.0" height="1.0"/><rect x="13.2" y="192.5" width="1.6" height="1.6"/><rect x="25.3" y="188.8" width="1.7" height="1.7"/><rect x="13.6" y="186.3" width="1.6" height="1.6"/><rect x="15.4" y="186.9" width="1.0" height="1.0"/><rect x="14.0" y="186.2" width="1.3" height="1.3"/><rect x="8.6" y="183.4" width="1.3" height="1.3"/><rect x="17.9" y="183.4" width="1.2" height="1.2"/><rect x="29.8" y="181.7" width="1.9" height="1.9"/><rect x="17.8" y="180.1" width="1.7" height="1.7"/><rect x="13.9" y="184.1" width="1.1" height="1.1"/><rect x="13.9" y="188.7" width="1.4" height="1.4"/><rect x="25.8" y="188.7" width="1.7" height="1.7"/><rect x="15.4" y="187.0" width="1.7" height="1.7"/><rect x="14.6" y="181.4" width="1.2" height="1.2"/><rect x="24.5" y="191.2" width="1.4" height="1.4"/><rect x="19.4" y="181.6" width="1.2" height="1.2"/><rect x="5.5" y="184.4" width="1.8" height="1.8"/><rect x="10.5" y="189.9" width="1.3" height="1.3"/><rect x="24.6" y="179.8" width="1.5" height="1.5"/><rect x="13.4" y="187.4" width="1.8" height="1.8"/><rect x="18.9" y="181.8" width="0.9" height="0.9"/><rect x="29.4" y="186.8" width="1.4" height="1.4"/><rect x="8.8" y="183.3" width="1.3" height="1.3"/><rect x="14.2" y="184.4" width="1.9" height="1.9"/><rect x="20.1" y="186.3" width="1.6" height="1.6"/><rect x="9.0" y="179.4" width="1.6" height="1.6"/><rect x="19.1" y="184.5" width="0.9" height="0.9"/><rect x="18.0" y="191.9" width="1.0" height="1.0"/><rect x="5.2" y="183.7" width="1.0" height="1.0"/><rect x="16.9" y="181.0" width="1.4" height="1.4"/><rect x="19.2" y="179.1" width="1.2" height="1.2"/><rect x="16.1" y="180.4" width="1.7" height="1.7"/><rect x="13.9" y="181.0" width="1.5" height="1.5"/><rect x="19.9" y="180.4" width="1.9" height="1.9"/><rect x="15.2" y="180.5" width="1.8" height="1.8"/><rect x="20.8" y="187.9" width="1.6" height="1.6"/><rect x="20.0" y="181.5" width="2.0" height="2.0"/><rect x="15.7" y="184.0" width="1.0" height="1.0"/><rect x="25.1" y="187.4" width="1.2" height="1.2"/><rect x="16.5" y="189.3" width="0.9" height="0.9"/><rect x="28.2" y="180.9" width="1.5" height="1.5"/><rect x="11.4" y="186.2" width="1.5" height="1.5"/><rect x="27.8" y="183.2" width="1.8" height="1.8"/><rect x="20.2" y="185.9" width="1.2" height="1.2"/><rect x="22.1" y="188.0" width="1.9" height="1.9"/><rect x="17.9" y="187.8" width="0.9" height="0.9"/><rect x="16.6" y="186.3" width="1.4" height="1.4"/><rect x="13.7" y="190.7" width="1.5" height="1.5"/><rect x="12.2" y="183.1" width="1.7" height="1.7"/><rect x="12.9" y="179.1" width="1.4" height="1.4"/><rect x="11.4" y="185.7" width="0.9" height="0.9"/><rect x="7.5" y="186.2" width="1.0" height="1.0"/><rect x="24.8" y="179.1" width="1.4" height="1.4"/><rect x="19.5" y="187.8" width="1.7" height="1.7"/><rect x="20.4" y="184.8" width="0.8" height="0.8"/><rect x="13.1" y="188.0" width="1.5" height="1.5"/><rect x="27.3" y="190.0" width="1.2" height="1.2"/><rect x="22.3" y="183.1" width="1.2" height="1.2"/><rect x="5.9" y="181.0" width="0.9" height="0.9"/><rect x="6.0" y="183.3" width="1.9" height="1.9"/><rect x="20.0" y="184.3" width="1.3" height="1.3"/><rect x="25.7" y="185.0" width="1.9" height="1.9"/><rect x="17.0" y="185.9" width="1.9" height="1.9"/><rect x="16.2" y="190.1" width="1.2" height="1.2"/><rect x="16.5" y="192.4" width="0.9" height="0.9"/><rect x="16.8" y="188.8" width="1.5" height="1.5"/><rect x="17.9" y="191.3" width="1.6" height="1.6"/><rect x="26.7" y="187.7" width="1.2" height="1.2"/><rect x="18.7" y="186.3" width="2.0" height="2.0"/><rect x="19.4" y="180.8" width="1.7" height="1.7"/><rect x="11.5" y="184.3" width="1.4" height="1.4"/><rect x="28.3" y="184.2" width="1.6" height="1.6"/><rect x="21.0" y="181.6" width="1.5" height="1.5"/><rect x="19.7" y="182.8" width="1.8" height="1.8"/><rect x="25.6" y="185.8" width="1.5" height="1.5"/><rect x="12.8" y="186.0" width="1.3" height="1.3"/><rect x="10.8" y="182.7" width="0.8" height="0.8"/><rect x="26.3" y="188.5" width="1.0" height="1.0"/><rect x="16.6" y="192.3" width="1.8" height="1.8"/><rect x="20.2" y="183.3" width="0.8" height="0.8"/><rect x="17.3" y="179.6" width="1.2" height="1.2"/><rect x="24.4" y="185.5" width="1.1" height="1.1"/><rect x="17.7" y="186.5" width="1.6" height="1.6"/><rect x="20.9" y="186.8" width="1.3" height="1.3"/><rect x="23.2" y="184.7" width="1.2" height="1.2"/><rect x="12.9" y="185.4" width="1.3" height="1.3"/><rect x="15.1" y="181.6" width="1.7" height="1.7"/><rect x="18.3" y="186.7" width="1.5" height="1.5"/><rect x="26.2" y="189.1" width="1.6" height="1.6"/><rect x="14.5" y="186.5" width="1.5" height="1.5"/><rect x="17.4" y="180.5" width="1.4" height="1.4"/><rect x="13.2" y="180.0" width="1.3" height="1.3"/><rect x="20.1" y="189.1" width="1.5" height="1.5"/><rect x="11.1" y="183.8" width="1.1" height="1.1"/><rect x="9.2" y="180.2" width="1.1" height="1.1"/><rect x="7.6" y="187.3" width="1.8" height="1.8"/><rect x="18.9" y="188.5" width="1.9" height="1.9"/><rect x="22.5" y="186.4" width="1.4" height="1.4"/><rect x="16.7" y="179.4" width="1.9" height="1.9"/><rect x="16.8" y="184.8" width="0.9" height="0.9"/><rect x="24.2" y="186.0" width="0.9" height="0.9"/><rect x="7.2" y="184.1" width="1.1" height="1.1"/><rect x="21.5" y="181.8" width="1.9" height="1.9"/><rect x="10.9" y="189.3" width="1.4" height="1.4"/><rect x="16.0" y="191.9" width="0.8" height="0.8"/><rect x="17.0" y="188.5" width="1.8" height="1.8"/><rect x="15.1" y="185.0" width="1.2" height="1.2"/><rect x="7.2" y="180.4" width="1.0" height="1.0"/><rect x="18.3" y="181.1" width="1.4" height="1.4"/><rect x="10.4" y="187.0" width="1.9" height="1.9"/><rect x="16.0" y="178.8" width="1.0" height="1.0"/><rect x="29.9" y="186.7" width="1.6" height="1.6"/><rect x="12.9" y="182.5" width="1.1" height="1.1"/><rect x="24.6" y="182.6" width="0.9" height="0.9"/><rect x="13.5" y="188.1" width="0.9" height="0.9"/><rect x="17.3" y="184.7" width="1.3" height="1.3"/><rect x="25.6" y="189.2" width="1.7" height="1.7"/><rect x="20.0" y="178.1" width="1.0" height="1.0"/><rect x="20.1" y="185.1" width="1.8" height="1.8"/><rect x="21.0" y="180.8" width="1.1" height="1.1"/><rect x="19.2" y="183.4" width="1.2" height="1.2"/><rect x="6.7" y="188.5" width="1.7" height="1.7"/><rect x="19.8" y="184.6" width="1.7" height="1.7"/><rect x="17.9" y="188.5" width="1.2" height="1.2"/><rect x="19.5" y="184.9" width="1.3" height="1.3"/><rect x="6.1" y="185.2" width="1.4" height="1.4"/><rect x="17.7" y="181.4" width="1.3" height="1.3"/><rect x="16.6" y="178.8" width="1.8" height="1.8"/><rect x="12.1" y="192.2" width="1.7" height="1.7"/><rect x="10.6" y="183.2" width="1.5" height="1.5"/><rect x="19.8" y="185.8" width="1.2" height="1.2"/><rect x="18.6" y="185.9" width="1.6" height="1.6"/><rect x="15.9" y="179.5" width="1.1" height="1.1"/><rect x="14.7" y="177.6" width="1.5" height="1.5"/><rect x="18.3" y="190.1" width="1.3" height="1.3"/><rect x="16.5" y="187.3" width="1.8" height="1.8"/><rect x="19.6" y="187.8" width="1.4" height="1.4"/><rect x="22.5" y="186.2" width="1.4" height="1.4"/><rect x="8.2" y="182.3" width="1.5" height="1.5"/><rect x="18.5" y="181.3" width="0.8" height="0.8"/><rect x="29.3" y="184.1" width="1.0" height="1.0"/><rect x="20.8" y="186.8" width="1.6" height="1.6"/><rect x="18.0" y="185.6" width="1.4" height="1.4"/><rect x="22.4" y="185.1" width="1.3" height="1.3"/><rect x="17.1" y="185.3" width="1.1" height="1.1"/><rect x="17.2" y="188.5" width="1.3" height="1.3"/><rect x="13.1" y="187.7" width="0.9" height="0.9"/><rect x="23.0" y="179.4" width="1.4" height="1.4"/><rect x="22.1" y="185.1" width="1.8" height="1.8"/><rect x="12.4" y="185.7" width="1.8" height="1.8"/><rect x="19.8" y="183.7" width="1.4" height="1.4"/><rect x="13.8" y="184.2" width="1.2" height="1.2"/><rect x="9.3" y="181.0" width="1.5" height="1.5"/><rect x="12.0" y="182.3" width="0.9" height="0.9"/><rect x="30.3" y="185.8" width="1.8" height="1.8"/><rect x="19.3" y="184.1" width="1.7" height="1.7"/><rect x="20.0" y="188.3" width="1.1" height="1.1"/><rect x="25.2" y="179.3" width="1.8" height="1.8"/><rect x="16.4" y="190.2" width="1.6" height="1.6"/><rect x="17.7" y="188.9" width="1.0" height="1.0"/><rect x="18.3" y="182.6" width="1.0" height="1.0"/><rect x="15.3" y="190.6" width="1.6" height="1.6"/><rect x="3.4" y="183.8" width="1.7" height="1.7"/><rect x="19.2" y="189.8" width="1.0" height="1.0"/><rect x="17.2" y="187.3" width="0.9" height="0.9"/><rect x="15.3" y="183.6" width="1.1" height="1.1"/><rect x="9.8" y="182.3" width="0.9" height="0.9"/><rect x="24.5" y="187.9" width="1.5" height="1.5"/><rect x="27.5" y="188.3" width="1.1" height="1.1"/><rect x="9.7" y="182.4" width="1.2" height="1.2"/><rect x="23.6" y="183.7" width="1.3" height="1.3"/><rect x="4.0" y="183.1" width="1.9" height="1.9"/><rect x="18.1" y="180.1" width="1.6" height="1.6"/><rect x="28.6" y="183.8" width="1.1" height="1.1"/><rect x="10.2" y="183.2" width="1.1" height="1.1"/><rect x="18.0" y="182.2" width="1.6" height="1.6"/><rect x="9.6" y="185.3" width="1.6" height="1.6"/><rect x="29.6" y="185.0" width="1.1" height="1.1"/><rect x="13.0" y="180.9" width="1.9" height="1.9"/><rect x="10.8" y="186.2" width="0.9" height="0.9"/><rect x="8.5" y="185.9" width="1.2" height="1.2"/><rect x="23.4" y="187.8" width="0.9" height="0.9"/><rect x="20.6" y="188.8" width="1.2" height="1.2"/><rect x="8.4" y="185.0" width="1.3" height="1.3"/><rect x="17.9" y="185.6" width="1.5" height="1.5"/><rect x="22.6" y="184.4" width="1.2" height="1.2"/><rect x="12.1" y="191.0" width="1.4" height="1.4"/><rect x="17.2" y="184.6" width="1.0" height="1.0"/><rect x="18.8" y="188.7" width="1.3" height="1.3"/><rect x="8.5" y="187.0" width="1.9" height="1.9"/><rect x="11.1" y="180.8" width="1.8" height="1.8"/><rect x="16.0" y="185.9" width="1.9" height="1.9"/><rect x="8.0" y="183.9" width="0.9" height="0.9"/><rect x="16.8" y="181.1" width="1.6" height="1.6"/></g><g fill="#333" opacity="1.0"><rect x="47.2" y="187.4" width="1.4" height="1.4"/><rect x="52.0" y="188.1" width="1.1" height="1.1"/><rect x="54.4" y="184.8" width="0.8" height="0.8"/><rect x="51.8" y="183.5" width="1.0" height="1.0"/><rect x="53.3" y="178.8" width="1.4" height="1.4"/><rect x="43.0" y="190.7" width="1.1" height="1.1"/><rect x="57.2" y="182.1" width="0.9" height="0.9"/><rect x="55.8" y="188.8" width="0.7" height="0.7"/><rect x="38.5" y="181.4" width="0.8" height="0.8"/><rect x="43.2" y="185.6" width="0.8" height="0.8"/><rect x="49.6" y="180.3" width="1.2" height="1.2"/><rect x="49.1" y="184.3" width="1.4" height="1.4"/><rect x="53.6" y="187.5" width="0.8" height="0.8"/><rect x="41.8" y="184.6" width="1.1" height="1.1"/><rect x="47.2" y="185.4" width="1.3" height="1.3"/><rect x="45.1" y="184.2" width="1.4" height="1.4"/><rect x="53.6" y="184.9" width="1.0" height="1.0"/><rect x="45.9" y="186.0" width="1.3" height="1.3"/><rect x="54.2" y="183.8" width="1.1" height="1.1"/><rect x="47.9" y="185.6" width="1.1" height="1.1"/><rect x="38.8" y="184.2" width="0.8" height="0.8"/><rect x="60.6" y="185.4" width="0.7" height="0.7"/><rect x="51.0" y="180.8" width="1.5" height="1.5"/><rect x="51.3" y="186.2" width="0.7" height="0.7"/><rect x="57.2" y="186.8" width="1.5" height="1.5"/><rect x="44.2" y="190.0" width="0.7" height="0.7"/><rect x="42.3" y="184.5" width="0.7" height="0.7"/><rect x="44.3" y="182.9" width="0.9" height="0.9"/><rect x="56.2" y="179.6" width="0.8" height="0.8"/><rect x="52.8" y="185.8" width="0.9" height="0.9"/><rect x="64.7" y="183.4" width="0.8" height="0.8"/><rect x="54.1" y="178.5" width="1.1" height="1.1"/><rect x="60.5" y="184.9" width="0.8" height="0.8"/><rect x="51.8" y="187.1" width="1.2" height="1.2"/><rect x="41.2" y="179.4" width="0.7" height="0.7"/><rect x="50.6" y="188.1" width="1.4" height="1.4"/><rect x="60.5" y="189.6" width="1.4" height="1.4"/><rect x="42.1" y="182.9" width="0.7" height="0.7"/><rect x="43.4" y="181.6" width="1.3" height="1.3"/><rect x="47.6" y="184.8" width="0.9" height="0.9"/><rect x="49.4" y="183.7" width="0.8" height="0.8"/><rect x="50.9" y="192.1" width="1.1" height="1.1"/><rect x="46.5" y="183.6" width="1.2" height="1.2"/><rect x="55.1" y="182.0" width="1.0" height="1.0"/><rect x="48.1" y="183.1" width="1.2" height="1.2"/><rect x="47.6" y="189.1" width="1.3" height="1.3"/><rect x="59.3" y="185.6" width="0.9" height="0.9"/><rect x="40.5" y="180.7" width="1.1" height="1.1"/><rect x="47.0" y="182.6" width="0.9" height="0.9"/><rect x="42.4" y="184.7" width="0.9" height="0.9"/><rect x="51.8" y="180.3" width="1.0" height="1.0"/><rect x="50.7" y="192.6" width="1.5" height="1.5"/><rect x="55.9" y="183.9" width="0.7" height="0.7"/><rect x="49.9" y="184.3" width="1.4" height="1.4"/><rect x="48.3" y="181.7" width="1.0" height="1.0"/><rect x="49.3" y="182.8" width="1.0" height="1.0"/><rect x="53.4" y="179.1" width="1.2" height="1.2"/><rect x="54.9" y="186.7" width="0.9" height="0.9"/><rect x="60.8" y="186.1" width="1.2" height="1.2"/><rect x="58.9" y="182.7" width="1.5" height="1.5"/><rect x="42.7" y="185.9" width="0.9" height="0.9"/><rect x="50.5" y="185.0" width="1.0" height="1.0"/><rect x="54.2" y="190.3" width="1.1" height="1.1"/><rect x="51.2" y="183.3" width="0.7" height="0.7"/><rect x="48.1" y="179.9" width="1.2" height="1.2"/><rect x="49.1" y="185.0" width="1.1" height="1.1"/><rect x="55.9" y="180.3" width="0.7" height="0.7"/><rect x="47.0" y="184.3" width="1.3" height="1.3"/><rect x="43.2" y="179.3" width="0.7" height="0.7"/><rect x="38.6" y="186.7" width="1.0" height="1.0"/><rect x="50.8" y="184.5" width="0.7" height="0.7"/><rect x="58.2" y="188.2" width="0.8" height="0.8"/><rect x="49.0" y="187.0" width="1.1" height="1.1"/><rect x="60.8" y="186.7" width="1.2" height="1.2"/><rect x="60.9" y="181.1" width="0.7" height="0.7"/><rect x="57.0" y="181.3" width="1.5" height="1.5"/><rect x="48.1" y="185.1" width="1.3" height="1.3"/><rect x="44.8" y="185.2" width="1.2" height="1.2"/><rect x="49.1" y="180.7" width="0.9" height="0.9"/><rect x="41.3" y="188.0" width="0.9" height="0.9"/><rect x="55.4" y="188.9" width="1.2" height="1.2"/><rect x="56.1" y="186.3" width="1.5" height="1.5"/><rect x="49.7" y="191.8" width="0.9" height="0.9"/><rect x="57.9" y="187.4" width="1.4" height="1.4"/><rect x="51.4" y="183.8" width="1.3" height="1.3"/><rect x="45.2" y="181.8" width="1.2" height="1.2"/><rect x="46.6" y="184.7" width="1.3" height="1.3"/><rect x="55.2" y="187.5" width="1.4" height="1.4"/><rect x="43.4" y="183.0" width="1.3" height="1.3"/><rect x="44.1" y="185.2" width="1.1" height="1.1"/><rect x="57.5" y="185.5" width="0.7" height="0.7"/><rect x="48.7" y="183.1" width="1.4" height="1.4"/><rect x="48.4" y="192.1" width="1.2" height="1.2"/><rect x="41.9" y="181.0" width="0.9" height="0.9"/><rect x="55.4" y="180.7" width="1.3" height="1.3"/><rect x="53.9" y="182.4" width="1.0" height="1.0"/><rect x="49.2" y="186.2" width="1.4" height="1.4"/><rect x="47.8" y="180.7" width="1.1" height="1.1"/><rect x="52.9" y="184.0" width="1.0" height="1.0"/><rect x="47.6" y="180.4" width="1.1" height="1.1"/><rect x="50.7" y="187.8" width="1.2" height="1.2"/><rect x="49.6" y="189.7" width="0.8" height="0.8"/><rect x="49.3" y="186.2" width="1.1" height="1.1"/><rect x="62.4" y="183.2" width="1.0" height="1.0"/><rect x="63.8" y="187.5" width="1.4" height="1.4"/><rect x="46.8" y="181.8" width="1.0" height="1.0"/><rect x="44.3" y="181.9" width="1.4" height="1.4"/><rect x="55.9" y="182.8" width="0.7" height="0.7"/><rect x="52.8" y="179.3" width="1.2" height="1.2"/><rect x="53.5" y="185.7" width="1.5" height="1.5"/><rect x="45.8" y="188.4" width="1.5" height="1.5"/><rect x="54.4" y="190.3" width="0.7" height="0.7"/><rect x="40.4" y="182.5" width="0.8" height="0.8"/><rect x="56.7" y="178.7" width="1.5" height="1.5"/><rect x="49.2" y="180.1" width="1.4" height="1.4"/><rect x="54.4" y="179.7" width="1.2" height="1.2"/><rect x="53.8" y="188.3" width="0.9" height="0.9"/><rect x="58.7" y="179.6" width="0.9" height="0.9"/><rect x="53.4" y="184.9" width="0.7" height="0.7"/><rect x="49.7" y="186.4" width="1.5" height="1.5"/><rect x="46.6" y="188.1" width="1.4" height="1.4"/><rect x="41.3" y="183.8" width="1.0" height="1.0"/><rect x="49.5" y="189.8" width="1.1" height="1.1"/><rect x="53.5" y="186.7" width="1.1" height="1.1"/><rect x="53.2" y="180.9" width="0.7" height="0.7"/><rect x="54.5" y="184.1" width="1.4" height="1.4"/><rect x="60.7" y="186.6" width="0.8" height="0.8"/><rect x="50.5" y="189.2" width="1.3" height="1.3"/><rect x="44.3" y="186.6" width="1.0" height="1.0"/><rect x="45.4" y="184.6" width="1.5" height="1.5"/><rect x="52.4" y="187.0" width="1.1" height="1.1"/><rect x="44.3" y="190.1" width="0.7" height="0.7"/><rect x="48.0" y="181.6" width="1.5" height="1.5"/><rect x="48.7" y="189.1" width="0.9" height="0.9"/><rect x="45.4" y="184.3" width="1.2" height="1.2"/><rect x="41.7" y="188.3" width="0.9" height="0.9"/><rect x="42.4" y="186.4" width="1.3" height="1.3"/><rect x="46.7" y="181.5" width="0.7" height="0.7"/><rect x="54.0" y="186.5" width="0.8" height="0.8"/><rect x="55.2" y="190.4" width="1.0" height="1.0"/><rect x="55.3" y="183.4" width="0.9" height="0.9"/><rect x="52.6" y="187.0" width="1.3" height="1.3"/><rect x="46.3" y="183.6" width="1.4" height="1.4"/><rect x="47.7" y="181.2" width="1.2" height="1.2"/><rect x="46.8" y="181.4" width="0.7" height="0.7"/><rect x="44.0" y="189.1" width="0.7" height="0.7"/><rect x="53.1" y="177.1" width="1.0" height="1.0"/><rect x="45.2" y="188.5" width="0.9" height="0.9"/><rect x="51.9" y="187.0" width="1.3" height="1.3"/><rect x="63.6" y="182.4" width="0.7" height="0.7"/><rect x="57.8" y="181.1" width="1.2" height="1.2"/><rect x="44.2" y="186.6" width="0.8" height="0.8"/><rect x="45.6" y="184.0" width="0.8" height="0.8"/><rect x="57.3" y="181.2" width="1.4" height="1.4"/><rect x="48.5" y="190.0" width="0.9" height="0.9"/><rect x="53.3" y="182.6" width="1.2" height="1.2"/><rect x="45.2" y="183.8" width="0.7" height="0.7"/><rect x="42.5" y="185.4" width="1.4" height="1.4"/><rect x="52.3" y="187.5" width="0.9" height="0.9"/><rect x="52.6" y="182.2" width="1.2" height="1.2"/><rect x="53.8" y="185.3" width="1.3" height="1.3"/><rect x="47.6" y="185.0" width="1.1" height="1.1"/><rect x="57.5" y="183.5" width="1.2" height="1.2"/><rect x="43.7" y="187.3" width="0.7" height="0.7"/><rect x="57.8" y="181.5" width="1.0" height="1.0"/><rect x="50.0" y="187.5" width="1.5" height="1.5"/><rect x="54.7" y="181.7" width="1.2" height="1.2"/><rect x="46.6" y="184.1" width="0.7" height="0.7"/><rect x="50.6" y="182.6" width="1.2" height="1.2"/><rect x="52.5" y="185.1" width="0.8" height="0.8"/><rect x="45.5" y="180.5" width="1.5" height="1.5"/><rect x="46.4" y="180.9" width="0.7" height="0.7"/><rect x="58.8" y="183.8" width="1.4" height="1.4"/><rect x="63.8" y="187.0" width="1.1" height="1.1"/><rect x="52.5" y="189.0" width="0.7" height="0.7"/><rect x="46.7" y="183.6" width="1.3" height="1.3"/><rect x="55.9" y="190.4" width="1.2" height="1.2"/><rect x="48.0" y="190.8" width="1.0" height="1.0"/><rect x="61.3" y="180.4" width="1.3" height="1.3"/><rect x="46.6" y="183.2" width="1.5" height="1.5"/><rect x="44.2" y="191.3" width="1.3" height="1.3"/><rect x="57.7" y="178.9" width="1.1" height="1.1"/><rect x="41.1" y="189.4" width="1.2" height="1.2"/><rect x="52.1" y="185.1" width="1.1" height="1.1"/><rect x="62.0" y="189.4" width="0.7" height="0.7"/><rect x="54.7" y="183.1" width="0.8" height="0.8"/><rect x="51.2" y="179.0" width="1.0" height="1.0"/><rect x="43.7" y="182.1" width="1.5" height="1.5"/><rect x="42.3" y="184.8" width="1.1" height="1.1"/><rect x="41.9" y="188.2" width="0.8" height="0.8"/><rect x="51.6" y="180.0" width="1.0" height="1.0"/><rect x="53.5" y="186.0" width="1.1" height="1.1"/><rect x="55.7" y="191.1" width="1.4" height="1.4"/><rect x="37.3" y="186.0" width="0.8" height="0.8"/><rect x="46.7" y="189.1" width="1.3" height="1.3"/><rect x="45.4" y="186.1" width="1.4" height="1.4"/><rect x="45.3" y="187.6" width="0.9" height="0.9"/><rect x="40.1" y="185.7" width="1.0" height="1.0"/><rect x="46.7" y="181.0" width="0.7" height="0.7"/><rect x="56.6" y="184.2" width="1.1" height="1.1"/><rect x="55.6" y="184.3" width="0.7" height="0.7"/><rect x="52.1" y="187.2" width="1.4" height="1.4"/><rect x="49.0" y="184.9" width="0.9" height="0.9"/><rect x="46.7" y="184.8" width="0.9" height="0.9"/><rect x="57.3" y="182.6" width="0.9" height="0.9"/><rect x="48.2" y="183.9" width="1.1" height="1.1"/><rect x="49.2" y="183.6" width="1.1" height="1.1"/><rect x="46.8" y="191.2" width="1.2" height="1.2"/><rect x="59.1" y="182.1" width="0.8" height="0.8"/><rect x="55.3" y="190.7" width="1.4" height="1.4"/><rect x="57.7" y="186.6" width="0.9" height="0.9"/><rect x="40.2" y="182.6" width="1.3" height="1.3"/><rect x="49.3" y="190.5" width="1.0" height="1.0"/><rect x="42.5" y="185.8" width="1.2" height="1.2"/><rect x="57.6" y="191.7" width="0.8" height="0.8"/><rect x="45.7" y="192.2" width="1.5" height="1.5"/><rect x="51.6" y="186.0" width="1.3" height="1.3"/><rect x="57.2" y="190.7" width="0.7" height="0.7"/><rect x="55.7" y="187.6" width="0.7" height="0.7"/><rect x="44.7" y="185.7" width="1.3" height="1.3"/></g><g fill="#000" opacity="1.0"><rect x="85.1" y="182.4" width="1.7" height="1.7"/><rect x="92.3" y="190.4" width="1.7" height="1.7"/><rect x="86.7" y="179.1" width="1.0" height="1.0"/><rect x="89.0" y="186.2" width="1.0" height="1.0"/><rect x="87.9" y="178.3" width="1.6" height="1.6"/><rect x="85.9" y="178.0" width="0.9" height="0.9"/><rect x="92.0" y="176.2" width="1.4" height="1.4"/><rect x="90.3" y="190.3" width="1.2" height="1.2"/><rect x="89.3" y="174.5" width="0.9" height="0.9"/><rect x="88.6" y="190.2" width="0.8" height="0.8"/><rect x="87.5" y="176.6" width="1.5" height="1.5"/><rect x="88.4" y="188.1" width="1.3" height="1.3"/><rect x="90.0" y="179.3" width="1.3" height="1.3"/><rect x="89.8" y="189.7" width="1.0" height="1.0"/></g><path d="M113 178 L118 186 M123 182 L128 188 M118 190 L126 190" stroke="#888" stroke-width="2"/><g fill="#000" opacity="1.0"><rect x="154.6" y="186.2" width="1.7" height="1.7"/><rect x="145.6" y="188.4" width="1.5" height="1.5"/><rect x="151.9" y="188.7" width="0.8" height="0.8"/><rect x="161.7" y="179.1" width="0.9" height="0.9"/><rect x="144.6" y="181.2" width="1.5" height="1.5"/><rect x="150.2" y="190.3" width="1.4" height="1.4"/><rect x="162.7" y="185.6" width="1.7" height="1.7"/><rect x="149.6" y="189.2" width="1.7" height="1.7"/><rect x="155.3" y="180.4" width="1.7" height="1.7"/><rect x="153.1" y="190.1" width="1.5" height="1.5"/><rect x="141.9" y="183.8" width="1.6" height="1.6"/><rect x="164.7" y="181.7" width="1.4" height="1.4"/><rect x="152.1" y="174.7" width="1.2" height="1.2"/><rect x="144.4" y="182.0" width="1.0" height="1.0"/><rect x="152.2" y="190.3" width="1.7" height="1.7"/><rect x="149.8" y="174.9" width="1.3" height="1.3"/><rect x="144.2" y="178.7" width="0.8" height="0.8"/><rect x="141.9" y="185.1" width="1.0" height="1.0"/><rect x="149.7" y="182.5" width="1.0" height="1.0"/><rect x="154.0" y="180.5" width="1.6" height="1.6"/><rect x="156.3" y="174.0" width="1.0" height="1.0"/><rect x="159.6" y="179.7" width="1.2" height="1.2"/><rect x="161.4" y="180.0" width="1.5" height="1.5"/><rect x="153.6" y="182.4" width="1.1" height="1.1"/></g><path d="M132.5 27.4 L132.5 32.6 M129.9 30 L135.1 30" stroke="#1c2b6b" stroke-width="1.3"/><path d="M166.5 27.4 L166.5 32.6 M163.9 30 L169.1 30" stroke="#1c2b6b" stroke-width="1.3"/><path d="M30 61.4 L30 66.6 M27.4 64 L32.6 64" stroke="#1c2b6b" stroke-width="1.3"/><path d="M64 61.4 L64 66.6 M61.4 64 L66.6 64" stroke="#1c2b6b" stroke-width="1.3"/><path d="M98 61.4 L98 66.6 M95.4 64 L100.6 64" stroke="#1c2b6b" stroke-width="1.3"/><path d="M132.5 61.4 L132.5 66.6 M129.9 64 L135.1 64" stroke="#1c2b6b" stroke-width="1.3"/><path d="M166.5 61.4 L166.5 66.6 M163.9 64 L169.1 64" stroke="#1c2b6b" stroke-width="1.3"/><path d="M30 95.4 L30 100.6 M27.4 98 L32.6 98" stroke="#1c2b6b" stroke-width="1.3"/><path d="M64 95.4 L64 100.6 M61.4 98 L66.6 98" stroke="#8a1c2a" stroke-width="1.3"/><path d="M98 95.4 L98 100.6 M95.4 98 L100.6 98" stroke="#8a1c2a" stroke-width="1.3"/><path d="M132.5 95.4 L132.5 100.6 M129.9 98 L135.1 98" stroke="#8a1c2a" stroke-width="1.3"/><path d="M166.5 95.4 L166.5 100.6 M163.9 98 L169.1 98" stroke="#8a1c2a" stroke-width="1.3"/><path d="M30 129.4 L30 134.6 M27.4 132 L32.6 132" stroke="#8a1c2a" stroke-width="1.3"/><path d="M98 129.4 L98 134.6 M95.4 132 L100.6 132" stroke="#000" stroke-width="1.3"/><path d="M132.5 129.4 L132.5 134.6 M129.9 132 L135.1 132" stroke="#000" stroke-width="1.3"/><path d="M30 163.4 L30 168.6 M27.4 166 L32.6 166" stroke="#000" stroke-width="1.3"/><path d="M64 163.4 L64 168.6 M61.4 166 L66.6 166" stroke="#000" stroke-width="1.3"/><path d="M98 163.4 L98 168.6 M95.4 166 L100.6 166" stroke="#8a1c2a" stroke-width="1.3"/><path d="M132.5 163.4 L132.5 168.6 M129.9 166 L135.1 166" stroke="#8a1c2a" stroke-width="1.3"/><path d="M166.5 163.4 L166.5 168.6 M163.9 166 L169.1 166" stroke="#8a1c2a" stroke-width="1.3"/><path d="M94 33 L101 26 L101 33Z" fill="#8aa0d8"/></g></svg>
<div class="a" style="left:885px;top:307px;width:195px;height:19px;background:#262626;border-radius:2px"></div>
<div class="t" style="left:889px;top:309px;font-size:12px;color:#e0e0e0">Basic,</div>
<svg style="left:1066px;top:312px" width="12" height="8" viewBox="0 0 12 8"><path d="M1 1 L6 6 L11 1" fill="none" stroke="#e6e6e6" stroke-width="1.8"/></svg>
<div class="a" style="left:885px;top:327px;width:197px;height:30px;background:#2f2f2f;border:1px solid #6a6a6a"></div>
<div class="a" style="left:886px;top:328px;width:6px;height:28px;background:#555"></div>
<div class="a" style="left:892px;top:328px;width:1px;height:28px;background:#151515"></div>
<div class="t" style="left:886px;top:333px;font-size:12px;color:#e8e8e8">间距</div>
<div class="t" style="left:1046px;top:335px;font-size:12px;color:#e0e0e0">10.0</div>
<svg style="left:1071px;top:329px" width="9" height="26" viewBox="0 0 9 26"><path d="M1 7 L4.5 3 L8 7 M1 19 L4.5 23 L8 19" fill="none" stroke="#bbb" stroke-width="1.3"/></svg>
<svg style="left:897px;top:361px" width="15" height="14" viewBox="0 0 15 14"><path d="M1 2 L8 2 M1 6 L6 6 M1 10 L4 10 M1 13 L14 13" stroke="#c9c9c9" stroke-width="1.5"/><path d="M6 10 L13 3 L14.5 4.5 L7.5 11.5 L5.5 12Z" fill="#c9c9c9"/></svg>
<svg style="left:936px;top:361px" width="14" height="14" viewBox="0 0 14 14"><path d="M3 3 L9 3 L13 7 L13 13.5 L3 13.5Z" fill="none" stroke="#c9c9c9" stroke-width="1.5"/><path d="M3 0 L3 6 M0 3 L6 3" stroke="#c9c9c9" stroke-width="1.5"/></svg>
<svg style="left:975px;top:361px" width="14" height="14" viewBox="0 0 14 14"><rect x="1" y="1" width="8" height="7" fill="none" stroke="#c9c9c9" stroke-width="1.4"/><path d="M5 9 L5 13 L13 13 L13 6 L10 6" fill="none" stroke="#c9c9c9" stroke-width="1.4"/></svg>
<svg style="left:1014px;top:361px" width="14" height="14" viewBox="0 0 14 14"><rect x="0" y="0" width="14" height="14" fill="#c9c9c9"/><path d="M2.5 2.5 L11.5 11.5 M11.5 2.5 L2.5 11.5" stroke="#454545" stroke-width="2"/></svg>
<svg style="left:1054px;top:361px" width="14" height="14" viewBox="0 0 14 14"><path d="M12 4 C10 1 6 0 3.5 2 C0.5 4.5 0.5 9.5 3.5 12 C6.5 14.5 11 13.5 13 10" fill="none" stroke="#c9c9c9" stroke-width="2"/><path d="M9 0 L14 0 L14 5.5Z" fill="#c9c9c9"/></svg>
<div class="a" style="left:882px;top:381px;width:203px;height:1px;background:#5a5a5a"></div>
<svg style="left:880px;top:405px" width="3" height="18" viewBox="0 0 3 18"><g fill="#8a8a8a"><rect x="0" y="0" width="2" height="3"/><rect x="0" y="7" width="2" height="3"/><rect x="0" y="14" width="2" height="3"/></g></svg>
<svg style="left:975px;top:383px" width="16" height="3" viewBox="0 0 16 3"><g fill="#9a9a9a"><rect x="0" y="0" width="3" height="2"/><rect x="6" y="0" width="3" height="2"/><rect x="12" y="0" width="3" height="2"/></g></svg>
<div class="a" style="left:882px;top:407px;width:203px;height:1px;background:#5a5a5a"></div>
<div class="a" style="left:883px;top:386px;width:46px;height:22px;background:#454545;border:1px solid #5a5a5a;border-bottom:none"></div>
<div class="a" style="left:929px;top:388px;width:89px;height:19px;background:#2f2f2f"></div>
<div class="a" style="left:972px;top:388px;width:1px;height:19px;background:#3d3d3d"></div>
<svg style="left:885px;top:390px" width="13" height="13" viewBox="0 0 13 13"><path d="M1 3 L12 1 L12 3.5 L1 5.5Z M1 7 L12 5 L12 7.5 L1 9.5Z M1 11 L12 9 L12 11.5 L1 13.5Z" fill="#c9c9c9"/></svg>
<div class="t" style="left:899px;top:389px;font-size:12px;color:#f0f0f0">图层</div>
<svg style="left:930px;top:390px" width="12" height="13" viewBox="0 0 12 13"><rect x="0.5" y="0.5" width="11" height="12" fill="none" stroke="#c9c9c9" stroke-width="1"/><path d="M3.5 2 L3.5 11 M6 2 L6 11 M8.5 2 L8.5 11" stroke="#c9c9c9" stroke-width="1.3"/></svg>
<div class="t" style="left:944px;top:389px;font-size:12px;color:#f0f0f0">通道</div>
<svg style="left:975px;top:392px" width="13" height="11" viewBox="0 0 13 11"><path d="M2 10 C3 4 10 4 11 10" fill="none" stroke="#c9c9c9" stroke-width="1.8"/><path d="M0 3 L13 3" stroke="#c9c9c9" stroke-width="1.6"/><circle cx="6.5" cy="3" r="1.5" fill="#c9c9c9"/></svg>
<div class="t" style="left:990px;top:389px;font-size:12px;color:#f0f0f0">路径</div>
<svg style="left:1070px;top:392px" width="11" height="11" viewBox="0 0 11 11"><rect x="0.5" y="0.5" width="10" height="10" fill="none" stroke="#c4c4c4" stroke-width="1"/><path d="M8 2.5 L8 8.5 L2.5 5.5Z" fill="#c4c4c4"/></svg>
<div class="a" style="left:885px;top:411px;width:152px;height:25px;background:#2f2f2f;border:1px solid #222;border-radius:3px"></div>
<div class="t" style="left:892px;top:416px;font-size:12px;color:#e0e0e0">模式</div>
<div class="t" style="left:987px;top:416px;font-size:12px;color:#e0e0e0">正常</div>
<svg style="left:1019px;top:419px" width="13" height="9" viewBox="0 0 13 9"><path d="M1.5 1.5 L6.5 6.5 L11.5 1.5" fill="none" stroke="#e6e6e6" stroke-width="1.8"/></svg>
<div class="a" style="left:1040px;top:411px;width:41px;height:25px;background:#2f2f2f;border:1px solid #222;border-radius:3px"></div>
<svg style="left:1044px;top:417px" width="13" height="13" viewBox="0 0 13 13"><path d="M3 3 C6 0 12 1 12 6.5 C12 10 9.5 12 6.5 12" fill="none" stroke="#c9c9c9" stroke-width="1.8"/><path d="M0 2 L5 0.5 L5 5.5Z" fill="#c9c9c9"/><circle cx="4" cy="10" r="1.8" fill="#c9c9c9"/></svg>
<svg style="left:1063px;top:419px" width="13" height="9" viewBox="0 0 13 9"><path d="M1.5 1.5 L6.5 6.5 L11.5 1.5" fill="none" stroke="#e6e6e6" stroke-width="1.8"/></svg>
<div class="a" style="left:885px;top:439px;width:197px;height:29px;background:#5a5a5a;border:1px solid #6a6a6a"></div>
<div class="a" style="left:1070px;top:440px;width:11px;height:27px;background:#2a2a2a"></div>
<div class="t" style="left:886px;top:445px;font-size:12px;color:#ececec">不透明度</div>
<div class="t" style="left:1039px;top:446px;font-size:12px;color:#e0e0e0">100.0</div>
<svg style="left:1071px;top:441px" width="9" height="25" viewBox="0 0 9 25"><path d="M1 7 L4.5 3 L8 7" fill="none" stroke="#666" stroke-width="1.3"/><path d="M1 18 L4.5 22 L8 18" fill="none" stroke="#bbb" stroke-width="1.3"/></svg>
<div class="t" style="left:885px;top:473px;font-size:12px;color:#e0e0e0">锁定：</div>
<svg style="left:927px;top:474px" width="14" height="14" viewBox="0 0 14 14"><path d="M2 13 C3 10 4 9 6 9 L13 1 L14 2 L7 10 C7 12 5 13 2 13Z" fill="#c9c9c9"/></svg>
<svg style="left:950px;top:473px" width="15" height="15" viewBox="0 0 15 15"><path d="M7.5 1 L7.5 14 M1 7.5 L14 7.5" stroke="#c9c9c9" stroke-width="1.4"/><path d="M7.5 0 L5 2.5 L10 2.5Z M7.5 15 L5 12.5 L10 12.5Z M0 7.5 L2.5 5 L2.5 10Z M15 7.5 L12.5 5 L12.5 10Z" fill="#c9c9c9"/></svg>
<svg style="left:975px;top:474px" width="13" height="13" viewBox="0 0 13 13"><rect x="0" y="0" width="13" height="13" fill="#9a9a9a"/><g fill="#5a5a5a"><rect x="0" y="0" width="3" height="3"/><rect x="6" y="0" width="3" height="3"/><rect x="3" y="3" width="3" height="3"/><rect x="9" y="3" width="3" height="3"/><rect x="0" y="6" width="3" height="3"/><rect x="6" y="6" width="3" height="3"/><rect x="3" y="9" width="3" height="3"/><rect x="9" y="9" width="3" height="3"/></g></svg>
<div class="a" style="left:885px;top:492px;width:197px;height:242px;background:#303030"></div>
<div class="a" style="left:885px;top:493px;width:196px;height:40px;background:#212121"></div>
<svg style="left:889px;top:503px" width="21" height="18" viewBox="0 0 21 18"><path d="M1 9 C5 2 16 2 20 9 C16 16 5 16 1 9Z" fill="none" stroke="#c9c9c9" stroke-width="1.8"/><circle cx="10.5" cy="9" r="3.6" fill="none" stroke="#c9c9c9" stroke-width="1.8"/></svg>
<div class="a" style="left:961px;top:495px;width:36px;height:36px;background:#fff"></div>
<svg style="left:961px;top:495px" width="36" height="36" viewBox="0 0 48 48"><g fill="none" stroke="#5a5a5a" stroke-width="0.9"><circle cx="32" cy="11" r="5" fill="#f4f4f4"/><path d="M26 6 C26 3 27 2 27.5 2 C28.5 3 29 5 28.5 6.5"/><path d="M24 7 L22 4 M23.5 9 L20 8 M26.5 11 L22 11.5 L24.5 12.5"/><path d="M26.5 14 C26.5 20 26.5 25 26 27 C25 29 20 29 17.5 30 C15 31 15 34 15.5 38 L31.5 38 C32.5 34 32.5 30 31 14.5"/><path d="M9 34 L15 34"/><path d="M18 38.5 L16 44.5 M21 38.5 L20 45 M28 38.5 L29 45.5 M31.5 38 L34 44.5"/></g><g fill="#4a4a4a"><circle cx="22.2" cy="3.6" r="1.5"/><circle cx="19.9" cy="7.6" r="1.5"/><circle cx="28.2" cy="18.6" r="1.3"/><circle cx="28.9" cy="26.9" r="1.3"/><circle cx="22.2" cy="32.9" r="2"/><circle cx="30.5" cy="34.2" r="2"/><circle cx="17.3" cy="36.5" r="1.5"/><ellipse cx="11" cy="34" rx="2.5" ry="1.2"/><circle cx="16" cy="45" r="1.3"/><circle cx="20" cy="45.5" r="1.3"/><circle cx="29" cy="46" r="1.3"/><circle cx="34" cy="45" r="1.3"/></g></svg>
<div class="t" style="left:1001px;top:506px;font-size:12px;letter-spacing:-0.45px;color:#ececec">图片转PDF文件</div>
<div class="a" style="left:885px;top:734px;width:197px;height:15px;background:#1f1f1f"></div>
<div class="a" style="left:886px;top:735px;width:174px;height:13px;background:#5c5c5c;border-radius:3px"></div>
<svg style="left:889px;top:753px" width="15" height="15" viewBox="0 0 15 15"><path d="M4 4 L10 4 L14 8 L14 14.5 L4 14.5Z" fill="none" stroke="#c9c9c9" stroke-width="1.5"/><path d="M4 0 L4 7 M0.5 3.5 L7.5 3.5" stroke="#c9c9c9" stroke-width="1.5"/></svg>
<svg style="left:913px;top:753px" width="15" height="15" viewBox="0 0 15 15"><path d="M0 2 L5 2 L6 4 L14 4 L14 14 L0 14Z" fill="#c9c9c9"/><path d="M8 6 L8 13 M4.5 9.5 L11.5 9.5" stroke="#454545" stroke-width="1.8"/></svg>
<svg style="left:937px;top:755px" width="15" height="10" viewBox="0 0 15 10"><path d="M1 9 L7.5 2 L14 9" fill="none" stroke="#c9c9c9" stroke-width="1.8"/></svg>
<svg style="left:961px;top:755px" width="15" height="10" viewBox="0 0 15 10"><path d="M1 1 L7.5 8 L14 1" fill="none" stroke="#c9c9c9" stroke-width="1.8"/></svg>
<svg style="left:985px;top:753px" width="15" height="15" viewBox="0 0 15 15"><rect x="1" y="1" width="8" height="7" fill="none" stroke="#c9c9c9" stroke-width="1.4"/><path d="M5 9 L5 13.5 L13.5 13.5 L13.5 6 L10 6" fill="none" stroke="#c9c9c9" stroke-width="1.4"/></svg>
<svg style="left:1009px;top:752px" width="15" height="16" viewBox="0 0 15 16"><circle cx="7.5" cy="2.5" r="1.8" fill="none" stroke="#c9c9c9" stroke-width="1.3"/><path d="M7.5 4 L7.5 14 M4.5 6.5 L10.5 6.5" stroke="#c9c9c9" stroke-width="1.5"/><path d="M1 9 C1 13 4 14.5 7.5 14.5 C11 14.5 14 13 14 9" fill="none" stroke="#c9c9c9" stroke-width="1.5"/></svg>
<svg style="left:1033px;top:752px" width="17" height="16" viewBox="0 0 17 16"><path d="M3 1 L11 1 L11 6 C11 9 3 9 3 6Z" fill="#c9c9c9"/><path d="M0 14 L4 9 L16 9 L13 14Z" fill="#c9c9c9"/><circle cx="5.5" cy="3.5" r="0.9" fill="#454545"/><circle cx="8.5" cy="3.5" r="0.9" fill="#454545"/></svg>
<svg style="left:1060px;top:753px" width="15" height="15" viewBox="0 0 15 15"><rect x="0" y="0" width="15" height="15" fill="#c9c9c9"/><path d="M3 3 L12 12 M12 3 L3 12" stroke="#2a2a2a" stroke-width="2.2"/></svg>
</body></html>
